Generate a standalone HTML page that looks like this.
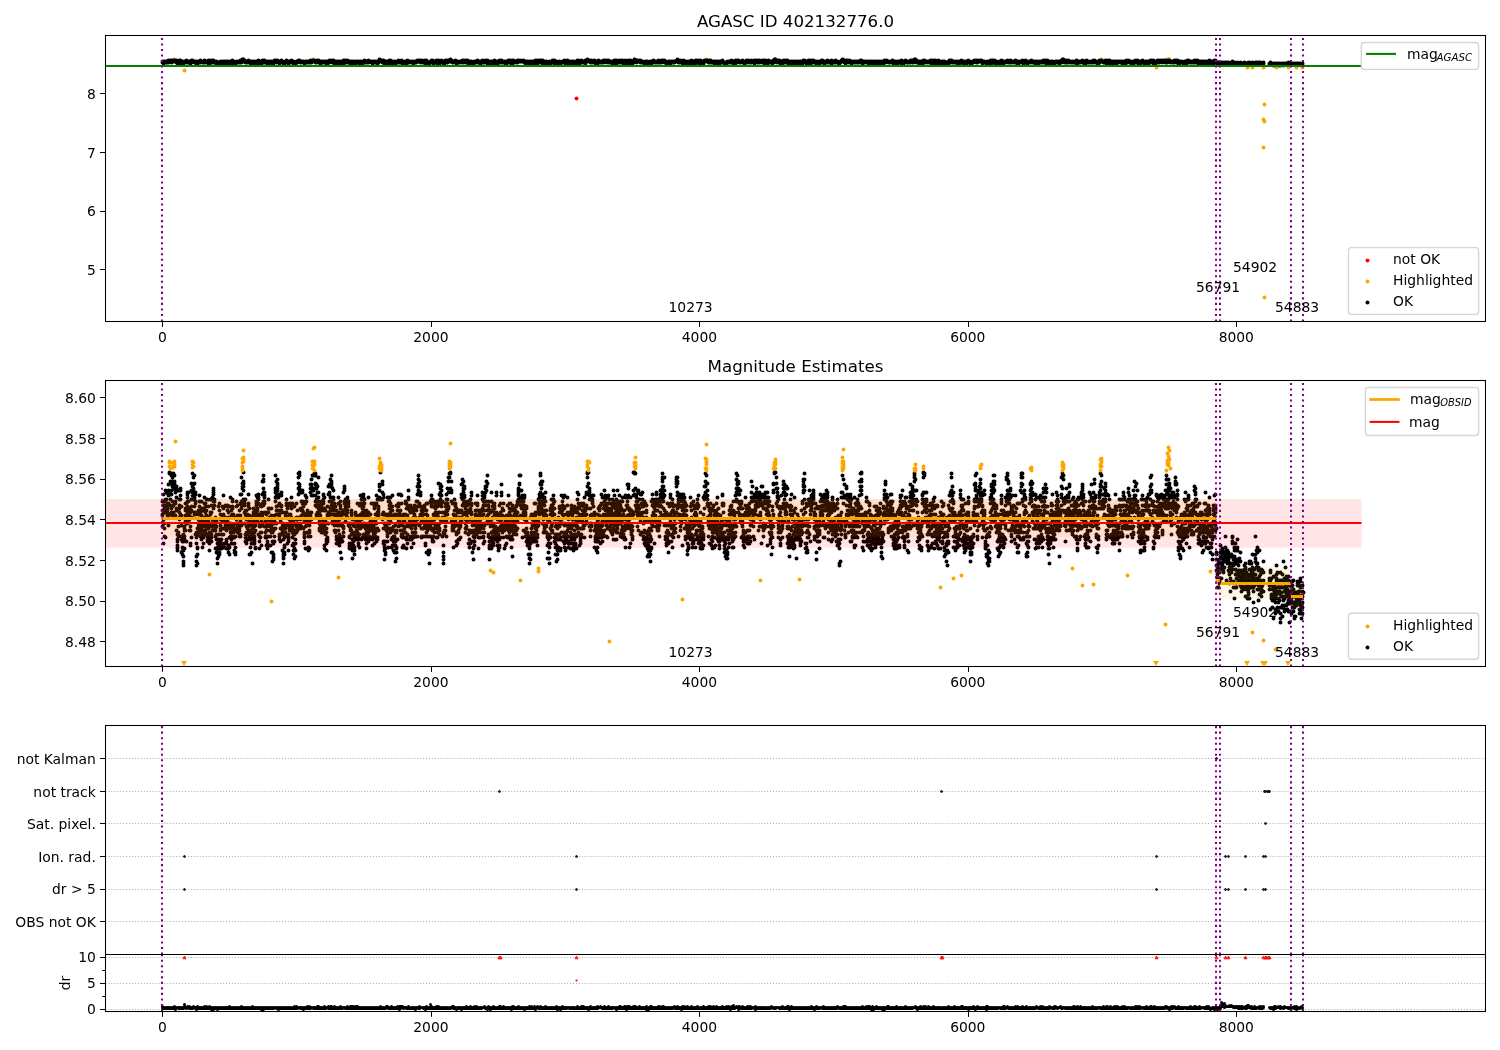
<!DOCTYPE html>
<html><head><meta charset="utf-8"><title>AGASC ID 402132776.0</title>
<style>html,body{margin:0;padding:0;background:#fff}svg{display:block;will-change:transform}</style></head>
<body>
<svg width="1500" height="1050" viewBox="0 0 1500 1050" font-family="'DejaVu Sans', 'Liberation Sans', sans-serif" font-size="13.89px">
<rect width="1500" height="1050" fill="#fff"/>
<defs>
<clipPath id="c1"><rect x="105.5" y="35.5" width="1380.0" height="286.0"/></clipPath>
<clipPath id="c2"><rect x="105.5" y="380.5" width="1380.0" height="286.0"/></clipPath>
<clipPath id="c3"><rect x="105.5" y="725.5" width="1380.0" height="286.0"/></clipPath>
</defs>
<g clip-path="url(#c1)">
<path transform="translate(.5 .5)" d="M174 59h0m69 0h0m70 0h0m67 0h0m70 0h0m185 0h0m71 0h0m69 0h0m68 0h0m258 0h0m67 0h0m-1 0h0m2 0h0m-1 1h0" stroke="#ffa500" stroke-width="4.0" stroke-linecap="round" fill="none"/>
<path transform="translate(.5 .5)" d="M162 62h0m0-1h0m0 1h0m1 1h0m0-2h0m0 0h0m1 0h0m0 0h0m0 0h0m0 1h0m1-1h0m0 1h0m0-1h0m1 1h0m0 0h0m0-1h0m0 0h0m1 0h0m0 1h0m0-1h0m1 0h0m0 1h0m0 0h0m0-2h0m1 0h0m0 0h0m0 1h0m0-1h0m1 0h0m0 1h0m0 0h0m1 1h0m0-1h0m0 1h0m0-2h0m1 0h0m0 1h0m0-1h0m1 1h0m0-1h0m0 1h0m0-1h0m1 1h0m0 0h0m0-1h0m0 0h0m1 1h0m0-1h0m0 1h0m1 0h0m0-1h0m0 2h0m1 1h0m0 0h0m0 0h0m0 0h0m1-1h0m0-1h0m0 2h0m1-2h0m0 0h0m0-1h0m0 1h0m1 1h0m0-1h0m0-1h0m0 1h0m1 1h0m0 0h0m0 1h0m1-2h0m0 2h0m0-2h0m0 1h0m1 0h0m0 1h0m0-1h0m1 0h0m0 0h0m0-1h0m0 1h0m1-1h0m0 0h0m0 0h0m1 0h0m0-1h0m0 2h0m0-1h0m1 0h0m0 0h0m0 0h0m0 1h0m1 0h0m0-1h0m0 1h0m1-1h0m0 0h0m0 0h0m0 1h0m1 0h0m0 0h0m0 1h0m1-1h0m0 0h0m0-2h0m0 1h0m1 0h0m0 0h0m0-1h0m1 1h0m0 0h0m0 0h0m0 0h0m1 0h0m0 1h0m0-1h0m1 0h0m0 0h0m0 1h0m0 0h0m1-1h0m0 2h0m0 0h0m0 0h0m1 0h0m0-1h0m0 0h0m1 0h0m0 0h0m0-1h0m0 0h0m1 1h0m0-1h0m0 1h0m1 0h0m0 0h0m0-2h0m0 1h0m1 0h0m0 0h0m0 0h0m1 1h0m0 0h0m0 0h0m0 0h0m1-1h0m0 0h0m0 0h0m0 1h0m1-2h0m0 2h0m0-1h0m1 0h0m0 1h0m0-1h0m0 0h0m1 0h0m0 0h0m0 0h0m1 1h0m0 0h0m0 0h0m0 0h0m1-1h0m0 2h0m0-3h0m1 2h0m0 1h0m0-1h0m0 1h0m1-3h0m0 2h0m0-1h0m0 1h0m1 0h0m0-1h0m0 1h0m1-1h0m0 0h0m0 1h0m0-2h0m1 2h0m0-2h0m0 1h0m1 1h0m0-1h0m0 1h0m0-1h0m1 1h0m0 0h0m0 0h0m1 1h0m0-2h0m0 1h0m0 1h0m1 0h0m0 0h0m0 0h0m1 0h0m0 0h0m0-1h0m0 0h0m1 0h0m0 1h0m0 0h0m0-1h0m1-1h0m0 0h0m0 2h0m1-1h0m0 1h0m0-1h0m0 1h0m1-1h0m0 0h0m0-1h0m1 0h0m0 0h0m0 2h0m0-2h0m1 1h0m0 0h0m0-1h0m1 0h0m0 0h0m0 0h0m0 0h0m1 1h0m0-1h0m0 2h0m1-2h0m0 0h0m0 0h0m0 1h0m1 1h0m0-1h0m0 0h0m0-1h0m1 1h0m0 0h0m0 0h0m1 0h0m0 0h0m0-1h0m1 0h0m0 1h0m0 1h0m0-2h0m1 0h0m0 0h0m0 0h0m0-1h0m1 2h0m0 1h0m0-2h0m1 2h0m0 0h0m0-1h0m0 0h0m1 1h0m0-1h0m0 1h0m1-1h0m0-1h0m0 1h0m0 0h0m1 0h0m0 0h0m0 0h0m0 0h0m1-1h0m0 1h0m0 0h0m1 0h0m0-1h0m0 1h0m0-1h0m1-1h0m0 1h0m0 1h0m1 0h0m0-1h0m0 0h0m0 0h0m1-1h0m0 0h0m0-1h0m1 1h0m0 1h0m0-2h0m0 1h0m1 1h0m0-1h0m0 0h0m1 2h0m0 0h0m0 0h0m0-1h0m1 0h0m0 1h0m0-1h0m0 1h0m1-1h0m0 1h0m0 0h0m1-1h0m0 0h0m0-1h0m0 1h0m1 0h0m0 1h0m0 0h0m1 1h0m0 0h0m0-2h0m0 2h0m1-2h0m0 1h0m0 0h0m1 1h0m0-2h0m0 0h0m0 1h0m1 0h0m0 0h0m0 0h0m1-1h0m0 1h0m0 0h0m0 0h0m1 1h0m0-1h0m0 0h0m0 0h0m1-1h0m0 0h0m0 0h0m1 2h0m0-1h0m0-1h0m0 1h0m1 0h0m0-2h0m0 2h0m1-1h0m0 1h0m0 0h0m0 0h0m1 0h0m0 0h0m0 1h0m1 0h0m0-1h0m0 0h0m0 0h0m1 0h0m0-1h0m0-1h0m1 1h0m0-1h0m0 2h0m0-2h0m1 0h0m0 1h0m0 0h0m0 1h0m1-1h0m0 0h0m0 1h0m1 0h0m0 0h0m0 0h0m0 0h0m1 0h0m0 1h0m0-2h0m1 1h0m0-1h0m0 1h0m0 1h0m1-1h0m0 0h0m0 0h0m1 0h0m0 0h0m0-1h0m0 0h0m1 0h0m0 1h0m0-1h0m1 1h0m0 1h0m0-1h0m0 2h0m1-1h0m0 0h0m0-2h0m0 1h0m1 0h0m0-1h0m0-1h0m1 1h0m0-1h0m0 0h0m0 0h0m1 1h0m0-1h0m0 2h0m1-1h0m0-1h0m0 1h0m0-1h0m1 1h0m0 0h0m0 0h0m0 1h0m1-1h0m0 2h0m0 0h0m1-1h0m0-1h0m0 1h0m0-1h0m1 0h0m0 0h0m0-1h0m1 1h0m0 1h0m0 0h0m0 0h0m1 0h0m0 0h0m0 1h0m1-1h0m0 0h0m0 1h0m0-1h0m1-1h0m0 1h0m0-1h0m1 1h0m0 0h0m0 0h0m0-2h0m1 1h0m0 0h0m0 0h0m1 0h0m0 2h0m0-1h0m0 0h0m1 0h0m0-1h0m0 0h0m0 0h0m1 0h0m0 0h0m0 0h0m1 1h0m0 0h0m0-2h0m0 1h0m1 1h0m0 0h0m0-1h0m1 2h0m0-2h0m0 1h0m0-1h0m1 2h0m0-1h0m0 1h0m0-1h0m1 1h0m0 0h0m0-1h0m1-1h0m0 0h0m0 0h0m1 1h0m0 0h0m0-1h0m0 1h0m1-2h0m0 1h0m0-1h0m1 1h0m0-1h0m0 0h0m0 0h0m1 1h0m0 1h0m0 0h0m0 0h0m1-1h0m0 1h0m0-1h0m1 0h0m0 0h0m0 0h0m0 0h0m1 1h0m0-1h0m0 0h0m1 1h0m0 0h0m0 1h0m0-1h0m1 0h0m0-1h0m0 0h0m1 0h0m0 0h0m0 1h0m0 0h0m1-1h0m0 0h0m0 1h0m0 0h0m1 0h0m0 0h0m0-1h0m1 1h0m0 0h0m0 0h0m0 0h0m1 0h0m0 0h0m0-2h0m1 1h0m0 1h0m0-1h0m0 0h0m1-1h0m0 1h0m0 0h0m1-1h0m0 0h0m0 0h0m0 0h0m1 0h0m0 0h0m0 0h0m1 1h0m0 1h0m0-1h0m0 0h0m1 0h0m0 0h0m0 0h0m0 1h0m1-2h0m0 0h0m0 0h0m1 0h0m0 1h0m0 1h0m0-1h0m1 1h0m0-1h0m0 0h0m1 0h0m0 1h0m0 0h0m0 1h0m1-1h0m0-1h0m0 0h0m0 1h0m1 0h0m0-1h0m0 1h0m1-1h0m0 1h0m0-1h0m0 0h0m1 0h0m0 1h0m0 0h0m1-1h0m0 1h0m0-1h0m0 0h0m1 2h0m0 0h0m0-2h0m1 0h0m0 0h0m0 2h0m0-1h0m1-1h0m0 0h0m0 1h0m1 0h0m0-1h0m0-1h0m0 2h0m1-1h0m0 0h0m0 0h0m1 0h0m0 0h0m0 0h0m0-1h0m1 0h0m0 0h0m0 2h0m0-1h0m1-1h0m0 1h0m0 0h0m1 1h0m0 1h0m0-1h0m0-1h0m1 1h0m0 0h0m0-1h0m1 0h0m0 1h0m0 0h0m0 0h0m1 1h0m0-1h0m0-1h0m1 1h0m0-1h0m0 1h0m0 0h0m1-1h0m0 1h0m0 1h0m0-2h0m1 1h0m0-1h0m0 1h0m1 0h0m0 0h0m0 0h0m1 0h0m0 0h0m0-1h0m0 2h0m1 0h0m0-2h0m0-1h0m0 1h0m1-1h0m0 0h0m0 0h0m1 1h0m0-1h0m0 2h0m0-1h0m1 0h0m0 1h0m0 0h0m1 0h0m0 0h0m0-1h0m0-1h0m1 2h0m0-1h0m0 0h0m1 1h0m0 0h0m0-1h0m0 0h0m1 0h0m0 2h0m0 0h0m0 0h0m1-2h0m0 1h0m0 0h0m1-1h0m0 1h0m0 0h0m0 0h0m1 1h0m0-1h0m0 0h0m1-1h0m0 1h0m0-1h0m0 2h0m1-1h0m0 0h0m0 1h0m1-1h0m0-1h0m0 0h0m0 0h0m1 1h0m0 0h0m0-1h0m1 0h0m0 1h0m0 0h0m0-1h0m1 1h0m0 1h0m0 0h0m0-1h0m1-1h0m0 2h0m0-2h0m1 0h0m0 0h0m0 0h0m0 1h0m1 1h0m0-1h0m0 0h0m1-1h0m0 0h0m0 1h0m0-1h0m1 0h0m0-1h0m0 2h0m1-1h0m0 1h0m0-1h0m0 0h0m1 1h0m0 0h0m0 0h0m0-1h0m1 1h0m0 0h0m0 0h0m1-2h0m0 1h0m0 1h0m0-1h0m1 0h0m0 0h0m0 0h0m1 0h0m0 0h0m0 0h0m0 0h0m1 1h0m0 0h0m0 0h0m1-1h0m0 1h0m0 0h0m0 1h0m1-1h0m0 0h0m0-1h0m1 1h0m0 0h0m0 0h0m0-1h0m1 1h0m0 0h0m0-1h0m0 0h0m1 0h0m0 1h0m0 0h0m1 0h0m0 1h0m0-2h0m0 1h0m1 0h0m0-1h0m0 0h0m1 0h0m0 0h0m0-1h0m0-1h0m1 1h0m0 0h0m0 0h0m0 0h0m1 1h0m0 0h0m0-1h0m1 0h0m0 0h0m0 2h0m1-2h0m0 1h0m0 1h0m0-1h0m1 0h0m0 2h0m0-1h0m0 1h0m1-1h0m0 1h0m0-2h0m1 0h0m0 1h0m0 0h0m0 0h0m1-1h0m0 1h0m0-1h0m1 2h0m0-2h0m0 1h0m0-1h0m1 1h0m0-2h0m0 1h0m1-1h0m0 1h0m0 1h0m0-1h0m1 2h0m0-1h0m0 0h0m1 0h0m0 0h0m0-1h0m0 2h0m1 0h0m0 0h0m0 0h0m0-1h0m1 1h0m0-2h0m0 2h0m1-1h0m0 1h0m0-2h0m0 2h0m1-1h0m0 0h0m0 0h0m1 0h0m0-1h0m0 0h0m0 0h0m1-1h0m0 2h0m0-1h0m1 0h0m0 1h0m0 0h0m0 0h0m1 0h0m0 0h0m0-1h0m0 0h0m1-1h0m0 2h0m0 0h0m1 1h0m0 0h0m0 0h0m0-1h0m1 0h0m0 0h0m0 1h0m1-1h0m0 0h0m0 0h0m0-1h0m1 0h0m0 1h0m0 0h0m1 1h0m0-1h0m0-1h0m0 1h0m1 0h0m0-1h0m0 1h0m0-2h0m1 2h0m0-1h0m0 1h0m1-1h0m0 1h0m0 0h0m0-1h0m1 0h0m0 0h0m0 0h0m1 0h0m0 1h0m0 0h0m0 0h0m1-1h0m0 1h0m0-1h0m1 2h0m0 0h0m0-1h0m0 0h0m1-1h0m0 1h0m0-1h0m1 1h0m0-1h0m0 0h0m0 0h0m1 0h0m0 1h0m0-1h0m0 0h0m1 0h0m0 0h0m0-1h0m1 1h0m0-1h0m0 1h0m1-1h0m0 0h0m0 1h0m0 0h0m1-1h0m0 1h0m0 0h0m0 1h0m1-1h0m0 0h0m0-1h0m1 2h0m0-1h0m0 0h0m0 1h0m1 0h0m0 0h0m0 0h0m0 0h0m1-1h0m0 0h0m0-1h0m1 2h0m0-1h0m0 2h0m0-1h0m1 0h0m0 0h0m0-2h0m1 2h0m0 0h0m0 1h0m0-1h0m1 0h0m0 0h0m0 0h0m1 1h0m0-1h0m0 0h0m0 1h0m1-1h0m0-1h0m0 0h0m1 0h0m0-1h0m0 0h0m0 1h0m1-1h0m0 1h0m0 1h0m1 1h0m0-1h0m0 0h0m0-1h0m1 0h0m0 0h0m0 0h0m1 0h0m0 1h0m0 0h0m0-1h0m1 0h0m0-1h0m0 2h0m0 0h0m1 1h0m0-1h0m0 0h0m1-1h0m0 0h0m0 0h0m0-1h0m1 1h0m0 1h0m0 1h0m1-2h0m0 0h0m0 1h0m0-1h0m1 0h0m0-1h0m0 1h0m0 0h0m1 0h0m0 0h0m0 0h0m1 0h0m0 1h0m0 1h0m0 0h0m1-1h0m0 1h0m0-1h0m1-2h0m0 1h0m0 1h0m0 0h0m1 0h0m0-1h0m0 1h0m1-2h0m0 2h0m0-1h0m0-1h0m1 0h0m0 0h0m0 1h0m1 0h0m0 0h0m0-1h0m0 0h0m1-1h0m0 2h0m0 0h0m0-1h0m1 0h0m0 1h0m0-1h0m1 2h0m0-1h0m0 1h0m0 0h0m1-1h0m0 1h0m0-1h0m1 0h0m0 0h0m0 0h0m0 0h0m1 0h0m0-1h0m0 2h0m1 0h0m0 0h0m0 0h0m0 1h0m1-1h0m0 0h0m0-1h0m1 1h0m0 0h0m0 0h0m0 0h0m1-1h0m0 1h0m0 0h0m1 0h0m0 0h0m0-1h0m0 1h0m1-1h0m0 0h0m0 0h0m0 0h0m1-1h0m0 1h0m0 1h0m1-1h0m0-1h0m0 2h0m0-1h0m1 0h0m0 0h0m0-1h0m1 1h0m0 1h0m0 0h0m0-1h0m1 1h0m0-1h0m0-1h0m1 1h0m0-1h0m0 1h0m0 1h0m1 1h0m0-2h0m0 1h0m1-1h0m0 2h0m0-2h0m0 0h0m1 0h0m0 0h0m0 1h0m0-1h0m1 1h0m0-1h0m0 1h0m1 0h0m0 1h0m0 0h0m0 0h0m1 0h0m0-1h0m0 0h0m0 1h0m1-1h0m0 0h0m0-1h0m1 0h0m0 0h0m0 1h0m0 0h0m1 0h0m0 0h0m0-1h0m1 0h0m0 1h0m0 0h0m0-2h0m1 2h0m0-1h0m0 0h0m1 1h0m0-1h0m0 0h0m0 1h0m1 0h0m0 1h0m0-2h0m1 0h0m0 0h0m0 0h0m0 1h0m1 0h0m0-1h0m0-1h0m0 2h0m1 0h0m0 0h0m0 0h0m1 0h0m0-1h0m0 1h0m0-1h0m1 0h0m0-1h0m0 0h0m1 1h0m0 0h0m0 0h0m1-1h0m0 0h0m0 3h0m0-1h0m1 1h0m0-1h0m0 0h0m0 0h0m1 1h0m0-1h0m0 0h0m1-1h0m0 1h0m0 0h0m0 0h0m1 1h0m0-2h0m0 0h0m1 0h0m0 1h0m0-1h0m0 0h0m1 2h0m0-1h0m0 0h0m0-1h0m1 1h0m0-2h0m0 1h0m1 2h0m0-2h0m0 2h0m0-2h0m1 0h0m0 0h0m0 0h0m1 1h0m0 1h0m0-2h0m0 1h0m1-1h0m0 1h0m0 0h0m1 0h0m0 0h0m0 0h0m0-2h0m1 1h0m0 1h0m0 0h0m0-1h0m1-1h0m0 2h0m0-1h0m1 1h0m0-1h0m0 1h0m1 0h0m0-1h0m0 1h0m0-1h0m1 1h0m0-1h0m0 0h0m0 0h0m1 2h0m0-2h0m0 1h0m1 1h0m0-2h0m0 1h0m0 0h0m1 0h0m0 0h0m0 0h0m1 0h0m0-1h0m0 0h0m0-1h0m1 0h0m0 1h0m0 1h0m1-2h0m0 2h0m0 0h0m0 0h0m1-1h0m0 1h0m0 1h0m1 0h0m0 0h0m0-3h0m0 1h0m1 1h0m0 0h0m0 0h0m0-2h0m1 1h0m0 1h0m0-1h0m1 0h0m0 0h0m0 0h0m0 0h0m1 0h0m0 0h0m0 1h0m1 0h0m0-1h0m0 0h0m0-1h0m1 0h0m0 1h0m0-1h0m0 1h0m1 0h0m0-1h0m0 0h0m1 1h0m0-1h0m0 1h0m0-1h0m1 1h0m0 0h0m0 0h0m1 0h0m0 0h0m0 0h0m0 0h0m1-1h0m0 1h0m0-1h0m1 1h0m0 0h0m0 1h0m0-1h0m1 0h0m0 1h0m0 1h0m0-1h0m1-1h0m0 1h0m0 1h0m1 0h0m0-2h0m0 2h0m1-1h0m0 0h0m0-1h0m0 1h0m1 0h0m0 1h0m0 0h0m0-1h0m1 1h0m0 0h0m0-2h0m1 1h0m0-1h0m0 1h0m0-1h0m1 0h0m0 0h0m0 0h0m1 2h0m0-2h0m0 1h0m0 1h0m1-2h0m0 2h0m0-1h0m1-1h0m0 2h0m0-3h0m0 2h0m1 0h0m0-1h0m0 1h0m1-1h0m0 2h0m0-3h0m0 1h0m1 0h0m0 0h0m0 0h0m1 1h0m0 0h0m0-2h0m0 2h0m1-2h0m0 1h0m0 0h0m0 0h0m1 0h0m0-1h0m0 0h0m1 0h0m0 1h0m0 1h0m0 1h0m1-1h0m0 0h0m0 0h0m1-1h0m0 2h0m0-1h0m0-1h0m1 0h0m0 1h0m0-1h0m1 1h0m0 1h0m0-1h0m0-1h0m1 2h0m0-1h0m0 0h0m0 0h0m1 1h0m0-1h0m0 1h0m1-1h0m0 1h0m0-2h0m0 1h0m1 0h0m0 0h0m0 1h0m1-1h0m0 0h0m0 0h0m0 0h0m1 0h0m0-1h0m0-1h0m1 0h0m0 2h0m0-1h0m0 1h0m1-2h0m0 1h0m0 2h0m1-1h0m0 0h0m0 0h0m0 0h0m1 0h0m0-1h0m0 1h0m0 0h0m1 1h0m0 0h0m0-1h0m1 0h0m0 1h0m0 0h0m0-1h0m1 0h0m0 0h0m0-1h0m1 2h0m0 0h0m0-1h0m0 0h0m1 0h0m0 0h0m0 0h0m0 0h0m1 0h0m0-1h0m0 0h0m1 1h0m0-1h0m0 0h0m0 1h0m1-1h0m0-1h0m0 2h0m1 1h0m0-1h0m0 0h0m0 0h0m1 0h0m0 0h0m0 1h0m1-2h0m0 2h0m0-2h0m0-1h0m1 2h0m0-1h0m0 2h0m0 0h0m1-2h0m0 0h0m0 0h0m1 2h0m0-1h0m0 0h0m1-1h0m0 0h0m0 0h0m0 1h0m1-1h0m0 0h0m0 2h0m0-2h0m1 1h0m0 0h0m0 1h0m1-2h0m0 1h0m0 1h0m0-2h0m1 1h0m0 0h0m0 1h0m1-1h0m0 1h0m0-1h0m0-1h0m1 1h0m0-1h0m0-1h0m1 1h0m0 1h0m0-2h0m0 0h0m1 2h0m0 1h0m0-1h0m0 0h0m1 0h0m0-1h0m0 1h0m1 0h0m0-1h0m0 0h0m0-1h0m1 2h0m0 0h0m0 0h0m1 0h0m0-1h0m0 1h0m0 0h0m1 0h0m0-1h0m0 0h0m1 2h0m0-2h0m0 1h0m0-2h0m1 1h0m0 0h0m0-1h0m1-1h0m0 0h0m0 0h0m0 2h0m1-1h0m0 0h0m0 0h0m1 0h0m0 1h0m0 0h0m0-1h0m1 1h0m0 1h0m0-1h0m0 0h0m1 0h0m0-1h0m0 2h0m1-1h0m0 0h0m0 0h0m0 1h0m1-1h0m0 0h0m0 0h0m1 0h0m0 0h0m0-1h0m0 2h0m1 0h0m0 0h0m0-1h0m0 2h0m1-1h0m0-1h0m0 0h0m1 1h0m0 0h0m0 1h0m1-1h0m0-2h0m0 1h0m0 0h0m1 1h0m0-1h0m0 1h0m0-1h0m1 1h0m0 0h0m0-1h0m1 1h0m0 0h0m0-1h0m0 0h0m1 0h0m0 1h0m0-1h0m0 1h0m1-1h0m0-1h0m0 2h0m1-2h0m0 1h0m0 0h0m0 0h0m1-1h0m0 1h0m0 0h0m1 0h0m0 0h0m0 1h0m0 0h0m1-1h0m0 0h0m0-1h0m1 0h0m0 2h0m0 0h0m0 0h0m1-1h0m0 1h0m0-1h0m1 0h0m0 1h0m0-1h0m0 1h0m1 0h0m0-1h0m0 0h0m1 0h0m0 2h0m0-1h0m0-1h0m1 1h0m0-1h0m0 1h0m0-1h0m1 0h0m0-1h0m0 3h0m1-1h0m0 1h0m0-1h0m0-2h0m1 1h0m0 2h0m0-3h0m1 2h0m0 0h0m0 0h0m0-1h0m1 0h0m0 1h0m0-1h0m1 0h0m0-1h0m0 0h0m0 2h0m1 0h0m0-1h0m0 1h0m1 0h0m0-2h0m0 2h0m0-1h0m1 1h0m0-2h0m0 1h0m0 1h0m1 0h0m0 1h0m0-1h0m1 0h0m0-1h0m0 0h0m0 1h0m1-2h0m0 1h0m0 1h0m1 0h0m0 1h0m0-2h0m0 0h0m1 1h0m0-1h0m0 0h0m1-1h0m0 0h0m0 1h0m0 1h0m1-1h0m0 1h0m0-1h0m0 2h0m1 0h0m0-3h0m0 2h0m1 1h0m0-1h0m0 0h0m0 0h0m1 0h0m0 1h0m0-1h0m1 0h0m0-1h0m0-1h0m0 1h0m1-1h0m0-1h0m0 1h0m1 0h0m0 0h0m0 0h0m0 1h0m1 0h0m0 0h0m0 1h0m1-1h0m0-1h0m0 1h0m0-1h0m1 1h0m0 0h0m0 0h0m1 0h0m0 0h0m0-1h0m0 1h0m1-1h0m0 1h0m0 1h0m0 0h0m1-1h0m0 0h0m0 1h0m1-1h0m0 1h0m0-1h0m0 1h0m1 0h0m0 0h0m0 0h0m1 0h0m0 0h0m0 1h0m0-1h0m1 0h0m0-1h0m0 2h0m1-2h0m0 0h0m0 0h0m0 2h0m1-1h0m0-1h0m0 2h0m1-1h0m0 1h0m0-1h0m0 1h0m1-1h0m0 0h0m0 0h0m0 1h0m1 0h0m0-1h0m0-1h0m1 1h0m0 0h0m0 1h0m0-2h0m1 1h0m0-1h0m0 0h0m1 0h0m0-1h0m0 1h0m0 0h0m1 0h0m0 0h0m0 1h0m1-1h0m0 1h0m0-1h0m0 1h0m1-1h0m0 0h0m0 0h0m0 1h0m1 0h0m0 0h0m0-1h0m1 1h0m0-2h0m0 2h0m0 0h0m1 0h0m0-1h0m0 0h0m1 0h0m0 0h0m0 0h0m0 1h0m1-2h0m0 2h0m0-1h0m1 0h0m0-1h0m0 1h0m0-1h0m1 1h0m0 0h0m0-1h0m1 0h0m0 2h0m0-1h0m0 0h0m1 0h0m0 1h0m0 0h0m1 0h0m0 1h0m0-1h0m0 0h0m1 0h0m0 0h0m0 1h0m0 0h0m1-1h0m0-1h0m0 0h0m1 2h0m0-2h0m0 0h0m0 1h0m1-1h0m0 0h0m0 2h0m1-1h0m0-1h0m0 1h0m0-1h0m1 1h0m0-1h0m0 0h0m1 1h0m0-1h0m0 1h0m0-1h0m1 0h0m0 1h0m0-1h0m0 1h0m1-1h0m0 0h0m0 0h0m1-1h0m0 0h0m0 0h0m0 1h0m1-2h0m0 2h0m0-1h0m1 1h0m0-1h0m0 1h0m0 1h0m1 0h0m0 0h0m0-1h0m1-1h0m0 1h0m0 0h0m0-1h0m1 2h0m0-1h0m0 0h0m0 1h0m1-1h0m0 2h0m0-1h0m1-1h0m0-1h0m0 1h0m0-1h0m1 1h0m0 1h0m0-1h0m1 1h0m0-1h0m0 2h0m0-2h0m1 0h0m0 0h0m0 0h0m1 1h0m0 1h0m0-1h0m0 1h0m1-1h0m0 1h0m0-2h0m0 2h0m1 0h0m0-2h0m0 1h0m1 0h0m0-1h0m0 0h0m1 0h0m0-1h0m0 0h0m0 2h0m1 0h0m0 1h0m0-1h0m0 0h0m1-1h0m0 1h0m0 1h0m1-2h0m0 1h0m0 0h0m0 0h0m1 1h0m0 0h0m0-3h0m1 1h0m0 0h0m0-1h0m0 1h0m1 1h0m0-1h0m0 0h0m0 0h0m1-1h0m0 2h0m0-2h0m1 1h0m0 2h0m0-1h0m1 1h0m0-2h0m0 0h0m0-1h0m1 1h0m0 1h0m0-1h0m0 0h0m1 1h0m0 0h0m0-1h0m1 2h0m0 0h0m0-2h0m0 0h0m1 0h0m0-1h0m0 1h0m1-1h0m0 0h0m0 0h0m0 1h0m1-1h0m0 0h0m0 0h0m1 0h0m0 1h0m0 0h0m0-1h0m1 1h0m0 0h0m0 1h0m0-1h0m1 1h0m0 0h0m0-2h0m1 2h0m0-2h0m0 1h0m0-1h0m1 1h0m0 1h0m0-1h0m1 1h0m0-1h0m0 1h0m0 0h0m1-1h0m0 1h0m0 0h0m1 0h0m0-1h0m0 2h0m0 0h0m1-2h0m0 1h0m0 0h0m0-1h0m1 1h0m0-1h0m0 0h0m1 0h0m0 0h0m0 2h0m0 0h0m1-2h0m0 1h0m0 0h0m1 1h0m0-1h0m0 1h0m0-1h0m1 0h0m0-1h0m0 1h0m1 0h0m0 0h0m0 0h0m0-1h0m1 1h0m0-2h0m0 1h0m0-1h0m1 2h0m0 0h0m0 0h0m1 0h0m0 0h0m0 1h0m1-1h0m0 1h0m0-1h0m0 1h0m1 0h0m0 0h0m0-1h0m0 0h0m1-1h0m0 0h0m0 0h0m1 1h0m0 0h0m0-1h0m0 1h0m1-1h0m0 0h0m0 1h0m0 0h0m1 0h0m0 0h0m0 0h0m1-2h0m0 1h0m0 1h0m0 0h0m1-1h0m0 1h0m0 0h0m1 1h0m0 0h0m0-2h0m0 0h0m1 1h0m0-1h0m0 1h0m1 1h0m0-2h0m0 0h0m0-1h0m1 1h0m0 1h0m0-2h0m1 0h0m0 0h0m0 1h0m0 0h0m1-1h0m0 0h0m0 1h0m1 0h0m0 0h0m0 0h0m0 1h0m1 0h0m0-1h0m0 0h0m0 0h0m1 0h0m0 0h0m0 0h0m1 0h0m0 1h0m0-2h0m1 2h0m0-1h0m0 1h0m0-1h0m1 2h0m0-1h0m0 0h0m0 1h0m1-1h0m0-1h0m0 0h0m1-1h0m0 1h0m0 1h0m0 0h0m1 0h0m0 0h0m0 0h0m1-1h0m0 0h0m0-1h0m0 0h0m1 2h0m0 0h0m0 0h0m0-1h0m1 1h0m0-1h0m0 1h0m1 0h0m0-2h0m0 1h0m0-1h0m1 1h0m0 0h0m0 0h0m1 0h0m0 1h0m0 0h0m0-1h0m1 2h0m0-2h0m0-1h0m1 1h0m0-1h0m0 1h0m0 1h0m1-1h0m0 0h0m0-1h0m0 0h0m1 2h0m0-1h0m0 0h0m1-1h0m0 2h0m0-1h0m0 0h0m1 0h0m0-1h0m0 2h0m1-1h0m0 0h0m0 0h0m0 0h0m1 1h0m0-1h0m0 0h0m1-1h0m0 1h0m0-1h0m0 1h0m1 1h0m0-1h0m0 0h0m0 1h0m1 1h0m0-2h0m0-1h0m1 0h0m0 1h0m0 0h0m1 2h0m0-2h0m0 0h0m0 0h0m1 0h0m0 0h0m0 1h0m0 1h0m1-3h0m0 0h0m0 0h0m1 1h0m0 0h0m0 1h0m0-1h0m1 1h0m0-1h0m0 1h0m1 0h0m0 0h0m0-1h0m0 0h0m1 1h0m0 1h0m0-1h0m1-1h0m0 1h0m0-2h0m0 0h0m1-1h0m0 2h0m0 0h0m0-1h0m1-1h0m0 1h0m0 1h0m1 1h0m0-1h0m0-1h0m1 1h0m0 0h0m0 0h0m0 0h0m1-1h0m0 0h0m0 1h0m0 1h0m1-1h0m0-1h0m0 0h0m1 3h0m0-1h0m0 0h0m0-1h0m1 1h0m0-1h0m0 1h0m1-1h0m0 2h0m0-1h0m0-1h0m1-1h0m0 0h0m0 1h0m1 0h0m0 1h0m0-2h0m0 0h0m1 2h0m0 0h0m0 0h0m0-1h0m1 0h0m0-1h0m0 2h0m1-2h0m0 1h0m0 1h0m0 0h0m1 1h0m0-2h0m0 2h0m1-1h0m0 1h0m0-1h0m0 1h0m1-2h0m0 1h0m0-1h0m0 0h0m1 1h0m0 0h0m0-1h0m1 0h0m0 0h0m0 2h0m1 0h0m0-1h0m0 0h0m0 0h0m1-1h0m0 0h0m0 1h0m0 0h0m1 1h0m0-2h0m0 2h0m1-2h0m0 2h0m0-1h0m0-1h0m1 1h0m0 0h0m0 0h0m1 0h0m0-1h0m0 1h0m0-1h0m1 1h0m0 0h0m0-1h0m0 2h0m1-1h0m0-1h0m0 1h0m1-1h0m0 0h0m0 2h0m0-1h0m1 1h0m0-2h0m0 0h0m1 0h0m0-1h0m0 0h0m0 1h0m1-1h0m0 0h0m0 1h0m1 1h0m0 0h0m0 0h0m0 0h0m1-1h0m0 1h0m0 1h0m1 0h0m0-1h0m0 1h0m0-2h0m1 0h0m0-1h0m0 1h0m1-1h0m0 1h0m0 1h0m0-2h0m1 1h0m0 2h0m0-2h0m1 1h0m0-2h0m0 2h0m0 0h0m1 0h0m0-1h0m0 1h0m0 0h0m1 0h0m0-2h0m0 2h0m1 0h0m0 0h0m0 0h0m0 0h0m1-1h0m0 1h0m0-1h0m1 1h0m0 0h0m0 1h0m0-1h0m1 0h0m0 0h0m0-1h0m1 2h0m0-2h0m0 1h0m0 0h0m1 1h0m0-1h0m0 1h0m0-1h0m1 0h0m0 0h0m0 0h0m1 0h0m0-1h0m0 0h0m0-1h0m1 0h0m0 2h0m0-1h0m1 1h0m0-1h0m0 0h0m0 0h0m1 2h0m0-2h0m0 0h0m1 0h0m0 0h0m0 0h0m0 0h0m1 0h0m0 1h0m0-1h0m1-1h0m0 1h0m0 0h0m0 1h0m1 0h0m0 0h0m0 0h0m0 0h0m1 0h0m0-1h0m0 0h0m1 0h0m0 1h0m0-1h0m0 1h0m1 0h0m0-2h0m0 3h0m1-2h0m0 0h0m0 0h0m0 1h0m1-1h0m0 1h0m0 0h0m1-1h0m0 1h0m0-1h0m0 0h0m1 1h0m0-2h0m0 2h0m0-1h0m1 0h0m0 0h0m0 0h0m1 1h0m0 0h0m0 0h0m0-1h0m1 2h0m0-1h0m0 1h0m1-1h0m0 0h0m0 1h0m0 0h0m1-1h0m0 0h0m0-1h0m0 1h0m1-1h0m0-1h0m0 1h0m1-1h0m0-1h0m0 0h0m0 0h0m1 1h0m0 0h0m0 0h0m1 0h0m0 0h0m0 1h0m0 1h0m1-1h0m0 2h0m0-2h0m1 1h0m0-1h0m0-1h0m0 1h0m1-1h0m0 1h0m0-1h0m1 2h0m0 0h0m0-1h0m0 0h0m1 0h0m0-1h0m0 1h0m1 1h0m0-1h0m0 0h0m0 1h0m1-1h0m0 2h0m0 0h0m1-1h0m0 0h0m0 0h0m0-1h0m1 1h0m0 0h0m0 0h0m0-1h0m1 1h0m0-1h0m0 1h0m1-1h0m0 1h0m0-1h0m0 0h0m1 1h0m0-1h0m0 0h0m1 0h0m0 1h0m0 0h0m0 0h0m1 0h0m0-1h0m0 1h0m1-1h0m0 1h0m0-1h0m0 1h0m1-1h0m0-1h0m0 1h0m1 0h0m0-1h0m0 0h0m0 0h0m1 3h0m0-2h0m0 1h0m0 1h0m1-2h0m0 0h0m0 0h0m1 0h0m0 1h0m0 0h0m0-1h0m1 1h0m0-1h0m0 0h0m0 1h0m1-1h0m0 0h0m0 0h0m1 1h0m0 0h0m0 0h0m1 1h0m0-2h0m0 1h0m0 0h0m1 0h0m0-1h0m0 1h0m1 1h0m0-1h0m0-1h0m0 0h0m1 1h0m0 1h0m0 0h0m0-2h0m1 2h0m0-1h0m0 0h0m1 1h0m0-2h0m0 2h0m0-2h0m1 1h0m0-1h0m0 0h0m1 1h0m0 0h0m0 0h0m0 1h0m1-2h0m0 2h0m0-2h0m0 0h0m1 1h0m0 0h0m0 0h0m1-1h0m0 2h0m0-1h0m0 1h0m1-2h0m0 0h0m0 1h0m1 0h0m0 0h0m0-1h0m0 0h0m1 3h0m0-3h0m0 2h0m1-1h0m0 1h0m0-1h0m0 0h0m1 1h0m0-1h0m0 0h0m1-1h0m0 1h0m0-2h0m0 0h0m1 1h0m0 1h0m0-1h0m1-1h0m0 1h0m0 0h0m0 0h0m1 0h0m0 0h0m0 0h0m0 0h0m1 1h0m0-1h0m0 1h0m1-1h0m0 1h0m0-1h0m0 1h0m1 0h0m0 0h0m0 0h0m1-1h0m0 0h0m0 0h0m0 0h0m1-1h0m0 2h0m0-2h0m1 3h0m0-2h0m0 1h0m0-1h0m1 1h0m0-1h0m0 1h0m0-1h0m1 0h0m0 2h0m0-2h0m1 1h0m0 0h0m0 1h0m1 0h0m0-1h0m0-1h0m0 1h0m1-1h0m0 1h0m0 0h0m0 0h0m1 0h0m0-1h0m0 1h0m1-1h0m0 1h0m0-1h0m0 1h0m1 1h0m0-3h0m0 1h0m0 0h0m1 0h0m0 0h0m0 0h0m1 1h0m0-1h0m0 1h0m0 1h0m1-1h0m0 0h0m0 0h0m1-1h0m0 0h0m0-1h0m0 0h0m1 2h0m0 0h0m0 0h0m1-1h0m0 1h0m0 0h0m0-1h0m1 1h0m0 0h0m0 0h0m0 0h0m1-1h0m0 1h0m0 0h0m1 0h0m0-1h0m0 0h0m0-1h0m1 1h0m0 0h0m0-1h0m1 0h0m0 1h0m0 1h0m0-1h0m1 1h0m0-1h0m0-1h0m1 1h0m0-1h0m0-1h0m0 2h0m1-2h0m0 1h0m0-1h0m1 3h0m0-1h0m0 0h0m0-1h0m1 2h0m0-1h0m0 1h0m1 0h0m0-1h0m0 0h0m0 0h0m1 1h0m0 1h0m0-2h0m1 1h0m0 0h0m0 0h0m0-1h0m1 0h0m0 1h0m0 0h0m1 1h0m0-2h0m0 0h0m0 0h0m1 1h0m0-2h0m0 0h0m0 0h0m1 0h0m0 1h0m0 1h0m1 0h0m0-1h0m0 0h0m0 0h0m1 0h0m0 0h0m0 0h0m1 1h0m0-1h0m0 0h0m0 1h0m1 0h0m0 0h0m0-1h0m1 0h0m0 0h0m0 0h0m0 0h0m1 1h0m0-2h0m0 2h0m0-1h0m1 1h0m0 1h0m0-3h0m1 2h0m0 0h0m0 0h0m0-1h0m1 1h0m0-1h0m0-1h0m1 3h0m0-1h0m0-1h0m0 0h0m1 1h0m0 1h0m0-3h0m1 1h0m0 1h0m0 0h0m0-1h0m1 0h0m0 1h0m0-1h0m1 2h0m0-3h0m0 1h0m0 0h0m1 2h0m0 0h0m0-1h0m0 0h0m1 0h0m0 0h0m0 1h0m1-1h0m0-1h0m0 0h0m0 0h0m1 1h0m0 1h0m0-2h0m1 1h0m0 0h0m0-1h0m0 1h0m1-1h0m0 1h0m0 0h0m0 0h0m1 0h0m0 0h0m0 1h0m1-1h0m0 0h0m0 0h0m1 1h0m0-1h0m0 1h0m0-1h0m1 1h0m0 0h0m0-1h0m0-1h0m1 1h0m0-2h0m0 1h0m1 0h0m0 0h0m0 0h0m0-1h0m1 2h0m0-2h0m0 0h0m1 2h0m0-1h0m0 0h0m0 0h0m1 0h0m0 0h0m0 1h0m1 0h0m0-1h0m0 0h0m0 1h0m1 0h0m0 0h0m0 0h0m0 0h0m1 0h0m0-1h0m0 1h0m1 1h0m0-1h0m0-1h0m0 1h0m1-1h0m0 1h0m0 0h0m1 0h0m0-1h0m0 1h0m0 1h0m1-2h0m0 0h0m0 0h0m0 1h0m1-1h0m0 1h0m0-2h0m1 2h0m0-1h0m0 0h0m0 0h0m1 0h0m0 2h0m0-1h0m1 1h0m0 0h0m0-2h0m0 1h0m1 0h0m0-1h0m0 1h0m1 1h0m0-1h0m0-1h0m0 0h0m1 0h0m0 1h0m0 0h0m1 0h0m0-2h0m0 2h0m0 0h0m1 0h0m0 0h0m0-1h0m1 2h0m0-1h0m0 0h0m0 1h0m1-1h0m0 0h0m0 1h0m1-2h0m0 1h0m0 0h0m0-1h0m1 0h0m0 0h0m0 0h0m0 1h0m1-2h0m0 1h0m0 0h0m1 0h0m0-1h0m0 0h0m0 1h0m1 0h0m0-1h0m0 2h0m1-1h0m0 0h0m0 1h0m0 0h0m1-2h0m0 1h0m0 0h0m1 0h0m0 0h0m0 0h0m0 0h0m1 0h0m0-1h0m0 0h0m0 0h0m1 1h0m0-1h0m0 1h0m1 0h0m0 2h0m0-1h0m0 0h0m1 0h0m0-1h0m0 1h0m1 0h0m0-1h0m0 1h0m0 0h0m1 0h0m0 0h0m0 0h0m1 1h0m0-1h0m0 0h0m0 0h0m1-1h0m0 2h0m0-1h0m1 0h0m0 0h0m0 1h0m0 1h0m1-1h0m0 0h0m0-2h0m1 1h0m0-1h0m0-1h0m0 1h0m1 0h0m0 0h0m0-1h0m0 3h0m1-2h0m0 0h0m0-1h0m1 0h0m0 2h0m0-1h0m0-1h0m1 1h0m0-1h0m0 1h0m1 1h0m0 1h0m0-1h0m0-1h0m1 0h0m0 0h0m0 0h0m1 1h0m0 0h0m0 0h0m0 0h0m1 0h0m0 0h0m0 1h0m0-1h0m1-1h0m0 1h0m0 1h0m1-2h0m0 1h0m0 1h0m0-1h0m1 0h0m0-2h0m0 2h0m1-1h0m0 1h0m0 0h0m0 0h0m1 1h0m0-2h0m0 1h0m0 0h0m1-1h0m0 1h0m0 0h0m1-1h0m0 0h0m0 0h0m0 0h0m1 0h0m0 1h0m0-1h0m1-1h0m0 0h0m0 1h0m0-1h0m1 1h0m0 1h0m0-1h0m1 0h0m0 0h0m0 0h0m0 1h0m1-2h0m0 2h0m0-2h0m1 2h0m0 0h0m0 0h0m0 0h0m1-1h0m0 0h0m0 0h0m1 0h0m0 0h0m0 1h0m0 0h0m1 0h0m0-1h0m0 0h0m1 1h0m0-1h0m0 0h0m0-1h0m1 2h0m0-1h0m0 1h0m0-1h0m1 0h0m0 1h0m0 1h0m1 0h0m0-1h0m0-1h0m0 2h0m1-1h0m0 0h0m0 0h0m1-1h0m0 1h0m0-1h0m0 1h0m1-1h0m0 0h0m0 0h0m1-1h0m0 0h0m0 2h0m0 0h0m1 0h0m0 1h0m0-1h0m0-1h0m1 0h0m0 0h0m0 0h0m1 1h0m0-2h0m0 2h0m0-1h0m1 0h0m0 1h0m0 0h0m1 0h0m0 1h0m0-1h0m0 0h0m1 0h0m0-1h0m0 0h0m1 1h0m0-1h0m0 0h0m0 0h0m1 0h0m0 1h0m0-1h0m1 0h0m0 0h0m0-1h0m0 1h0m1 0h0m0 0h0m0 0h0m0 1h0m1-1h0m0 0h0m0 1h0m1-1h0m0 1h0m0-1h0m0 0h0m1 0h0m0 1h0m0 1h0m1-1h0m0 0h0m0 1h0m0-2h0m1 0h0m0 0h0m0 1h0m1 0h0m0 0h0m0 1h0m0-1h0m1-1h0m0 1h0m0-1h0m0 1h0m1-1h0m0 1h0m0-1h0m1 1h0m0 0h0m0 0h0m0-1h0m1 0h0m0 0h0m0 1h0m1-1h0m0 1h0m0-2h0m0 0h0m1 0h0m0 2h0m0 0h0m1-2h0m0 1h0m0 1h0m0-1h0m1 0h0m0 0h0m0 2h0m1 0h0m0-3h0m0 2h0m0-1h0m1 1h0m0 1h0m0 0h0m0 0h0m1-1h0m0 0h0m0 0h0m1-1h0m0 0h0m0 2h0m0-1h0m1-1h0m0 0h0m0 1h0m1 0h0m0-1h0m0 0h0m0 1h0m1 1h0m0 0h0m0-1h0m1 0h0m0 0h0m0 0h0m0 1h0m1-1h0m0-1h0m0 0h0m1 0h0m0 1h0m0 0h0m0-1h0m1 0h0m0 1h0m0-1h0m0 0h0m1 0h0m0 1h0m0-1h0m1 2h0m0-2h0m0 1h0m0-1h0m1 1h0m0-1h0m0 1h0m1 0h0m0 0h0m0-2h0m0 1h0m1 0h0m0-1h0m0-1h0m1 0h0m0 1h0m0 0h0m0 0h0m1 1h0m0 1h0m0-1h0m1 1h0m0 0h0m0-1h0m0 1h0m1 0h0m0 0h0m0-2h0m0 1h0m1 0h0m0 1h0m0-1h0m1-1h0m0 2h0m0-1h0m0 0h0m1 0h0m0 0h0m0 0h0m1 1h0m0 0h0m0 0h0m0 0h0m1-1h0m0 0h0m0 1h0m1 0h0m0-1h0m0 1h0m0 0h0m1 0h0m0 0h0m0 0h0m0-1h0m1 1h0m0 0h0m0 0h0m1 0h0m0-1h0m0 0h0m1-1h0m0 2h0m0 0h0m0 1h0m1-1h0m0 1h0m0 0h0m0-2h0m1 1h0m0 0h0m0-1h0m1 0h0m0 1h0m0-1h0m0 1h0m1-1h0m0 1h0m0 0h0m1-1h0m0 0h0m0 0h0m0 0h0m1-1h0m0 2h0m0-2h0m0 1h0m1 0h0m0 1h0m0-1h0m1 0h0m0 1h0m0-1h0m0 2h0m1-2h0m0 2h0m0-1h0m1 0h0m0-2h0m0 2h0m0-1h0m1 1h0m0 0h0m0 0h0m1-1h0m0 1h0m0 0h0m0 0h0m1 0h0m0-1h0m0 1h0m0 0h0m1 0h0m0 0h0m0 0h0m1 0h0m0-1h0m0 1h0m0 0h0m1-1h0m0 0h0m0 1h0m1 0h0m0-2h0m0 1h0m0 0h0m1 0h0m0 0h0m0-1h0m1 1h0m0 1h0m0-1h0m0 1h0m1 0h0m0-1h0m0 1h0m1 0h0m0 0h0m0 1h0m0 0h0m1 0h0m0-2h0m0 1h0m1-1h0m0 1h0m0-2h0m0 1h0m1 0h0m0 0h0m0 0h0m0 0h0m1 0h0m0 0h0m0-1h0m1 1h0m0 0h0m0 0h0m0 0h0m1 0h0m0 1h0m0 0h0m1-1h0m0 0h0m0 0h0m0 1h0m1-1h0m0-1h0m0 0h0m0 1h0m1 1h0m0 1h0m0 0h0m1-1h0m0-2h0m0 1h0m1 1h0m0-1h0m0 0h0m0 0h0m1-1h0m0 1h0m0 2h0m0-1h0m1 1h0m0-2h0m0 1h0m1 0h0m0 0h0m0-1h0m0 0h0m1 0h0m0 0h0m0 1h0m1-1h0m0 0h0m0 2h0m0-1h0m1 1h0m0-1h0m0-1h0m1 2h0m0-2h0m0 0h0m0 0h0m1 0h0m0 1h0m0 0h0m0 1h0m1-2h0m0 0h0m0 0h0m1 1h0m0-1h0m0 1h0m0-1h0m1 0h0m0 0h0m0 0h0m1 1h0m0-1h0m0 0h0m0 1h0m1-1h0m0 0h0m0 1h0m1-1h0m0 2h0m0-2h0m0 0h0m1 0h0m0 0h0m0 0h0m1 1h0m0 0h0m0-1h0m0 1h0m1 1h0m0-1h0m0 0h0m1-2h0m0 1h0m0 1h0m0-1h0m1 0h0m0 1h0m0-1h0m0 1h0m1-2h0m0 0h0m0 1h0m1 0h0m0 0h0m0 0h0m0 1h0m1 0h0m0 0h0m0-1h0m1 1h0m0 1h0m0 0h0m0-1h0m1-1h0m0 1h0m0 0h0m1 1h0m0 0h0m0-1h0m0-1h0m1 0h0m0 1h0m0-1h0m0 1h0m1 0h0m0-1h0m0-1h0m1 1h0m0 1h0m0 0h0m0-1h0m1-1h0m0 1h0m0 1h0m1 1h0m0-2h0m0 0h0m0 0h0m1 0h0m0 1h0m0 0h0m1 1h0m0-2h0m0 0h0m0 1h0m1 0h0m0-1h0m0 0h0m1-1h0m0 0h0m0 1h0m0 1h0m1-1h0m0 0h0m0 1h0m0 0h0m1 0h0m0 1h0m0-1h0m1-1h0m0 2h0m0-2h0m0 1h0m1-1h0m0 1h0m0-1h0m1 0h0m0 1h0m0-1h0m0 0h0m1 2h0m0-2h0m0 0h0m1 1h0m0-1h0m0 1h0m0 0h0m1-2h0m0 2h0m0-1h0m1-1h0m0 0h0m0 0h0m0 1h0m1 1h0m0 0h0m0 0h0m1 0h0m0-2h0m0 1h0m0 2h0m1-1h0m0 0h0m0 1h0m0-2h0m1 1h0m0 0h0m0 1h0m1-2h0m0 1h0m0-1h0m0 1h0m1-2h0m0 1h0m0 0h0m1 0h0m0 0h0m0 0h0m0 1h0m1-1h0m0 1h0m0-2h0m1 1h0m0 0h0m0 0h0m0 0h0m1 0h0m0-1h0m0 1h0m0 0h0m1 1h0m0 0h0m0 0h0m1-1h0m0 0h0m0-1h0m0 1h0m1 0h0m0-1h0m0 0h0m1 0h0m0 1h0m0 1h0m0 0h0m1 0h0m0 0h0m0-2h0m0 0h0m1 1h0m0 1h0m0-1h0m1 0h0m0 0h0m0-1h0m0 1h0m1 0h0m0 0h0m0-1h0m1 1h0m0 0h0m0 1h0m0 0h0m1-1h0m0 0h0m0 0h0m1 1h0m0-1h0m0 1h0m0-1h0m1 0h0m0 1h0m0-1h0m1 0h0m0 0h0m0 1h0m0-2h0m1 0h0m0 1h0m0 0h0m0 0h0m1 0h0m0 1h0m0-2h0m1 0h0m0 0h0m0 1h0m0 0h0m1 0h0m0 2h0m0 0h0m1 0h0m0-1h0m0-1h0m0 1h0m1 0h0m0 0h0m0-1h0m1 1h0m0 0h0m0-1h0m0 1h0m1 0h0m0 0h0m0 0h0m1 1h0m0-1h0m0 0h0m0 1h0m1-2h0m0 0h0m0 1h0m1-1h0m0 0h0m0 1h0m0-1h0m1 0h0m0 2h0m0-2h0m0 1h0m1-1h0m0 0h0m0-1h0m1 0h0m0 1h0m0 0h0m0-1h0m1 2h0m0-1h0m0 1h0m1-1h0m0 1h0m0-1h0m0 1h0m1-1h0m0 1h0m0-1h0m1 0h0m0 0h0m0 1h0m0-1h0m1 0h0m0 1h0m0 0h0m0-1h0m1-1h0m0 2h0m0 0h0m1 0h0m0-1h0m0-1h0m0 2h0m1 0h0m0-1h0m0 0h0m1 0h0m0 1h0m0-1h0m0-1h0m1 3h0m0-2h0m0 1h0m1-1h0m0 1h0m0 0h0m0-1h0m1 1h0m0-1h0m0 0h0m0 0h0m1 0h0m0 0h0m0 2h0m1 0h0m0 0h0m0-2h0m0 2h0m1-1h0m0-1h0m0 0h0m1 0h0m0 1h0m0-1h0m0 1h0m1 0h0m0 0h0m0 1h0m1-1h0m0-1h0m0 1h0m0-1h0m1 1h0m0 0h0m0-1h0m0 0h0m1 2h0m0-2h0m0 1h0m1 1h0m0-3h0m0 2h0m0-2h0m1 3h0m0-1h0m0-1h0m1 0h0m0 0h0m0 0h0m0 1h0m1 0h0m0-1h0m0 1h0m1 0h0m0 0h0m0 1h0m0-2h0m1 1h0m0 0h0m0-2h0m1 2h0m0-2h0m0 0h0m0 1h0m1 1h0m0 0h0m0 0h0m1 1h0m0 1h0m0-2h0m1 1h0m0 0h0m0-1h0m1 1h0m0 0h0m0 0h0m0 1h0m1-1h0m0 0h0m0-1h0m1 1h0m0 0h0m0-1h0m1 1h0m0 0h0m0-1h0m0 0h0m1 1h0m0-1h0m0 0h0m1 0h0m0 1h0m0 0h0m1 0h0m0-1h0m0 1h0m1 0h0m0 0h0m0 1h0m0-2h0m1 1h0m0 0h0m0-1h0m1 0h0m0 0h0m0 1h0m1 1h0m0 0h0m0 0h0m1 0h0m0-1h0m0 1h0m1-1h0m0-1h0m0 0h0m0 0h0m1 0h0m0-1h0m0 1h0m1 1h0m0-1h0m0 2h0m1 0h0m0-2h0m0 0h0m0 1h0m1 0h0m0 0h0m0 0h0m1 1h0m0-1h0m0 1h0m1-2h0m0 0h0m0 0h0m1 1h0m0 0h0m0 0h0m1 0h0m0 0h0m0 0h0m0 1h0m1-1h0m0-1h0m0 2h0m1 0h0m0-1h0m0 1h0m1-1h0m0 1h0m0 0h0m0 0h0m1 0h0m0-1h0m0 1h0m1-1h0m0-1h0m0 1h0m1 0h0m0 1h0m0-1h0m1 1h0m0 0h0m0-1h0m1 1h0m0-1h0m0 1h0m1-2h0m0 1h0m0 0h0m0 0h0m1 0h0m0 0h0m0-1h0m1 1h0m0 0h0m0 0h0m1 0h0m0 1h0m0-1h0m0 0h0m1-1h0m0 0h0m0 0h0m1 1h0m0 0h0m0 1h0m1 0h0m0-1h0m0 0h0m1-1h0m0 1h0m0 0h0m1-1h0m0 2h0m0 0h0m0-2h0m1 0h0m0 0h0m0 0h0m1 1h0m0 0h0m0-1h0m1 0h0m0 1h0m0 0h0m0-1h0m1 0h0m0 1h0m1 0h0m0 1h0m0-1h0m0 1h0m1-1h0m0 1h0m0 0h0m1-1h0m0-1h0m6 1h0m0 0h0m0 1h0m1-1h0m0 0h0m0-1h0m1 1h0m0 1h0m0-1h0m0 1h0m1 0h0m0 0h0m1 1h0m0-2h0m0 0h0m0 0h0m1 0h0m0 1h0m0 0h0m1 0h0m0 1h0m0 0h0m1-2h0m0 1h0m0-1h0m0 0h0m1 1h0m0-1h0m0 2h0m1-2h0m0 2h0m0-2h0m1 0h0m0 0h0m0 1h0m1 0h0m0 1h0m0-1h0m0 0h0m1 0h0m0-1h0m0 0h0m1 0h0m0 1h0m0-1h0m1 2h0m0-1h0m0-1h0m1 0h0m0 1h0m0 0h0m1 0h0m0 0h0m0 0h0m0-1h0m1 1h0m0 0h0m0-1h0m1 1h0m0 0h0m0-1h0m1-1h0m0 2h0m0 0h0m0 0h0m1-1h0m0 0h0m0 0h0m1 1h0m0-1h0m0 0h0m1 0h0m0 0h0m0 0h0m1 1h0m0 0h0m0-1h0m1 0h0m0 1h0m0 0h0m1 0h0m0 0h0m0 0h0m0 0h0m1 0h0m0-1h0m0 1h0m1-1h0m0 1h0m0 0h0m1 0h0m0 0h0m0-1h0m1 0h0m0 0h0m0 1h0m1-1h0m0 0h0m0 0h0m0 0h0m1 1h0m0-1h0m0 1h0m1 1h0m0-1h0m0 0h0m1 0h0m0-1h0m0 1h0m0 0h0" stroke="#000" stroke-width="4.0" stroke-linecap="round" fill="none"/>
<path transform="translate(.5 .5)" d="M184 70h0m972-3h0m91 0h0m5 0h0m11 0h0m13 0h0m12 0h0m8 0h0m6 0h0" stroke="#ffa500" stroke-width="4.0" stroke-linecap="round" fill="none"/>
<path transform="translate(.5 .5)" d="M1264 104h0m-1 15h0m1 2h0m-1 26h0m1 150h0" stroke="#ffa500" stroke-width="4.0" stroke-linecap="round" fill="none"/>
<path transform="translate(.5 .5)" d="M576 98h0" stroke="#f00" stroke-width="4.0" stroke-linecap="round" fill="none"/>
<line x1="105.5" x2="1361.5" y1="66.0" y2="66.0" stroke="#008000" stroke-width="2.08"/>
<line x1="162.0" x2="162.0" y1="321.5" y2="35.5" stroke="#800080" stroke-width="2.08" stroke-dasharray="2.08 3.44"/>
<line x1="1216.0" x2="1216.0" y1="321.5" y2="35.5" stroke="#800080" stroke-width="2.08" stroke-dasharray="2.08 3.44"/>
<line x1="1220.0" x2="1220.0" y1="321.5" y2="35.5" stroke="#800080" stroke-width="2.08" stroke-dasharray="2.08 3.44"/>
<line x1="1291.0" x2="1291.0" y1="321.5" y2="35.5" stroke="#800080" stroke-width="2.08" stroke-dasharray="2.08 3.44"/>
<line x1="1303.0" x2="1303.0" y1="321.5" y2="35.5" stroke="#800080" stroke-width="2.08" stroke-dasharray="2.08 3.44"/>
</g>
<rect x="105.5" y="35.5" width="1380.0" height="286.0" fill="none" stroke="#000" stroke-width="1.06"/>
<line x1="162.5" x2="162.5" y1="321.5" y2="326.9" stroke="#000" stroke-width="1"/>
<text x="162.4" y="341.6" text-anchor="middle">0</text>
<line x1="431.5" x2="431.5" y1="321.5" y2="326.9" stroke="#000" stroke-width="1"/>
<text x="430.9" y="341.6" text-anchor="middle">2000</text>
<line x1="699.5" x2="699.5" y1="321.5" y2="326.9" stroke="#000" stroke-width="1"/>
<text x="699.4" y="341.6" text-anchor="middle">4000</text>
<line x1="968.5" x2="968.5" y1="321.5" y2="326.9" stroke="#000" stroke-width="1"/>
<text x="967.8" y="341.6" text-anchor="middle">6000</text>
<line x1="1236.5" x2="1236.5" y1="321.5" y2="326.9" stroke="#000" stroke-width="1"/>
<text x="1236.3" y="341.6" text-anchor="middle">8000</text>
<line x1="105.5" x2="100.1" y1="269.5" y2="269.5" stroke="#000" stroke-width="1"/>
<text x="95.8" y="274.8" text-anchor="end">5</text>
<line x1="105.5" x2="100.1" y1="211.5" y2="211.5" stroke="#000" stroke-width="1"/>
<text x="95.8" y="216.1" text-anchor="end">6</text>
<line x1="105.5" x2="100.1" y1="152.5" y2="152.5" stroke="#000" stroke-width="1"/>
<text x="95.8" y="157.5" text-anchor="end">7</text>
<line x1="105.5" x2="100.1" y1="93.5" y2="93.5" stroke="#000" stroke-width="1"/>
<text x="95.8" y="98.8" text-anchor="end">8</text>
<text x="795.5" y="27.2" text-anchor="middle" font-size="16.67px">AGASC ID 402132776.0</text>
<text x="668.5" y="312.0">10273</text>
<text x="1196" y="292.0">56791</text>
<text x="1233" y="272.0">54902</text>
<text x="1275" y="312.0">54883</text>
<rect x="1361.3" y="42.5" width="117.3" height="26.9" rx="2.8" ry="2.8" fill="#fff" fill-opacity="0.8" stroke="#ccc" stroke-opacity="0.8" stroke-width="1.39"/>
<line x1="1367.1" x2="1394.9" y1="53.9" y2="53.9" stroke="#008000" stroke-width="2.08" stroke-linecap="square"/>
<text x="1406.9" y="58.8">mag<tspan font-style="italic" font-size="10.25px" x="1436.6" dy="2.2">AGASC</tspan></text>
<rect x="1348.5" y="247.6" width="130.1" height="66.8" rx="2.8" ry="2.8" fill="#fff" fill-opacity="0.8" stroke="#ccc" stroke-opacity="0.8" stroke-width="1.39"/>
<path transform="translate(.5 .5)" d="M1367 260h0" stroke="#f00" stroke-width="4.0" stroke-linecap="round" fill="none"/>
<text x="1393.0" y="263.9">not OK</text>
<path transform="translate(.5 .5)" d="M1367 281h0" stroke="#ffa500" stroke-width="4.0" stroke-linecap="round" fill="none"/>
<text x="1393.0" y="284.9">Highlighted</text>
<path transform="translate(.5 .5)" d="M1367 302h0" stroke="#000" stroke-width="4.0" stroke-linecap="round" fill="none"/>
<text x="1393.0" y="305.9">OK</text>
<g clip-path="url(#c2)">
<path transform="translate(.5 .5)" d="M162 510h0m0-9h0m0 13h0m0 1h0m0 11h0m1-7h0m0 24h0m0-33h0m0-9h0m0 22h0m0-18h0m0-11h0m1 14h0m0 20h0m0-5h0m0-17h0m0 17h0m0-11h0m0 24h0m1 1h0m0-31h0m0-7h0m0-9h0m0 11h0m0 9h0m0-11h0m1 6h0m0 5h0m0-5h0m0-6h0m0 13h0m0-13h0m0-7h0m1 14h0m0-3h0m0 7h0m0-2h0m0 4h0m0 3h0m0-1h0m1 1h0m0-12h0m0-8h0m0 30h0m0-20h0m0-11h0m0-4h0m0-6h0m1-11h0m0-1h0m1 33h0m0-22h0m0 16h0m0-5h0m0-13h0m0 33h0m1 0h0m0-6h0m0 4h0m0-22h0m0 4h0m0-19h0m0-2h0m1 41h0m0-33h0m0 34h0m0-9h0m0-5h0m0-24h0m0 9h0m1 2h0m0 17h0m0 7h0m0-24h0m0-4h0m0-11h0m1 2h0m0 6h0m0 3h0m0 0h0m0-9h0m0 8h0m1 18h0m0 2h0m0-11h0m0-2h0m0 25h0m0-14h0m1-4h0m0-7h0m0-4h0m0 2h0m0 20h0m0 22h0m0-20h0m1 31h0m0-7h0m0 11h0m0 3h0m0-7h0m0 9h0m0-11h0m0 8h0m1-13h0m0-2h0m0 4h0m0-10h0m0 6h0m0-22h0m1 9h0m0-2h0m0-5h0m0-22h0m0 15h0m0 3h0m0-18h0m0 9h0m1 15h0m0-26h0m0 11h0m0-4h0m0-5h0m0 16h0m0 0h0m1 0h0m0 19h0m0 11h0m0-21h0m0 24h0m0 13h0m0 0h0m1-11h0m0 9h0m0-3h0m0 7h0m0-7h0m0-10h0m0 17h0m1 11h0m0-2h0m0-7h0m0 5h0m0-27h0m0 16h0m0-9h0m1-2h0m0-11h0m0-2h0m0 22h0m0-22h0m0 10h0m0-6h0m1 0h0m0-9h0m0-6h0m0-7h0m0 11h0m0-16h0m0 7h0m1-7h0m0 16h0m0-11h0m0 13h0m0-4h0m0 6h0m0-15h0m0 33h0m1-35h0m0 6h0m0-15h0m0-5h0m0 2h0m0 7h0m0 22h0m1-2h0m0-7h0m0-13h0m0 9h0m0-18h0m0 23h0m0 6h0m1-13h0m0 7h0m0 2h0m0 13h0m0-13h0m0-2h0m0 4h0m1 24h0m0-26h0m0-5h0m0 14h0m0 19h0m0-15h0m0-20h0m1 0h0m0 0h0m0 27h0m0-20h0m0-11h0m0-7h0m0-16h0m0 7h0m1-17h0m0 13h0m0 6h0m0 3h0m1-7h0m0 2h0m0-6h0m0-7h0m0 11h0m1 9h0m0 9h0m0 8h0m0-2h0m0-29h0m0 16h0m0-24h0m1 17h0m0 9h0m0-7h0m0 18h0m0-9h0m0 31h0m0-20h0m0 20h0m1-2h0m0 0h0m0 24h0m0 9h0m0-4h0m0-24h0m0 6h0m1 11h0m0-6h0m0-1h0m0 7h0m0 9h0m0-29h0m0-6h0m1-5h0m0-9h0m0 12h0m0-16h0m0 9h0m0 13h0m0-9h0m1 3h0m0-3h0m0-9h0m0-8h0m0-5h0m0-6h0m0 17h0m1-2h0m0 22h0m0-11h0m0 9h0m0-18h0m0 24h0m0-15h0m0 7h0m1 8h0m0-28h0m0-7h0m0 24h0m0-10h0m0 24h0m1 8h0m0-21h0m0-1h0m0-15h0m0 20h0m0-4h0m0 0h0m0-18h0m1 2h0m0 27h0m0-16h0m0 22h0m0-22h0m0 13h0m0-15h0m1-16h0m0 5h0m0 26h0m0-17h0m0-20h0m0 28h0m1-8h0m0-5h0m0 7h0m0 7h0m0 6h0m0-29h0m0 3h0m0 24h0m1-5h0m0-26h0m0 11h0m0 13h0m0-2h0m0 13h0m0-19h0m1 8h0m0 13h0m0 5h0m0-22h0m0 20h0m0 0h0m0-40h0m1 26h0m0-4h0m0 4h0m0 12h0m0-20h0m0-11h0m0 22h0m1 8h0m0 14h0m0-7h0m0 0h0m0-2h0m0 2h0m0-7h0m0-4h0m1-20h0m0 29h0m0-2h0m0-25h0m0 20h0m0-35h0m0 15h0m1 23h0m0 4h0m0-15h0m0-21h0m0 7h0m0 11h0m0 11h0m1-4h0m0-11h0m0 11h0m0-5h0m0 1h0m0-29h0m0 2h0m1 2h0m0 7h0m0-14h0m0 7h0m0-11h0m0-2h0m0 4h0m1 7h0m0 2h0m0 20h0m0 0h0m0-16h0m0 20h0m0-6h0m1 4h0m0 2h0m0-8h0m0 13h0m0-2h0m0 20h0m0-12h0m1-15h0m0 31h0m0-13h0m0-5h0m0-8h0m0 26h0m0-26h0m1 17h0m0 15h0m0 5h0m0-20h0m0-4h0m0 13h0m0-5h0m1 9h0m0-8h0m0 6h0m0-20h0m0-28h0m0 37h0m0 0h0m1 11h0m0-15h0m0 6h0m0 7h0m0-5h0m0-6h0m0-38h0m0 7h0m1 18h0m0-9h0m0-5h0m0 11h0m0 5h0m0 15h0m0-2h0m1 4h0m0-8h0m0 8h0m0-13h0m0 13h0m0 1h0m0-5h0m1-37h0m0 41h0m0-26h0m0-4h0m0 11h0m0-13h0m0 6h0m1-13h0m0 0h0m0-13h0m0 22h0m0 17h0m0-6h0m0-14h0m1 7h0m0-15h0m0 13h0m0 24h0m0 4h0m0-30h0m0 26h0m1-15h0m0-11h0m0 8h0m0-2h0m0-18h0m0 16h0m0-2h0m1 22h0m0-11h0m0 13h0m0-20h0m0 16h0m0 9h0m0-18h0m1-7h0m0 3h0m0-21h0m0 1h0m0 4h0m0 11h0m0 27h0m1-31h0m0 31h0m0-1h0m0 5h0m0-7h0m0-17h0m0-16h0m0-6h0m1 0h0m0 0h0m0 31h0m0-9h0m0 19h0m0 7h0m1-17h0m0-1h0m0-19h0m0 6h0m0-26h0m0 35h0m0-7h0m1 3h0m0 4h0m0-4h0m0-13h0m0 28h0m0-4h0m0-3h0m0-26h0m1 7h0m0-18h0m0 9h0m0 0h0m0 6h0m0-13h0m0 5h0m1 24h0m0-15h0m0-1h0m0 14h0m0-14h0m0 18h0m0-7h0m1 12h0m0-9h0m0 2h0m0 6h0m0 14h0m0 2h0m0-9h0m1 11h0m0 0h0m0-2h0m0-5h0m0-11h0m0 11h0m0-11h0m1-17h0m0 4h0m0-6h0m0 6h0m0 5h0m0-27h0m0 5h0m1 9h0m0 15h0m0-25h0m0 27h0m0-6h0m0-11h0m0 13h0m0-2h0m1-3h0m0 3h0m0-9h0m0 6h0m0 0h0m0 5h0m0 2h0m1 4h0m0-4h0m0-20h0m0 16h0m0-11h0m0 21h0m0-8h0m1-25h0m0-9h0m0 40h0m0-13h0m0-6h0m0 21h0m0 0h0m1-11h0m0-31h0m0 14h0m0-3h0m0-4h0m0-24h0m0 0h0m1 9h0m0-3h0m0 5h0m1-7h0m0 0h0m0 5h0m0-3h0m0-2h0m0 9h0m0 9h0m0-27h0m1 29h0m0 2h0m0-4h0m0 24h0m0-18h0m0 7h0m1-13h0m0 18h0m0 24h0m0-4h0m0-3h0m0-20h0m0-4h0m1 9h0m0-9h0m0 29h0m0 2h0m0-22h0m0 13h0m0 11h0m0-17h0m1 13h0m0-25h0m0 20h0m0-2h0m0-4h0m0-11h0m0 2h0m1 6h0m0-22h0m0 3h0m0-12h0m0 11h0m0 21h0m0 6h0m1-9h0m0-8h0m0 22h0m0-29h0m0 46h0m0-24h0m0-9h0m1 15h0m0 18h0m0-15h0m0 8h0m0-22h0m0 7h0m0 4h0m1-11h0m0-8h0m0 22h0m0 4h0m0-7h0m0-19h0m0 35h0m1 11h0m0-29h0m0-6h0m0-7h0m0-2h0m0 7h0m0 6h0m0-4h0m1-14h0m0 1h0m0-7h0m0 9h0m0 8h0m0-13h0m1 14h0m0 6h0m0 11h0m0-2h0m0-2h0m0-3h0m0-13h0m1 25h0m0-1h0m0-22h0m0-13h0m0 9h0m0-11h0m0 20h0m0-9h0m1-9h0m0 3h0m0-10h0m0-2h0m0-8h0m0 6h0m0 13h0m1 7h0m0-6h0m0-5h0m0-13h0m0 11h0m0 6h0m0 1h0m1-21h0m0 3h0m0 17h0m0-15h0m0 35h0m0 0h0m0-31h0m1 23h0m0-3h0m0-6h0m0 19h0m0 5h0m0 7h0m0-31h0m1 15h0m0-15h0m0-12h0m0 21h0m0-1h0m0 12h0m0-11h0m1 6h0m0 13h0m0-30h0m0-9h0m0 6h0m0 0h0m0 9h0m1 4h0m0-11h0m0-20h0m0 9h0m0 14h0m0-12h0m0-24h0m1-6h0m0 4h0m0 2h0m0 7h0m0 13h0m0-9h0m0 13h0m0-4h0m1-9h0m0 34h0m0-25h0m0-6h0m0 17h0m0-15h0m0 6h0m1 16h0m0 17h0m0-10h0m0-7h0m0 13h0m0 5h0m0-16h0m1-7h0m0 23h0m0-25h0m0 18h0m0 0h0m0-5h0m0 20h0m1-4h0m0-18h0m0 13h0m0-10h0m0 17h0m0-18h0m0 23h0m1-3h0m0-46h0m0 13h0m0-4h0m0 11h0m0 17h0m0 9h0m1-15h0m0-22h0m0 15h0m0-6h0m0-9h0m0 9h0m0 0h0m1 6h0m0 0h0m0 13h0m0 9h0m0-19h0m0-3h0m0-2h0m1 4h0m0-10h0m0-7h0m0 20h0m0 2h0m0 2h0m0 20h0m1-31h0m0 2h0m0 9h0m0 20h0m0-11h0m0 20h0m0 0h0m1-18h0m0 13h0m0 3h0m0-29h0m0 28h0m0-17h0m0 15h0m0-2h0m1-13h0m0-13h0m0-7h0m0 2h0m0 13h0m0-21h0m0 0h0m1 13h0m0-27h0m0-9h0m0-17h0m0 22h0m0-7h0m0-2h0m1 22h0m0-15h0m0-5h0m0-9h0m0 25h0m0 17h0m0-9h0m1-24h0m0-2h0m0-2h0m0-3h0m0-4h0m0 5h0m0 6h0m0-4h0m1 11h0m0-3h0m0 1h0m0 0h0m0 10h0m0 5h0m0 4h0m1-4h0m0 4h0m0-11h0m0 36h0m0-22h0m0 19h0m0-2h0m1 7h0m0-7h0m0-24h0m0 11h0m0-2h0m0 2h0m0 7h0m1-23h0m0 23h0m0-22h0m0-14h0m0 14h0m0-11h0m0 15h0m1 13h0m0-11h0m0 38h0m0-18h0m0-2h0m0 4h0m0-8h0m1 32h0m0-2h0m0-2h0m0-28h0m0 26h0m0 11h0m0-24h0m1 15h0m0-7h0m0 7h0m0-2h0m0-7h0m0-8h0m0-9h0m1 8h0m0-8h0m0-3h0m0 7h0m0-17h0m0-3h0m0 3h0m1-3h0m0 13h0m0-20h0m0 12h0m0-12h0m0-6h0m0 4h0m1 14h0m0 8h0m0-19h0m0-1h0m0 31h0m0 7h0m0-35h0m1 28h0m0 0h0m0-2h0m0 3h0m0 13h0m0-9h0m0-2h0m1-9h0m0-2h0m0 0h0m0-9h0m0-5h0m0-9h0m0-2h0m0 23h0m1 0h0m0-3h0m0-4h0m0 11h0m0-27h0m0 18h0m0-7h0m1-8h0m0 2h0m0 9h0m0 0h0m0-20h0m0 20h0m0 0h0m1-14h0m0 42h0m0-26h0m0 13h0m0 5h0m0-11h0m0 2h0m1 6h0m0 9h0m0-20h0m0 22h0m0 9h0m0-4h0m0-18h0m1-2h0m0 2h0m0-9h0m0-17h0m0 13h0m0 29h0m0 10h0m0-24h0m1-4h0m0 26h0m0-6h0m0-11h0m0 11h0m0-7h0m1-20h0m0 9h0m0-15h0m0 8h0m0 1h0m0 0h0m0-23h0m1 16h0m0 7h0m0 0h0m0 2h0m0-18h0m0 20h0m0-7h0m1-6h0m0-23h0m0-6h0m0-11h0m0 6h0m0 5h0m0-15h0m1 17h0m0 2h0m0-20h0m0 3h0m0 11h0m0 0h0m0-2h0m0 4h0m1 20h0m0-16h0m0 33h0m0 3h0m0-3h0m0 1h0m0-7h0m1-2h0m0-2h0m0-14h0m0 7h0m0 2h0m0 0h0m0 16h0m1-25h0m0 9h0m0-18h0m0 0h0m0 9h0m0 2h0m0-13h0m1 16h0m0 6h0m0-7h0m0 7h0m0 16h0m0-16h0m0 2h0m1 7h0m0 22h0m0-11h0m0 2h0m0 7h0m0-4h0m0-1h0m1 12h0m0-22h0m0-5h0m0-18h0m0-2h0m0 16h0m0-22h0m1 19h0m0-17h0m0 4h0m0 22h0m0 2h0m0-4h0m0 4h0m0-4h0m1-11h0m0 11h0m0-4h0m0-5h0m0 5h0m0 15h0m0-7h0m1-8h0m0 30h0m0-26h0m0 15h0m0-24h0m0 9h0m0 29h0m1-2h0m0-16h0m0-11h0m0 4h0m0-4h0m0-6h0m0 15h0m1-13h0m0 19h0m0-21h0m0-3h0m0-20h0m0-8h0m0 4h0m1-2h0m0-2h0m0 35h0m0-24h0m0 17h0m0-33h0m0 16h0m1-20h0m0 20h0m0 0h0m0-7h0m0 2h0m1 5h0m0-5h0m1-17h0m0 0h0m0 15h0m1 7h0m0 10h0m0-4h0m0-17h0m0 11h0m0-12h0m0-8h0m0-2h0m1 26h0m0 16h0m0-1h0m0-8h0m0-18h0m0-4h0m0 33h0m1-12h0m0-6h0m0 2h0m0-9h0m0 0h0m0 20h0m0-26h0m1-9h0m0 20h0m0-5h0m0 23h0m0-7h0m0-3h0m0-4h0m1 9h0m0 13h0m0 5h0m0-7h0m0-11h0m0 2h0m0 18h0m1 0h0m0-22h0m0-3h0m0 5h0m0 18h0m0-13h0m0 10h0m0-2h0m1 9h0m0-2h0m0-24h0m0-3h0m0-2h0m0 18h0m0 6h0m1-2h0m0 9h0m0-4h0m0-25h0m0 16h0m0-18h0m1 22h0m0-13h0m0 20h0m0-36h0m0 7h0m0-2h0m0-4h0m0 8h0m1-6h0m0 13h0m0 16h0m0-18h0m0 37h0m0 3h0m0-23h0m1-15h0m0 11h0m0-2h0m0 15h0m0-11h0m0 9h0m0-9h0m1 18h0m0-13h0m0 15h0m0-4h0m0 11h0m0-22h0m0 4h0m1-17h0m0 22h0m0-23h0m0 27h0m0-2h0m0-33h0m0 11h0m1 6h0m0 0h0m0-6h0m0-31h0m0 26h0m0 0h0m0-18h0m1 7h0m0-9h0m0 20h0m0-28h0m0 17h0m0-17h0m0 28h0m0-18h0m1 3h0m0-18h0m0 29h0m0 6h0m0-4h0m0-9h0m1-15h0m0 20h0m0-25h0m0-6h0m0 8h0m0 22h0m0-30h0m0 9h0m1 4h0m0 26h0m0-17h0m0 26h0m0-2h0m0-7h0m0-8h0m1-16h0m0 9h0m0-2h0m0 6h0m0 18h0m0-13h0m0 2h0m1 4h0m0-11h0m0 27h0m0-5h0m0 0h0m0-11h0m0 11h0m1-19h0m0 8h0m0 1h0m0 17h0m0-2h0m0-16h0m0 1h0m1 2h0m0 4h0m0-4h0m0-7h0m0 29h0m0-3h0m0 7h0m1-6h0m0 6h0m0-4h0m0-14h0m0 18h0m0-7h0m0-21h0m1 15h0m0-33h0m0 6h0m0 22h0m0-13h0m0 9h0m0 16h0m1 6h0m0-9h0m0-15h0m0-7h0m0 33h0m0-11h0m0 7h0m0-16h0m1-24h0m0 4h0m0 1h0m0 31h0m0-29h0m0 44h0m0-37h0m1 26h0m0-2h0m0-22h0m0 8h0m0 16h0m0 17h0m1-32h0m0-3h0m0 0h0m0-9h0m0 9h0m0-11h0m0 29h0m0-5h0m1 0h0m0 0h0m0-10h0m0 6h0m0-22h0m0 18h0m0-36h0m1-2h0m0 11h0m0 2h0m0-15h0m0-2h0m0 17h0m0-2h0m1 5h0m0 8h0m0-15h0m0 22h0m0-7h0m0-6h0m0-7h0m1 9h0m0-11h0m0 0h0m0 6h0m0 1h0m0 9h0m0-3h0m1 5h0m0 0h0m0-5h0m0 0h0m0 5h0m0-18h0m0-2h0m0 13h0m1-7h0m0 3h0m0-3h0m0-2h0m0 24h0m0-2h0m1 25h0m0-5h0m0 4h0m0-11h0m0-10h0m0 11h0m0 8h0m1-2h0m0-20h0m0 7h0m0 15h0m0-17h0m0 20h0m0 0h0m0-1h0m1-17h0m0-18h0m0 5h0m0 0h0m0-3h0m0-4h0m0 24h0m1-15h0m0 20h0m0 4h0m0 15h0m0-8h0m0-16h0m0-2h0m1-7h0m0 20h0m0-4h0m0-2h0m0 11h0m0-31h0m0 28h0m1-11h0m0-10h0m0 28h0m0-20h0m0 2h0m0 1h0m0 13h0m0-3h0m1-33h0m0 12h0m0-9h0m0-5h0m0 27h0m0-7h0m1-2h0m0-15h0m0 19h0m0 2h0m0-15h0m0 18h0m0-24h0m0 4h0m1 7h0m0 10h0m0-15h0m0 11h0m0-29h0m0 20h0m1-4h0m0 6h0m0 18h0m0-4h0m0 4h0m0 2h0m0-8h0m1-9h0m0-23h0m0 10h0m0 13h0m0-7h0m0 26h0m0-28h0m0 15h0m1-8h0m0-11h0m0 13h0m0-3h0m0-11h0m0-19h0m0 8h0m1 2h0m0-10h0m0 4h0m0 40h0m0-13h0m0-7h0m0 6h0m1-26h0m0 38h0m0-25h0m0 0h0m0-4h0m0 29h0m0-11h0m1-3h0m0-17h0m0-3h0m0 12h0m0 19h0m0-37h0m0 20h0m0-23h0m1 5h0m0 0h0m0 4h0m0 7h0m0 13h0m0 14h0m1-9h0m0 11h0m0-24h0m0 2h0m0-5h0m0 13h0m0-8h0m1 15h0m0 11h0m0-11h0m0-22h0m0 20h0m0 4h0m0 14h0m0-18h0m1-2h0m0 4h0m0-2h0m0 9h0m0-2h0m0-9h0m0 6h0m1-37h0m0 35h0m0-7h0m0-13h0m0 11h0m0 18h0m0-26h0m1 21h0m0-6h0m0-4h0m0 13h0m0-9h0m0-7h0m0-9h0m1 12h0m0 4h0m0-7h0m0 0h0m0-2h0m0-2h0m0-5h0m1-11h0m0 16h0m0 9h0m0-2h0m0-1h0m0 0h0m0-4h0m1 9h0m0 15h0m0-8h0m0 2h0m0-13h0m0-5h0m0 16h0m1-34h0m0 29h0m0-2h0m0 7h0m0-14h0m0 2h0m0 9h0m1-15h0m0 2h0m0-13h0m0-2h0m0 26h0m0 5h0m0-9h0m0 15h0m1-11h0m0-11h0m0 7h0m0-5h0m0 13h0m0-33h0m0 11h0m1 9h0m0-28h0m0 8h0m0 36h0m0-34h0m0 36h0m0-2h0m1 0h0m0-27h0m0 16h0m0-16h0m0-13h0m0 18h0m0 20h0m1-25h0m0 18h0m0 0h0m0-22h0m0-2h0m0 4h0m0 5h0m1-16h0m0-9h0m0-4h0m0 11h0m0-13h0m1-12h0m2 20h0m0 27h0m0-20h0m0-15h0m0 30h0m0-33h0m1 16h0m0-3h0m0 18h0m0 2h0m0 14h0m0 13h0m0 2h0m1 2h0m0 5h0m0-3h0m0 12h0m0-18h0m0 6h0m0-6h0m0-18h0m1 18h0m0 11h0m0 2h0m0-6h0m0-25h0m0 2h0m0 1h0m1-12h0m0 1h0m0 11h0m0-3h0m0 7h0m0-13h0m0 8h0m1 7h0m0 4h0m0-13h0m0 11h0m0-20h0m0-17h0m0 44h0m1 6h0m0-28h0m0-5h0m0 3h0m0-20h0m0 4h0m0 27h0m1-20h0m0 20h0m0-13h0m0-14h0m0 22h0m0-22h0m0 4h0m1-8h0m0 35h0m0-29h0m0 27h0m0-9h0m0-9h0m0-4h0m0 13h0m1 26h0m0-8h0m0-24h0m0 13h0m0-11h0m0-7h0m1-4h0m0-11h0m0 20h0m0 15h0m0-20h0m0-4h0m0 31h0m0 8h0m1-9h0m0 14h0m0-5h0m0-19h0m0 13h0m0 11h0m0-9h0m1-4h0m0 15h0m0-16h0m0-22h0m0 16h0m0 11h0m0-26h0m1-1h0m0 18h0m0 29h0m0-20h0m0 4h0m0-20h0m0 16h0m1 7h0m0 4h0m0 6h0m0-28h0m0 17h0m0-15h0m0-27h0m1 1h0m0 4h0m0 7h0m0-7h0m0 29h0m0-24h0m0-9h0m1 0h0m0-3h0m0 18h0m0 5h0m0-32h0m0 9h0m0 11h0m1 7h0m0-9h0m0 0h0m0 7h0m0 2h0m0-9h0m0 11h0m1 2h0m0-2h0m0 7h0m0-5h0m0-31h0m0 16h0m0 5h0m0 10h0m1-30h0m0 8h0m0 12h0m0 8h0m0 13h0m0-21h0m0 19h0m1 13h0m0-10h0m0 0h0m0-3h0m0 0h0m0-9h0m0 5h0m1-13h0m0-3h0m0 16h0m0-9h0m0 24h0m0 0h0m0 2h0m1 0h0m0-10h0m0 10h0m0-28h0m0 9h0m0-2h0m0-5h0m1-7h0m0-11h0m0 11h0m0-11h0m0-2h0m0 25h0m0 6h0m1 16h0m0-9h0m0-2h0m0-29h0m0-5h0m0 36h0m0-2h0m1 6h0m0-9h0m0-19h0m0 2h0m0 8h0m0 0h0m0-17h0m0-3h0m1 3h0m0 18h0m0-29h0m0-7h0m0 36h0m0-27h0m1 11h0m0 0h0m0 11h0m0-11h0m0 15h0m0 1h0m0 13h0m0-20h0m1 6h0m0 11h0m0-30h0m0 6h0m0-7h0m0 3h0m0 4h0m1 35h0m0-22h0m0 3h0m0 11h0m0-14h0m0-15h0m0 9h0m1-9h0m0 11h0m0 15h0m0-11h0m0-13h0m0 25h0m0-5h0m1 11h0m0-6h0m0-5h0m0-22h0m0 26h0m0-28h0m0 9h0m1-9h0m0 2h0m0 13h0m0-18h0m0 1h0m0 15h0m0-7h0m1 9h0m0 5h0m0-20h0m0 13h0m0 11h0m0-15h0m0 19h0m0-10h0m1-3h0m0-13h0m0-4h0m0 4h0m0-9h0m0 22h0m0 13h0m1-17h0m0 17h0m0-30h0m0-12h0m0 7h0m0-7h0m0-8h0m1 4h0m0 2h0m0-9h0m0 9h0m0-13h0m0-4h0m1 6h0m0 22h0m0-17h0m0 6h0m0 25h0m0-11h0m0 19h0m0-8h0m1-23h0m0 12h0m0-14h0m0 3h0m0 19h0m0-19h0m0 28h0m1 13h0m0-26h0m0 18h0m0-7h0m0 16h0m0-31h0m0 30h0m1-21h0m0 13h0m0-16h0m0 5h0m0-5h0m0 24h0m0-24h0m1 9h0m0-13h0m0 13h0m0 15h0m0-30h0m0 22h0m0-14h0m0-4h0m1 16h0m0-20h0m0 2h0m0 11h0m0 7h0m0-21h0m0 18h0m1-4h0m0 17h0m0-11h0m0 18h0m0 0h0m0-7h0m0 9h0m1 7h0m0-20h0m0-4h0m0-18h0m0 11h0m0-18h0m0 11h0m1 5h0m0-16h0m0 12h0m0 21h0m0-6h0m0-2h0m0 8h0m1-10h0m0-3h0m0 5h0m0 0h0m0-5h0m0 31h0m0-4h0m1 13h0m0-13h0m0 2h0m0-29h0m0 29h0m0-16h0m0-8h0m1-2h0m0-7h0m0 4h0m0 13h0m0-15h0m0-20h0m0 25h0m1-3h0m0-17h0m0-7h0m0 6h0m0-2h0m0-8h0m0 26h0m1-20h0m0-2h0m0 2h0m0 40h0m0-11h0m0 9h0m0 2h0m1-5h0m0-19h0m0-3h0m0 0h0m0 27h0m0-13h0m0-22h0m1 26h0m0-18h0m0-13h0m0 18h0m0 4h0m0-8h0m0-9h0m1-3h0m0 9h0m0 13h0m0 3h0m0-13h0m0-12h0m0 5h0m0-3h0m1 0h0m0 10h0m0-12h0m0 9h0m0 16h0m0-3h0m0 12h0m1 0h0m0-5h0m0-17h0m0-14h0m0 5h0m0-1h0m0 12h0m1-14h0m0 2h0m0 12h0m0-16h0m0 25h0m0-14h0m0-29h0m1 29h0m0-18h0m0 29h0m0 0h0m0 7h0m0 4h0m0-6h0m1-9h0m0-24h0m0 4h0m0-15h0m0 8h0m0-4h0m0-2h0m1 0h0m0 15h0m0 0h0m0-11h0m0 13h0m0-8h0m0 26h0m0-15h0m1 30h0m0-17h0m0-7h0m0-11h0m0 11h0m0 5h0m0 19h0m1-4h0m0 31h0m0-11h0m0-18h0m0 11h0m0 14h0m0-3h0m1-24h0m0-15h0m0 2h0m0 11h0m0 4h0m0-22h0m0 0h0m1-6h0m0 24h0m0-27h0m0 18h0m0-7h0m0 12h0m0 0h0m1 10h0m0-26h0m0-4h0m0-7h0m0 22h0m0-9h0m0-18h0m1 11h0m0 5h0m0-11h0m0-11h0m0 26h0m0-6h0m0-5h0m1-11h0m0-15h0m0 4h0m0 11h0m0 16h0m0-2h0m0-25h0m1-8h0m0 4h0m1-5h0m0 16h0m0 0h0m0-15h0m0-1h0m1 29h0m0 0h0m0-11h0m0-9h0m0 0h0m0 11h0m0 29h0m1 7h0m0-9h0m0 7h0m0-3h0m0-20h0m0 23h0m0 4h0m1-9h0m0 2h0m0 7h0m0 17h0m0-33h0m0 7h0m0 7h0m1-7h0m0-11h0m0 15h0m0-4h0m0-22h0m0 27h0m0-11h0m1 8h0m0-18h0m0-2h0m0 3h0m0 0h0m0 9h0m0 6h0m1-13h0m0 26h0m0 7h0m0-16h0m0 0h0m0 20h0m0-13h0m1 0h0m0 11h0m0-18h0m0-8h0m0-7h0m0 2h0m0-2h0m1 0h0m0 20h0m0 0h0m0 9h0m0-7h0m0-22h0m0 22h0m0-20h0m1-2h0m0 16h0m0-9h0m0 11h0m0 11h0m0-13h0m1-1h0m0 1h0m0-16h0m0 2h0m0 7h0m0 18h0m0-12h0m0-4h0m1 0h0m0-2h0m0-2h0m0-7h0m0-16h0m0 3h0m0-13h0m1 15h0m0-15h0m0-1h0m0-4h0m0 5h0m0 15h0m0 6h0m1-17h0m0 0h0m0-7h0m0 33h0m0-11h0m0-11h0m0-2h0m1 7h0m0-2h0m0 6h0m0-13h0m0 24h0m0-26h0m0 19h0m1 1h0m0 17h0m0-17h0m0-1h0m0 23h0m0 4h0m0-13h0m0-11h0m1 18h0m0 2h0m0-11h0m0-3h0m0-9h0m0 7h0m1 9h0m0-16h0m0-2h0m0 14h0m0 0h0m0 0h0m0-14h0m0-2h0m1 33h0m0-24h0m0 24h0m0-33h0m0 11h0m0 31h0m1-11h0m0 7h0m0 0h0m0-9h0m0-18h0m0 35h0m0-28h0m0-7h0m1-9h0m0-4h0m0 31h0m0-22h0m0 24h0m0 11h0m0-33h0m1-5h0m0 0h0m0-10h0m0-3h0m0 11h0m0 11h0m0-2h0m1 13h0m0 7h0m0 0h0m0 0h0m0-11h0m0 20h0m0 11h0m1-22h0m0 6h0m0-4h0m0-2h0m0 17h0m0 0h0m0 12h0m0-11h0m1-7h0m0 4h0m0-26h0m0 18h0m0-14h0m0-2h0m1 2h0m0-9h0m0-11h0m0 0h0m0 7h0m0 5h0m0 10h0m0 9h0m1-4h0m0-4h0m0 4h0m0 4h0m0-6h0m0-18h0m1 9h0m0-24h0m0 33h0m0-7h0m0-6h0m0-12h0m0 7h0m0-5h0m1 10h0m0 22h0m0 11h0m0-25h0m0 9h0m0-13h0m0-9h0m1 15h0m0-13h0m0 18h0m0-13h0m0 9h0m0-5h0m0-11h0m1 2h0m0 5h0m0 11h0m0 9h0m0-12h0m0 1h0m0-7h0m1 13h0m0 0h0m0-17h0m0 8h0m0 2h0m0-8h0m0-3h0m1-6h0m0 0h0m0 2h0m0 5h0m0-16h0m0-7h0m0 3h0m0 4h0m1 2h0m0 4h0m0 23h0m0 15h0m0-6h0m0-1h0m0-22h0m1 27h0m0-18h0m0 2h0m0 7h0m0-37h0m0 2h0m0 13h0m1-22h0m0 0h0m0 13h0m0-9h0m0 13h0m0-19h0m1-5h0m0 20h0m0 0h0m0-15h0m0 31h0m0 0h0m0-27h0m1-7h0m0 0h0m0-8h0m0 35h0m0 11h0m0 2h0m0-8h0m0-5h0m1 26h0m0-31h0m0 3h0m0 11h0m0-18h0m0 13h0m0 20h0m1 3h0m0 22h0m0-14h0m0 2h0m0 1h0m0-3h0m0-4h0m1-20h0m0 0h0m0-2h0m0 4h0m0 3h0m0-14h0m0 14h0m1 22h0m0-3h0m0-35h0m0 9h0m0 13h0m0-31h0m0-9h0m1 14h0m0 30h0m0 5h0m0-5h0m0-4h0m0-7h0m0-8h0m0 22h0m1 6h0m0-2h0m0-13h0m0-4h0m0-3h0m0 3h0m0-23h0m1 25h0m0-14h0m0-2h0m0-6h0m0 2h0m0-5h0m0 0h0m1 34h0m0 2h0m0-7h0m0-6h0m0 4h0m0 7h0m0-3h0m1-19h0m0-20h0m0-3h0m0 42h0m0-22h0m0 2h0m0 18h0m1-18h0m0 23h0m0 4h0m0-22h0m0 0h0m0 9h0m0 17h0m1 2h0m0-2h0m0 5h0m0-5h0m0 2h0m0-19h0m0 6h0m1 13h0m0-8h0m0-9h0m0 15h0m0 2h0m0-32h0m0-10h0m1 32h0m0-25h0m0 9h0m0 5h0m0-5h0m0-4h0m0 11h0m0-25h0m1-8h0m0-11h0m0 8h0m0 27h0m0 0h0m0 6h0m1 5h0m0-15h0m0 8h0m0 0h0m0-15h0m0 2h0m0 22h0m1-6h0m0-16h0m0 13h0m0 3h0m0-3h0m0 14h0m0-34h0m1 14h0m0 9h0m0 4h0m0-2h0m0 20h0m0-18h0m0-4h0m0-1h0m1 1h0m0 19h0m0-26h0m0 2h0m0 5h0m0 0h0m0-3h0m1 5h0m0 15h0m0-18h0m0 1h0m0-11h0m0 2h0m0 19h0m1-13h0m0-8h0m0 22h0m0-14h0m0 13h0m0-31h0m0 14h0m1 17h0m0-6h0m0 0h0m0-5h0m0-8h0m0 4h0m0-26h0m1 8h0m0 5h0m0 28h0m0-24h0m0 16h0m0 0h0m0 4h0m1-29h0m0 20h0m0-4h0m0 18h0m0 2h0m0 0h0m0-24h0m1 11h0m0-9h0m0 11h0m0-2h0m0 4h0m0 6h0m0 11h0m1-8h0m0 17h0m0-17h0m0-29h0m0-2h0m0-3h0m0 12h0m0 8h0m1 1h0m0 4h0m0-5h0m0-4h0m0 11h0m0 2h0m0-26h0m1 6h0m0 9h0m0-4h0m0 0h0m0-4h0m0 4h0m0-2h0m1 2h0m0 11h0m0-4h0m0-16h0m0 4h0m0 0h0m0-2h0m1 0h0m0 3h0m0 15h0m0-24h0m0 28h0m0-29h0m0 16h0m1-2h0m0 9h0m0-7h0m0-20h0m0 16h0m0-5h0m0-9h0m1-13h0m0 2h0m0 3h0m0-1h0m0 5h0m0-11h0m0 2h0m0 0h0m1-6h0m0 0h0m0-9h0m0 9h0m0-1h0m0 7h0m1 9h0m0-24h0m0 30h0m0-4h0m0-4h0m0 18h0m0-25h0m0 15h0m1-15h0m0 9h0m0 0h0m0-9h0m0 11h0m0 0h0m0 7h0m1-7h0m0-2h0m0-4h0m0 2h0m0 11h0m0 29h0m0-32h0m1 10h0m0-16h0m0 16h0m0-10h0m0 25h0m0-18h0m0-11h0m1-6h0m0 10h0m0 1h0m0-9h0m0 22h0m0-22h0m0 13h0m1 2h0m0 3h0m0 17h0m0 4h0m0-4h0m0 4h0m0-21h0m0-1h0m1 7h0m0 7h0m0-22h0m0 2h0m0 0h0m0 33h0m1 2h0m0 2h0m0-11h0m0 0h0m0 7h0m0-9h0m0 7h0m1 2h0m0 2h0m0 2h0m0 0h0m0-9h0m0 7h0m0 11h0m1 0h0m0 0h0m0 9h0m0-5h0m0 0h0m0-13h0m0 3h0m0-7h0m1 13h0m0 5h0m0-5h0m0-18h0m0 7h0m0-6h0m0-20h0m1 20h0m0-3h0m0-19h0m0 17h0m0-4h0m0-14h0m0 1h0m1 8h0m0 0h0m0-4h0m0-5h0m0 1h0m0 10h0m0 14h0m1 0h0m0-2h0m0-14h0m0 9h0m0 2h0m0-9h0m0 16h0m1 0h0m0-18h0m0 11h0m0 2h0m0-17h0m0-16h0m0 12h0m1-3h0m0 16h0m0-3h0m0-10h0m0-12h0m0 29h0m0-29h0m0 38h0m1-13h0m0 9h0m0-7h0m0-9h0m0 13h0m0 7h0m1-15h0m0 0h0m0 19h0m0-11h0m0-22h0m0 11h0m0-4h0m0 18h0m1-31h0m0 19h0m0-4h0m0-11h0m0-2h0m0-9h0m1 6h0m0 9h0m0-17h0m0 2h0m0 6h0m0-11h0m0 7h0m0 2h0m1-19h0m0-1h0m0 9h0m0-9h0m0-8h0m0 9h0m0-11h0m1 39h0m0-9h0m0 3h0m0-22h0m0 24h0m0-20h0m0-7h0m1 0h0m0 13h0m0 1h0m0 0h0m0 6h0m0-4h0m0 26h0m1-20h0m0 16h0m0-7h0m0 2h0m0 18h0m0-22h0m0 5h0m1 11h0m0 4h0m0-2h0m0-23h0m0-6h0m0 33h0m0-35h0m0 17h0m1-13h0m0 13h0m0 11h0m0-33h0m0 18h0m0 15h0m1-10h0m0 2h0m0 15h0m0-15h0m0 6h0m0-13h0m0 5h0m0 11h0m1 8h0m0-15h0m0 26h0m0-8h0m0 21h0m0-22h0m0-2h0m1 3h0m0 2h0m0 4h0m0-6h0m0 8h0m0 7h0m0 0h0m1-5h0m0 16h0m0-5h0m0-11h0m0-26h0m0 16h0m0-3h0m1-26h0m0 2h0m0 4h0m0 14h0m0 9h0m0 6h0m0-15h0m1 2h0m0-24h0m0 17h0m0-18h0m0-6h0m0 27h0m0-1h0m1 7h0m0-2h0m0-7h0m0-13h0m0 2h0m0-7h0m0 10h0m1-16h0m0 9h0m0 6h0m0-19h0m0 4h0m0 4h0m0-2h0m1 7h0m0-7h0m0 7h0m0 6h0m0 23h0m0 4h0m0-22h0m1 24h0m0-4h0m0 8h0m0-11h0m0-2h0m0-8h0m0 28h0m0-7h0m1 0h0m0-28h0m0 6h0m0 20h0m0-11h0m0 27h0m0-25h0m1-8h0m0 26h0m0-4h0m0 9h0m0-25h0m0-6h0m0 11h0m1-14h0m0 25h0m0-3h0m0-21h0m0 8h0m0-17h0m0 6h0m1 11h0m0-8h0m0-14h0m0-4h0m0-2h0m0 13h0m0 15h0m1 5h0m0 9h0m0 2h0m0 0h0m0-13h0m0-14h0m0-17h0m1 4h0m0 13h0m0-28h0m0 13h0m0 24h0m0-13h0m0 13h0m0-20h0m1 2h0m0 9h0m0-15h0m0-3h0m0-4h0m0 9h0m0-9h0m1 31h0m0 4h0m0 5h0m0-26h0m0-18h0m0 39h0m0-22h0m1-19h0m0 30h0m0-19h0m0 2h0m0 35h0m0 4h0m0-24h0m1 25h0m0 0h0m0-14h0m0-2h0m0 7h0m0-2h0m0 13h0m1-18h0m0-18h0m0 27h0m0-2h0m0-2h0m0-12h0m0 9h0m1-22h0m0 18h0m0-5h0m0-20h0m0 9h0m0-17h0m0 0h0m1 31h0m0 8h0m0-21h0m0 4h0m0 7h0m0 15h0m0 2h0m0 4h0m1-35h0m0 2h0m0 22h0m0-24h0m0 0h0m0 13h0m1 1h0m0 6h0m0 16h0m0-16h0m0 4h0m0 0h0m0-4h0m1-4h0m0-23h0m0 31h0m0 7h0m0-33h0m0 29h0m0-31h0m1 26h0m0-15h0m0 18h0m0-20h0m0 0h0m0 6h0m0-9h0m0 3h0m1 8h0m0-13h0m0-2h0m0 29h0m0 8h0m0 3h0m0-11h0m1-16h0m0 7h0m0 7h0m0 6h0m0 2h0m0-6h0m0-33h0m1 28h0m0-15h0m0-11h0m0 2h0m0 37h0m0-4h0m0 2h0m1 3h0m0-12h0m0 0h0m0-15h0m0-4h0m0 9h0m0-14h0m0 11h0m1 5h0m0-36h0m0 7h0m0 27h0m0-14h0m0 16h0m1-20h0m0-2h0m0 13h0m0 13h0m0-38h0m0 27h0m0-18h0m1 16h0m0-2h0m0-9h0m0 26h0m0-15h0m0 15h0m0 11h0m0-31h0m1 14h0m0-9h0m0 22h0m0-2h0m0 4h0m0 0h0m0-7h0m1-8h0m0 9h0m0-16h0m0 15h0m0-2h0m0-31h0m0 2h0m1 16h0m0-7h0m0-9h0m0 12h0m0-2h0m0 4h0m0-9h0m1 5h0m0-3h0m0-6h0m0 6h0m0 13h0m0 3h0m0-25h0m1-6h0m0 0h0m0 15h0m0-7h0m0 32h0m0-12h0m0-8h0m1 6h0m0-18h0m0 18h0m0-15h0m0 9h0m0 0h0m0-7h0m1-16h0m0 20h0m0-6h0m0 13h0m0 2h0m0-31h0m0 13h0m1-28h0m0 9h0m0-13h0m0-1h0m1 0h0m0 0h0m0 11h0m1 9h0m0-4h0m0 20h0m0-9h0m0-4h0m0-5h0m0 36h0m1-11h0m0-7h0m0 15h0m0 7h0m0 6h0m0-10h0m0-3h0m1 3h0m0-11h0m0 2h0m0-20h0m0 17h0m0 9h0m0-8h0m1-14h0m0 2h0m0-8h0m0 4h0m0 4h0m0 12h0m0-14h0m1 14h0m0-20h0m0 19h0m0-8h0m0 8h0m0 1h0m0-20h0m1 35h0m0-16h0m0 3h0m0-3h0m0-2h0m0 2h0m0 3h0m0 30h0m1-11h0m0-11h0m0 3h0m0 13h0m0-11h0m0 9h0m0-2h0m1-3h0m0 16h0m0-11h0m0-7h0m0-4h0m0 9h0m0-9h0m1-3h0m0 22h0m0 5h0m0-31h0m0 20h0m0-27h0m1 16h0m0-11h0m0-11h0m0 20h0m0 9h0m0 0h0m0-18h0m0 22h0m1-31h0m0 5h0m0-7h0m0-2h0m0 2h0m0 26h0m0-6h0m1-2h0m0 2h0m0 9h0m0 6h0m0-38h0m0 21h0m0-3h0m1 3h0m0-3h0m0 7h0m0-27h0m0-9h0m0 43h0m0-5h0m1 9h0m0-16h0m0-2h0m0-6h0m0-20h0m0 22h0m0 15h0m0-13h0m1 15h0m0-4h0m0-18h0m0-17h0m0 18h0m0 19h0m0-26h0m1-3h0m0-4h0m0-11h0m0 0h0m0 0h0m0 40h0m0-29h0m1 7h0m0-13h0m0 0h0m0 4h0m0 11h0m0 9h0m1 17h0m0-22h0m0 11h0m0-8h0m0-11h0m0 15h0m0-2h0m0 2h0m1 16h0m0-20h0m0 11h0m0-14h0m0-6h0m0-11h0m0 6h0m1 0h0m0 12h0m0-20h0m0 15h0m0 11h0m0 5h0m0-18h0m1 11h0m0-7h0m0 2h0m0-11h0m0-4h0m0 27h0m0-16h0m1-7h0m0 18h0m0 4h0m0 0h0m0-6h0m0 7h0m0 4h0m1-13h0m0-9h0m0 7h0m0 17h0m0-20h0m0-2h0m0 0h0m1-4h0m0 26h0m0 0h0m0 2h0m0-29h0m0 16h0m0-22h0m1 2h0m0 27h0m0 11h0m0-24h0m0 13h0m0-5h0m0-33h0m0 16h0m1 9h0m0-10h0m0-10h0m0 8h0m0 18h0m0 4h0m0-11h0m1 1h0m0-10h0m0 20h0m0-17h0m0 22h0m0-18h0m0-4h0m1 2h0m0 13h0m0 16h0m0-7h0m0-24h0m0-5h0m0-4h0m1-9h0m0 22h0m0 16h0m0-3h0m0 7h0m0-29h0m0 16h0m1 0h0m0-18h0m0 20h0m0-2h0m0-4h0m0-9h0m0 13h0m1-7h0m0 5h0m0-12h0m0-10h0m0 8h0m0 7h0m0-7h0m1-2h0m0 33h0m0-15h0m0 17h0m0-30h0m0-1h0m0 18h0m1-2h0m0-11h0m0-2h0m0 22h0m0-15h0m0 17h0m0 0h0m1 5h0m0-9h0m0-2h0m0-25h0m0-4h0m0 13h0m0 9h0m0-2h0m1 13h0m0 6h0m0-8h0m0 6h0m0-17h0m0 2h0m0-5h0m1 16h0m0-2h0m0 0h0m0-18h0m0 16h0m0 11h0m0 2h0m1-11h0m0-33h0m0 2h0m0 26h0m0 5h0m0 11h0m0 8h0m1-19h0m0-3h0m0 1h0m0 2h0m0-9h0m0-14h0m0 12h0m1-12h0m0-8h0m0 11h0m0 7h0m0-14h0m0 22h0m0-39h0m1 0h0m0 4h0m0-4h0m0 2h0m0 0h0m0 9h0m0 26h0m1 5h0m0-18h0m0 15h0m0-9h0m0 5h0m0-9h0m0 18h0m0 19h0m1-33h0m0 29h0m0-33h0m0 0h0m0-13h0m0 20h0m1 15h0m0-7h0m0 1h0m0 4h0m0 4h0m0-24h0m0 0h0m0 18h0m1-13h0m0 22h0m0-7h0m0 9h0m0-3h0m0-10h0m0 0h0m1-12h0m0-2h0m0 2h0m0 0h0m0-42h0m0 18h0m0 5h0m1-1h0m0-21h0m0 21h0m0-22h0m1 16h0m0-15h0m0 32h0m1-11h0m0 3h0m0 11h0m0 2h0m0 0h0m0-5h0m0-4h0m1 13h0m0-9h0m0-4h0m0-11h0m0 22h0m0 14h0m0-14h0m0 5h0m1 13h0m0-25h0m0-15h0m0 2h0m0 14h0m0 0h0m1 11h0m0-9h0m0-9h0m0 9h0m0-9h0m0 13h0m0-4h0m0 4h0m1-18h0m0 23h0m0 2h0m0 15h0m0-13h0m0-4h0m0-2h0m1-12h0m0 11h0m0 3h0m0-23h0m0 21h0m0 17h0m0-38h0m1-2h0m0 7h0m0 7h0m0 0h0m0-3h0m0 2h0m0 7h0m1 0h0m0 5h0m0-11h0m0-1h0m0 34h0m0-3h0m0-13h0m1-2h0m0-20h0m0 31h0m0-2h0m0 13h0m0-13h0m0 9h0m1 4h0m0 2h0m0-13h0m0-13h0m0 2h0m0 22h0m0-40h0m1 9h0m0-7h0m0 5h0m0 7h0m0 20h0m0 8h0m0-2h0m1-4h0m0 9h0m0-5h0m0-9h0m0 22h0m0 0h0m0-8h0m1 2h0m0-5h0m0 9h0m0-24h0m0 9h0m0-5h0m0 13h0m0-28h0m1 2h0m0 7h0m0 11h0m0-5h0m0 22h0m0-6h0m0 0h0m1 11h0m0-7h0m0-13h0m0 9h0m0-3h0m0-11h0m0 1h0m1-7h0m0 18h0m0-1h0m0-24h0m0 16h0m0-20h0m0-18h0m1-2h0m0 27h0m0-21h0m0 20h0m0-10h0m0-14h0m0-7h0m1 18h0m0-7h0m0 1h0m0 9h0m0-14h0m0 16h0m0-3h0m1 29h0m0-35h0m0 13h0m0-6h0m0 6h0m0-4h0m0-12h0m1 5h0m0-11h0m0 27h0m0-21h0m0-4h0m0 16h0m0-14h0m0 12h0m1-21h0m0-2h0m0 2h0m0 5h0m0 4h0m0 2h0m0 14h0m1 6h0m0 5h0m0-2h0m0-7h0m0-16h0m0 14h0m0-9h0m1-5h0m0-4h0m0 0h0m0-2h0m0 29h0m0 2h0m0-11h0m1 0h0m0 17h0m0-15h0m0-15h0m0 19h0m0-8h0m0-11h0m1-5h0m0 11h0m0-18h0m0 3h0m0-7h0m0 4h0m0 11h0m1-6h0m0 7h0m0-5h0m0 14h0m0-23h0m0 0h0m0-2h0m1-11h0m0 9h0m0-15h0m0 21h0m0 1h0m0-9h0m0-9h0m0 4h0m1 20h0m0 7h0m0-11h0m0-3h0m0 14h0m0-22h0m1-9h0m0 18h0m0 19h0m0 11h0m0 0h0m0-8h0m0-27h0m0 20h0m1 5h0m0 0h0m0 2h0m0 19h0m0 0h0m0 3h0m1 6h0m0-8h0m0 6h0m0-11h0m0 5h0m0-25h0m0 20h0m0-7h0m1 14h0m0-9h0m0-15h0m0 15h0m0 6h0m0-33h0m0 29h0m1 11h0m0 9h0m0-11h0m0-24h0m0 8h0m0 7h0m0-15h0m1 17h0m0-20h0m0-9h0m0 0h0m0 20h0m0 0h0m0-19h0m1 9h0m0-18h0m0-3h0m0 0h0m0 9h0m0 18h0m0-18h0m1 9h0m0 29h0m0-18h0m0-18h0m0 23h0m0-11h0m0 9h0m1 8h0m0 13h0m0-35h0m0-2h0m0 26h0m0-37h0m0 4h0m1 2h0m0 20h0m0 3h0m0 4h0m0 5h0m0-27h0m0 2h0m0-6h0m1 9h0m0 17h0m0-2h0m0-18h0m0 7h0m0 4h0m0-6h0m1 6h0m0-18h0m0 23h0m0-11h0m0 6h0m0 9h0m0-27h0m1 7h0m0-26h0m0 0h0m0-5h0m0-4h0m0 2h0m0 4h0m1 12h0m0-14h0m0-4h0m0 15h0m0-9h0m0 25h0m0 0h0m1-9h0m0 2h0m0 2h0m0 2h0m0 9h0m0 22h0m0-19h0m1-3h0m0 5h0m0-25h0m0 3h0m0-3h0m0 1h0m0 6h0m1 4h0m0 25h0m0-15h0m0-9h0m0-12h0m0 5h0m0 7h0m0 20h0m1-9h0m0-2h0m0 6h0m0-24h0m0 26h0m0 0h0m0-17h0m1-12h0m0 11h0m0 3h0m0 37h0m0-35h0m0 9h0m0-18h0m1 13h0m0-8h0m0-12h0m0 5h0m0 0h0m0 16h0m0-16h0m1-2h0m0 13h0m0-9h0m0 13h0m0 3h0m0 11h0m0-18h0m1 29h0m0-36h0m0 33h0m0-17h0m0 9h0m0-25h0m0 3h0m1 31h0m0-12h0m0-20h0m0 18h0m0-8h0m0-5h0m0 26h0m1 1h0m0 6h0m0-18h0m0-2h0m0 9h0m0 22h0m0-4h0m0-20h0m1-5h0m0 22h0m0-2h0m0-17h0m0 9h0m0-3h0m0 14h0m1-29h0m0 18h0m0-5h0m0-6h0m0 4h0m0-7h0m0 14h0m1 2h0m0-16h0m0-2h0m0-15h0m0-9h0m0 26h0m1-20h0m0 2h0m0 0h0m0 12h0m0-7h0m0 24h0m0 5h0m0 0h0m1 8h0m0 0h0m0-4h0m0-7h0m0 1h0m0-9h0m0 0h0m1-27h0m0 24h0m0-4h0m0 20h0m0 2h0m0-2h0m0-15h0m1-1h0m0 14h0m0-16h0m0-15h0m0-3h0m0 18h0m0-9h0m1 3h0m0 17h0m0-11h0m0 24h0m0-35h0m0-7h0m0 18h0m1-4h0m0 15h0m0-4h0m0 2h0m0-18h0m0 5h0m0-4h0m1-7h0m0-5h0m0 27h0m0-7h0m0 16h0m0-18h0m0 15h0m0-37h0m1 26h0m0-19h0m0-11h0m0 24h0m0 2h0m0-16h0m0 38h0m1-7h0m0 0h0m0-15h0m0 2h0m0 3h0m0 15h0m1 6h0m0 1h0m0-27h0m0 20h0m0-15h0m0 8h0m0-22h0m0 18h0m1 7h0m0 6h0m0-17h0m0 0h0m0 6h0m0-2h0m0 9h0m1-11h0m0 11h0m0-7h0m0 16h0m0-11h0m0-11h0m0 8h0m1 5h0m0-3h0m0 9h0m0-6h0m0-5h0m0 11h0m0-48h0m0 17h0m1-15h0m0-13h0m0 13h0m0-4h0m0 4h0m0 9h0m1-35h0m0 19h0m0 2h0m0-8h0m0 6h0m0-11h0m1 16h0m0-22h0m0 8h0m1 0h0m0 7h0m0 9h0m0-16h0m0 34h0m0-14h0m0-8h0m0 10h0m1 1h0m0 19h0m0-4h0m0-2h0m0 17h0m0 0h0m0-19h0m1 9h0m0 2h0m0 15h0m0-28h0m0-7h0m0 2h0m0 16h0m1-16h0m0-7h0m0 5h0m0 7h0m0 0h0m0-3h0m0 2h0m1-4h0m0 15h0m0 14h0m0-13h0m0 13h0m0-18h0m0 24h0m1-4h0m0-22h0m0 13h0m0-2h0m0-22h0m0 28h0m0 12h0m1-16h0m0-26h0m0 24h0m0-20h0m0 13h0m0-18h0m0 23h0m1-13h0m0-1h0m0 9h0m0 9h0m0 15h0m0-22h0m0 12h0m1-22h0m0 13h0m0 4h0m0-6h0m0-14h0m0 14h0m0 19h0m0-24h0m1-6h0m0-3h0m0 13h0m0-22h0m0 7h0m0 0h0m1 9h0m0-22h0m0 37h0m0-4h0m0-2h0m0-7h0m0-4h0m0 22h0m1-11h0m0-20h0m0 15h0m0 14h0m0-23h0m0 9h0m0 18h0m1-2h0m0 6h0m0-4h0m0-5h0m0 0h0m0 12h0m0-31h0m1-2h0m0 10h0m0 7h0m0-6h0m0 2h0m0 4h0m0 4h0m1-10h0m0-5h0m0 2h0m0 5h0m0-3h0m0 3h0m0 0h0m1 4h0m0 7h0m0-5h0m0-39h0m0 10h0m0-2h0m0-9h0m0 11h0m1-2h0m0 16h0m0-7h0m0 24h0m0-11h0m0-20h0m1 14h0m0 29h0m0-7h0m0-9h0m0 13h0m0-6h0m0 13h0m1 0h0m0 4h0m0 0h0m0-19h0m0 13h0m0-11h0m0 4h0m1-6h0m0 13h0m0-25h0m0 29h0m0 4h0m0-21h0m0 19h0m0-4h0m1 6h0m0-28h0m0 24h0m0-33h0m0 31h0m0-15h0m0-16h0m1 16h0m0-3h0m0 5h0m0 8h0m0-17h0m0-9h0m0 0h0m1 22h0m0-17h0m0 4h0m0-9h0m0 4h0m0-15h0m0 4h0m0 0h0m1-8h0m0 0h0m0 2h0m0 22h0m0-16h0m0 20h0m1-29h0m0 1h0m0 26h0m0-18h0m0-8h0m0 6h0m0 24h0m0-24h0m1 20h0m0-4h0m0-3h0m0 22h0m0-6h0m0-2h0m0-3h0m1 3h0m0-20h0m0 15h0m0 13h0m0-37h0m0 9h0m0-18h0m1 18h0m0-7h0m0 0h0m0 0h0m0 25h0m0-11h0m0-11h0m1 10h0m0 11h0m0-17h0m0 17h0m0-4h0m0-20h0m0-17h0m1-3h0m0 7h0m0 2h0m0 25h0m0-47h0m0-6h0m0 15h0m1-5h0m0 18h0m0-11h0m0 2h0m0-11h0m0-6h0m0 9h0m1-1h0m0 5h0m0 13h0m0-20h0m0 13h0m0 14h0m0 4h0m1-22h0m0 24h0m0 0h0m0 3h0m0-23h0m0 9h0m0 14h0m1-27h0m0 18h0m0 6h0m0 7h0m0-16h0m0 10h0m0 6h0m0-7h0m1-13h0m0 0h0m0 36h0m0-14h0m0 0h0m0-20h0m0 0h0m1 23h0m0-3h0m0-15h0m0 13h0m0-6h0m0 21h0m1-6h0m0 4h0m0-2h0m0 9h0m0 4h0m0-6h0m0-9h0m0 4h0m1-2h0m0-18h0m0 1h0m0 26h0m0-2h0m0 8h0m0-6h0m1-9h0m0 7h0m0-2h0m0-40h0m0 8h0m0 7h0m0-15h0m1 9h0m0 6h0m0 3h0m0 2h0m0-9h0m0 6h0m0-6h0m1 22h0m0 9h0m0 0h0m0 4h0m0-4h0m0-3h0m0 7h0m1-7h0m0-24h0m0 3h0m0-10h0m0 0h0m0 0h0m0 5h0m1-2h0m0 6h0m0 16h0m0-27h0m0 0h0m0 0h0m0 33h0m0 7h0m1-6h0m0 0h0m0-25h0m0 13h0m0-15h0m0 31h0m0-22h0m1 6h0m0-24h0m0 0h0m0-4h0m0-16h0m0 11h0m0 0h0m1 7h0m0-13h0m0 24h0m0-24h0m0 15h0m0 11h0m0 5h0m1-7h0m0-11h0m0 27h0m0 10h0m0-15h0m0 15h0m0-22h0m1 0h0m0 25h0m0-27h0m0-17h0m0 2h0m0-3h0m0 0h0m1 11h0m0 5h0m0-2h0m0 6h0m0-9h0m0 3h0m0-7h0m0 0h0m1 2h0m0 0h0m0 3h0m0-9h0m0-9h0m0 4h0m0 2h0m1 0h0m0-2h0m0 5h0m0 8h0m0-8h0m0-2h0m1 35h0m0-27h0m0 3h0m0 11h0m0-2h0m0-12h0m0-4h0m0-5h0m1 7h0m0-9h0m0 2h0m0 5h0m0 27h0m0-23h0m0 12h0m1-3h0m0-15h0m0 18h0m0 2h0m0 2h0m0-20h0m0 2h0m1 4h0m0 0h0m0 38h0m0-17h0m0-23h0m0-6h0m0-11h0m1 8h0m0 3h0m0 0h0m0-11h0m0 9h0m0 0h0m0 10h0m1 18h0m0 7h0m0-22h0m0 17h0m0 3h0m0-25h0m0 33h0m0-10h0m1-18h0m0 18h0m0-1h0m0 3h0m0-31h0m0 4h0m0-6h0m1 8h0m0-2h0m0 24h0m0-33h0m0 5h0m0 0h0m1 29h0m0 0h0m0-23h0m0 11h0m0-6h0m0 2h0m0 4h0m0-17h0m1-5h0m0 9h0m0 13h0m0-4h0m0-9h0m0-4h0m0 48h0m1-33h0m0-7h0m0 1h0m0-9h0m0 20h0m0-11h0m0-5h0m1 0h0m0 18h0m0 13h0m0-27h0m0 10h0m0 11h0m0-21h0m1 36h0m0-20h0m0 22h0m0-20h0m0 18h0m0-2h0m0-5h0m1 20h0m0-20h0m0-15h0m0 9h0m0-2h0m0 11h0m0-5h0m0-9h0m1 24h0m0-10h0m0-12h0m0-19h0m0 20h0m0-16h0m1 16h0m0-9h0m0-3h0m0-22h0m0-2h0m0-6h0m0-1h0m1-10h0m0-1h0m1 0h0m1 31h0m0-15h0m0 0h0m0-11h0m0 6h0m0 0h0m1 18h0m0 5h0m0-5h0m0-6h0m0-7h0m0 4h0m0 5h0m0 22h0m1-22h0m0 0h0m0 2h0m0 33h0m0 5h0m0-12h0m0 3h0m1-14h0m0 7h0m0-6h0m0-9h0m0 20h0m0-12h0m0-6h0m1 37h0m0-13h0m0 11h0m0-4h0m0-27h0m0 27h0m0-31h0m1 11h0m0-2h0m0 9h0m0 0h0m0-5h0m0 9h0m0-35h0m1 11h0m0 19h0m0 3h0m0-20h0m0 0h0m0 17h0m0 12h0m1-34h0m0-19h0m0 4h0m0-7h0m0 24h0m0-13h0m0 0h0m1-8h0m0 22h0m0-7h0m0 9h0m0-16h0m0 7h0m0-11h0m0 33h0m1-26h0m0 19h0m0-4h0m0-5h0m0 0h0m0-17h0m0 24h0m1-6h0m0 8h0m0-11h0m0-9h0m0 9h0m0 9h0m0-26h0m1 2h0m0 18h0m0 20h0m0 17h0m0-15h0m0-23h0m0 31h0m1 11h0m0-19h0m0-7h0m0 7h0m0 11h0m0 2h0m0-15h0m1 21h0m0 0h0m0-2h0m0-11h0m0 22h0m0-17h0m0-3h0m0 3h0m1-29h0m0-11h0m0 15h0m0-9h0m0 3h0m0 20h0m0 13h0m1-11h0m0 7h0m0-20h0m0 22h0m0-33h0m0-12h0m1 25h0m0 20h0m0-13h0m0-9h0m0-3h0m0 29h0m0 4h0m1-4h0m0 2h0m0-11h0m0 7h0m0 0h0m0-2h0m0 9h0m0-38h0m1 13h0m0-26h0m0 15h0m0 35h0m0-2h0m0-13h0m0-13h0m1-11h0m0 31h0m0-9h0m0 0h0m0 6h0m0 3h0m0-11h0m1-2h0m0 11h0m0-1h0m0 3h0m0 0h0m0 19h0m0-26h0m1 0h0m0 5h0m0 0h0m0-12h0m0-11h0m0 5h0m0 20h0m1-22h0m0 2h0m0 7h0m0-1h0m0 12h0m0-9h0m0 6h0m1-2h0m0-11h0m0 2h0m0 7h0m0 7h0m0-3h0m0-4h0m0 9h0m1-9h0m0 9h0m0 2h0m0 4h0m0-24h0m0 22h0m1-17h0m0 4h0m0-9h0m0 0h0m0-11h0m0 24h0m0 7h0m0-11h0m1 2h0m0-6h0m0-3h0m0 0h0m0-4h0m0-18h0m0 2h0m1 11h0m0-24h0m0-6h0m0 8h0m0-11h0m0-2h0m0 7h0m1 0h0m0-13h0m0 6h0m0 0h0m0 20h0m0-9h0m0 18h0m1 4h0m0 0h0m0 7h0m0 6h0m0-6h0m0 29h0m0-5h0m1-37h0m0-3h0m0 29h0m0 11h0m0 0h0m0 9h0m0-5h0m1 3h0m0 2h0m0-15h0m0-7h0m0 20h0m0-20h0m0-5h0m1 7h0m0-6h0m0 11h0m0-38h0m0 0h0m0 4h0m0 16h0m1-20h0m0-9h0m0 15h0m0-4h0m0 25h0m0 8h0m0-31h0m0 23h0m1-21h0m0-6h0m0 42h0m0-27h0m0-4h0m0-5h0m1 3h0m0-13h0m0 0h0m0 8h0m0 2h0m0 5h0m0-5h0m0-8h0m1-3h0m0 1h0m0 8h0m0-2h0m0-6h0m0 6h0m0-4h0m1-3h0m0 5h0m0-7h0m0-2h0m0 5h0m0 8h0m0-6h0m1 15h0m0 3h0m0 24h0m0-11h0m0 8h0m0-10h0m0 13h0m0-20h0m1-5h0m0-6h0m0 11h0m0-2h0m0-14h0m0 14h0m1 4h0m0 4h0m0 11h0m0-6h0m0 22h0m0 7h0m0-34h0m1 9h0m0 2h0m0-4h0m0 9h0m0-15h0m0-18h0m0-2h0m1 24h0m0 4h0m0-8h0m0 0h0m0-3h0m0-15h0m0 33h0m1-20h0m0 11h0m0-2h0m0 18h0m0-7h0m0-7h0m0-11h0m0 18h0m1-29h0m0 13h0m0-10h0m0-9h0m0-5h0m0 16h0m0-23h0m1 16h0m0-11h0m0 13h0m0-6h0m0 0h0m0 8h0m0-19h0m1 22h0m0-11h0m0-9h0m0 17h0m0-17h0m0 20h0m0-12h0m1 16h0m0-15h0m0 31h0m0 0h0m0-12h0m0-24h0m0 9h0m0-9h0m1 36h0m0-40h0m0 9h0m0-1h0m0-11h0m0 1h0m1 15h0m0 15h0m0-15h0m0-11h0m0 2h0m0 0h0m0 27h0m1-25h0m0-9h0m0 5h0m0 2h0m0-11h0m0 20h0m0-4h0m1 2h0m0-11h0m0-2h0m0-3h0m0 9h0m0 9h0m0 5h0m0-10h0m1 21h0m0-7h0m0-4h0m0 24h0m0-7h0m0-18h0m0 11h0m1-22h0m0 11h0m0-9h0m0 0h0m0 1h0m0 17h0m0-11h0m1-4h0m0 15h0m0-15h0m0-3h0m0 23h0m0-9h0m0-11h0m1-5h0m0 7h0m0 2h0m0-2h0m0 16h0m0 15h0m0-11h0m1 9h0m0-5h0m0-11h0m0-26h0m0 2h0m0 22h0m0-11h0m1 13h0m0-20h0m0 18h0m0 7h0m0-22h0m0 19h0m0-2h0m1-4h0m0-14h0m0 0h0m0 5h0m0-2h0m0 11h0m0 13h0m1-2h0m0-7h0m0 5h0m0-20h0m0-3h0m0 12h0m0 19h0m0-11h0m1 9h0m0-17h0m0 17h0m0-8h0m0 15h0m0 0h0m0-11h0m1 15h0m0-19h0m0 8h0m0-31h0m0 5h0m0-9h0m0 18h0m1 4h0m0 2h0m0-8h0m0 2h0m0 22h0m0 6h0m0-4h0m1-13h0m0 20h0m0-27h0m0 27h0m0-5h0m0 22h0m0-2h0m1-2h0m0-42h0m0 2h0m0 2h0m0 0h0m0-8h0m0 15h0m0 9h0m1-5h0m0-6h0m0-3h0m0-13h0m0-20h0m0 27h0m0-22h0m1-5h0m0-17h0m0 0h0m1 4h0m0 24h0m0-6h0m1 0h0m0-13h0m0 11h0m0 2h0m0 24h0m0-2h0m0 11h0m1-5h0m0-6h0m0 17h0m0-10h0m0 8h0m0-15h0m0 18h0m1-16h0m0-2h0m0-2h0m0-3h0m0-9h0m0-19h0m0 2h0m1 11h0m0-5h0m0 0h0m0 1h0m0 4h0m0 0h0m0 11h0m1-11h0m0 11h0m0 13h0m0-6h0m0-3h0m0 18h0m0-17h0m1 11h0m0-21h0m0-4h0m0 5h0m0 17h0m0-22h0m0 13h0m1 11h0m0 16h0m0-35h0m0-3h0m0-2h0m0-4h0m0-3h0m0 12h0m1-7h0m0 13h0m0 29h0m0-11h0m0-7h0m0-13h0m1 22h0m0-7h0m0-11h0m0 9h0m0 3h0m0 10h0m0 1h0m1-7h0m0-20h0m0-2h0m0 24h0m0-2h0m0-11h0m0 4h0m0 2h0m1 9h0m0-11h0m0 14h0m0-40h0m0 35h0m0 15h0m0-2h0m1-13h0m0-6h0m0-3h0m0-2h0m0-18h0m0 9h0m0 33h0m1-30h0m0 17h0m0-27h0m0 31h0m0-22h0m0 3h0m0-7h0m1-11h0m0 27h0m0-3h0m0 14h0m0-11h0m0-12h0m0-13h0m0 16h0m1 4h0m0-18h0m0 7h0m0 0h0m0-2h0m0-2h0m1-25h0m0 51h0m0-6h0m0-18h0m0 9h0m0-3h0m0-8h0m0-11h0m1 11h0m0 9h0m0-25h0m0-9h0m0-8h0m0 13h0m1 22h0m0-36h0m0 7h0m0 2h0m0 5h0m0-13h0m0 21h0m0-4h0m1 33h0m0 9h0m0-13h0m0 11h0m0-9h0m0-7h0m0 33h0m1-6h0m0-24h0m0 4h0m0 2h0m0 13h0m0-13h0m0 27h0m1-31h0m0 7h0m0 2h0m0 2h0m0-5h0m0-10h0m0 11h0m1-11h0m0-3h0m0 11h0m0-8h0m0 6h0m0 2h0m0-2h0m0-4h0m1 0h0m0 24h0m0-44h0m0 4h0m0 25h0m0-29h0m1 15h0m0 7h0m0-18h0m0 24h0m0 20h0m0-6h0m0-5h0m1 7h0m0-4h0m0 0h0m0-1h0m0-4h0m0-7h0m0-6h0m1 7h0m0-5h0m0-11h0m0-7h0m0 2h0m0 32h0m0 10h0m1-2h0m0 3h0m0-12h0m0-17h0m0 17h0m0 5h0m0-26h0m0-1h0m1 1h0m0 4h0m0 9h0m0 6h0m0 16h0m0-13h0m0 6h0m1-13h0m0 18h0m0-9h0m0-2h0m0 6h0m0-26h0m0 17h0m1-4h0m0 13h0m0-18h0m0-2h0m0 9h0m0-15h0m0 2h0m1 17h0m0 3h0m0-22h0m0 6h0m0-17h0m0 19h0m0-8h0m1-2h0m0 4h0m0 4h0m0 22h0m0-8h0m0 10h0m0 0h0m0-11h0m1-8h0m0-18h0m0 20h0m0-24h0m0 17h0m0 11h0m0 7h0m1-2h0m0-16h0m0-9h0m0 23h0m0-5h0m0 11h0m1-9h0m0 9h0m0-7h0m0 1h0m0-25h0m0 20h0m0-15h0m0 17h0m1 5h0m0-16h0m0-11h0m0-4h0m0 20h0m0-14h0m0-4h0m1 2h0m0-9h0m0 18h0m0 22h0m0-17h0m0 6h0m0-11h0m1 31h0m0 4h0m0-22h0m0 7h0m0 2h0m0 4h0m0-13h0m1-2h0m0 9h0m0 17h0m0-17h0m0-5h0m0 3h0m0-16h0m1 18h0m0-7h0m0-28h0m0 9h0m0 0h0m0-1h0m0-6h0m1 15h0m0-33h0m0 22h0m0-15h0m0 2h0m0 0h0m0-5h0m0 25h0m1-2h0m0-33h0m0 24h0m0-9h0m0-18h0m0 2h0m1 14h0m0-2h0m0 13h0m0-11h0m0-3h0m0 7h0m0 14h0m0-16h0m1-2h0m0 0h0m0 17h0m0 5h0m0-14h0m0 5h0m0-7h0m1 7h0m0 5h0m0 17h0m0-18h0m0 16h0m0-2h0m0 2h0m1 0h0m0-15h0m0 0h0m0-3h0m0 5h0m0-12h0m0 5h0m1-9h0m0 4h0m0 21h0m0-12h0m0 0h0m0-6h0m0-14h0m1 9h0m0 25h0m0-34h0m0 16h0m0 16h0m0 10h0m0-24h0m0 18h0m1-29h0m0 7h0m0 6h0m0-4h0m0-9h0m0 16h0m1 11h0m0-5h0m0-9h0m0 31h0m0-6h0m0-2h0m0-11h0m0 17h0m1 2h0m0-11h0m0 2h0m0 12h0m0-22h0m0 17h0m0-2h0m1-18h0m0-2h0m0 18h0m0 2h0m0-18h0m0 0h0m0-8h0m1 17h0m0 9h0m0-22h0m0 6h0m0 23h0m0-3h0m1-6h0m0-5h0m0-13h0m0 5h0m0 2h0m0-16h0m0 22h0m0 11h0m1-33h0m0 35h0m0-22h0m0 12h0m0-27h0m0 20h0m0-9h0m1 2h0m0 9h0m0-18h0m0-6h0m0 39h0m0-2h0m0-37h0m1-3h0m0-8h0m0 4h0m0-6h0m0 6h0m0 0h0m0 7h0m1-5h0m0 27h0m0-24h0m0-11h0m0 17h0m0-9h0m0-2h0m0 4h0m1-15h0m0 36h0m0-11h0m0 11h0m0 11h0m0-5h0m0-2h0m1 0h0m0-4h0m0-21h0m0 0h0m0 10h0m0 0h0m0 21h0m1-35h0m0 44h0m0 0h0m0 2h0m0-8h0m0-2h0m0 4h0m1-13h0m0-25h0m0 9h0m0 18h0m0-27h0m0 14h0m0-20h0m1 0h0m0 11h0m0 17h0m0-19h0m0 11h0m0 6h0m0 13h0m1-2h0m0 2h0m0-8h0m0 0h0m0-22h0m0 44h0m0-25h0m1-11h0m0 27h0m0 11h0m0-26h0m0 15h0m0-22h0m0 9h0m0-2h0m1 2h0m0-9h0m0-13h0m0 4h0m0 5h0m0 8h0m0-22h0m1 5h0m0-9h0m0-2h0m0 31h0m0-42h0m0 44h0m0-36h0m1 34h0m0-29h0m0 6h0m0 16h0m0-18h0m0 0h0m1-9h0m0-2h0m0-2h0m0 11h0m0-13h0m0 19h0m0 5h0m0-22h0m1 35h0m0 2h0m0-30h0m0 15h0m0-11h0m0 4h0m0-4h0m1-18h0m0 20h0m0-26h0m0 15h0m0-17h0m0 4h0m1 2h0m0 22h0m1-2h0m0 0h0m0 6h0m0-15h0m0 9h0m0 26h0m0-24h0m1 20h0m0 0h0m0-20h0m0 27h0m0-5h0m0 18h0m0-29h0m1 7h0m0-2h0m0 2h0m0 18h0m0-5h0m0-7h0m0-8h0m1 20h0m0-1h0m0 9h0m0 3h0m0-23h0m0 7h0m0 7h0m1-11h0m0-3h0m0 7h0m0-7h0m0 0h0m0 5h0m0 2h0m0 15h0m1-11h0m0 14h0m0-3h0m0-13h0m0-8h0m0 8h0m1 2h0m0-15h0m0 2h0m0-11h0m0-13h0m0 4h0m0-8h0m0-1h0m1 7h0m0-9h0m0-20h0m0 5h0m0-4h0m0 4h0m1-4h0m0 2h0m0 26h0m0 9h0m0-4h0m0-3h0m0 7h0m1 11h0m0-15h0m0-14h0m0 7h0m0 4h0m0 14h0m0-16h0m1 11h0m0-7h0m0 3h0m0-7h0m0-9h0m0 7h0m0 22h0m1 5h0m0 15h0m0-18h0m0 22h0m0-28h0m0 6h0m0 11h0m0 11h0m1 2h0m0 3h0m0-3h0m0-15h0m0-11h0m0 4h0m1-10h0m0-5h0m0 0h0m0 16h0m0 8h0m0-4h0m0-15h0m0-10h0m1-2h0m0 7h0m0-5h0m0 14h0m0-4h0m0 2h0m0-3h0m1 20h0m0 0h0m0-8h0m0 21h0m0-19h0m0-18h0m0 35h0m1-37h0m0 35h0m0-7h0m0-10h0m0 10h0m0-11h0m0 1h0m1-20h0m0 8h0m0 9h0m0-18h0m0-4h0m0-2h0m0 22h0m1 11h0m0-9h0m0-15h0m0-11h0m0 35h0m0 16h0m0-14h0m1-15h0m0 24h0m0 0h0m0-2h0m0-5h0m0-22h0m0 12h0m1-21h0m0 23h0m0 2h0m0 13h0m0-13h0m0-4h0m0 6h0m1 13h0m0-39h0m0 33h0m0-16h0m0 14h0m0-32h0m0 34h0m1-11h0m0 6h0m0-17h0m0 31h0m0-23h0m0-2h0m0 2h0m0 7h0m1 0h0m0-4h0m0 9h0m0-5h0m0 2h0m0-4h0m0-2h0m1 13h0m0 7h0m0-16h0m0-20h0m0 18h0m0-2h0m0-9h0m1-4h0m0 10h0m0 16h0m0-18h0m0-4h0m0 6h0m0-24h0m1 13h0m0-8h0m0 8h0m0 27h0m0 2h0m0-15h0m0-11h0m1-12h0m0 9h0m0 18h0m0 5h0m0-16h0m0-18h0m0 18h0m1-2h0m0 2h0m0 15h0m0 14h0m0 6h0m0-9h0m0-24h0m0 13h0m1 0h0m0 18h0m0-22h0m0 18h0m0-24h0m0 8h0m1 9h0m0 2h0m0-9h0m0 25h0m0-25h0m0-19h0m0 15h0m1 33h0m0-29h0m0-19h0m0 6h0m0 18h0m0-7h0m0 16h0m0 0h0m1 2h0m0-9h0m0-2h0m0-18h0m0 3h0m0 4h0m0-25h0m1 10h0m0 13h0m0-20h0m0-13h0m0 20h0m0-7h0m0 11h0m1-27h0m0 18h0m0-9h0m0 20h0m0-29h0m0 16h0m0-13h0m1 24h0m0-2h0m0 0h0m0-40h0m0-4h0m0 21h0m0-4h0m1 18h0m0-13h0m0 26h0m0-22h0m0 13h0m0-26h0m0 22h0m1-7h0m0-9h0m0 44h0m0 0h0m0-33h0m0 11h0m0 33h0m1 0h0m0-35h0m0 16h0m0-7h0m0-6h0m0 2h0m0 24h0m0 0h0m1-9h0m0-2h0m0 4h0m0 2h0m0-2h0m0-15h0m0 31h0m1-3h0m0-11h0m0 1h0m0-3h0m0-19h0m0 13h0m0-2h0m1 2h0m0 17h0m0-4h0m0-4h0m0 6h0m0 4h0m0-21h0m1 2h0m0 0h0m0-2h0m0-11h0m0 11h0m0 11h0m0-11h0m1-11h0m0-3h0m0 7h0m0 26h0m0-6h0m0-11h0m0 6h0m1-2h0m0-17h0m0-3h0m0 3h0m0 8h0m0-29h0m0-4h0m0 7h0m1 28h0m0-10h0m0-10h0m0 1h0m0 4h0m0-11h0m0 24h0m1 16h0m0 2h0m0-22h0m0-4h0m0-7h0m0 2h0m0-5h0m1-6h0m0 11h0m0 18h0m0 9h0m0 8h0m0-20h0m1 9h0m0 14h0m0-9h0m0-3h0m0 11h0m0-2h0m0 7h0m0-27h0m1 23h0m0 2h0m0-47h0m0 11h0m0 27h0m0 9h0m0-2h0m1-9h0m0 0h0m0 4h0m0-17h0m0-3h0m0 7h0m0-9h0m1-9h0m0 9h0m0 15h0m0-6h0m0 17h0m0-26h0m0-6h0m1 2h0m0 4h0m0-18h0m0-6h0m0 15h0m0-11h0m0 14h0m0 2h0m1 22h0m0 0h0m0 6h0m0-2h0m0 4h0m0-2h0m1 0h0m0 16h0m0-13h0m0 6h0m0-26h0m0-7h0m0 31h0m0-15h0m1 15h0m0-13h0m0 0h0m0 15h0m0-17h0m0 4h0m1-5h0m0 1h0m0 10h0m0-2h0m0 2h0m0-2h0m0-8h0m1 6h0m0-7h0m0-15h0m0-9h0m0 3h0m0-1h0m0 20h0m0-20h0m1 11h0m0-17h0m0-2h0m0-7h0m0 2h0m0 0h0m0-17h0m1 6h0m0 9h0m0-13h0m0 2h0m0-5h0m0 3h0m0-11h0m1-2h0m0 22h0m0 6h0m0-4h0m0 17h0m0 3h0m0 4h0m1-7h0m0-13h0m0 13h0m0-8h0m0 33h0m0-3h0m0-6h0m1-25h0m0-6h0m0-9h0m0 2h0m0 34h0m0-9h0m0-11h0m1 19h0m0-24h0m0-15h0m0 0h0m0 13h0m0-7h0m0 9h0m0 4h0m1-2h0m0 0h0m0-15h0m0 7h0m0-16h0m0 4h0m1 18h0m0-9h0m0 9h0m0 0h0m0 11h0m0-13h0m1-4h0m0 11h0m0 15h0m0-11h0m0-5h0m0 32h0m0-14h0m1 0h0m0 2h0m0-6h0m0 2h0m0-4h0m0-2h0m0 13h0m1 2h0m0-20h0m0 4h0m0-2h0m0-18h0m0-4h0m0 27h0m1 13h0m0 13h0m0-2h0m0-18h0m0 25h0m0-3h0m0 2h0m1-2h0m0 9h0m0-9h0m0 11h0m0-2h0m0-17h0m0-1h0m1 9h0m0-17h0m0 35h0m0-9h0m0 0h0m0-20h0m0 22h0m1-22h0m0 18h0m0 13h0m0-6h0m0 6h0m0-15h0m0 8h0m0 3h0m1-9h0m0 6h0m0-26h0m0 29h0m0-25h0m0-4h0m1-20h0m0 5h0m0-18h0m0 27h0m0-23h0m0 16h0m0-2h0m0-20h0m1-13h0m0 10h0m0-8h0m0 11h0m0-7h0m0 20h0m0 18h0m1-7h0m0-13h0m0-7h0m0-2h0m0 16h0m0-29h0m0 17h0m1-22h0m0 11h0m0 7h0m0 7h0m0 15h0m0-46h0m0 13h0m1-7h0m0-6h0m0 9h0m0 6h0m0 18h0m0-5h0m0 2h0m1 7h0m0 0h0m0 7h0m0 7h0m0-11h0m0-7h0m0 6h0m1 18h0m0-7h0m0-2h0m0-15h0m0-2h0m0-1h0m0 12h0m1 0h0m0-3h0m0 34h0m0-18h0m0 11h0m0-13h0m0 0h0m1 4h0m0 9h0m0-2h0m0 2h0m0 15h0m0-15h0m0 9h0m0-2h0m1-23h0m0-11h0m0 20h0m0 2h0m0-4h0m0 22h0m0-7h0m1-10h0m0 15h0m0-27h0m0 16h0m0 4h0m0-17h0m0-9h0m1 2h0m0 13h0m0-31h0m0-8h0m0 4h0m0 11h0m0-9h0m1 13h0m0 20h0m0 2h0m0-17h0m0 15h0m0 3h0m0 4h0m1-5h0m0 9h0m0-6h0m0-25h0m0 33h0m0-24h0m0-13h0m0 13h0m1 20h0m0-28h0m0 22h0m0 2h0m0-20h0m0-7h0m1-7h0m0 20h0m0 0h0m0-8h0m0 22h0m0-11h0m0-11h0m0-20h0m1 2h0m0-2h0m0-18h0m0 35h0m0-13h0m0 0h0m0-24h0m1-4h0m0 6h0m0-4h0m0 40h0m0-3h0m0-18h0m0-4h0m1-9h0m0 14h0m0 8h0m0 27h0m0-27h0m0 11h0m0-31h0m1 11h0m0 5h0m0-5h0m0 9h0m0 9h0m0 7h0m0-5h0m1 16h0m0-40h0m0 7h0m0-2h0m0-7h0m0 2h0m0 5h0m1 39h0m0-28h0m0 4h0m0-2h0m0 20h0m0 8h0m0 5h0m0-22h0m1 6h0m0-19h0m0 0h0m0-11h0m0 15h0m0 2h0m1 3h0m0-10h0m0 10h0m0 15h0m0-2h0m0-9h0m0-4h0m0 2h0m1 22h0m0-11h0m0-22h0m0 15h0m0 9h0m0-9h0m1-4h0m0 9h0m0 17h0m0-13h0m0 2h0m0-20h0m0-17h0m1 28h0m0-4h0m0 11h0m0-22h0m0 9h0m0 2h0m0 11h0m0-13h0m1 0h0m0-14h0m0 33h0m0-15h0m0 26h0m0 5h0m0-16h0m1 16h0m0-7h0m0 0h0m0-20h0m0 5h0m0 6h0m0-4h0m1-2h0m0 7h0m0-5h0m0-29h0m0 23h0m0-1h0m0-10h0m1 15h0m0 9h0m0-13h0m0 2h0m0 4h0m0-6h0m0-36h0m1 2h0m0-6h0m0-3h0m0-6h0m0-2h0m0-2h0m0 19h0m1 9h0m0-17h0m0-7h0m0-4h0m0 26h0m0 2h0m0 24h0m0-4h0m1 4h0m0-6h0m0 13h0m0 7h0m0-2h0m0-16h0m0-16h0m1-15h0m0 7h0m0-3h0m0 1h0m0 17h0m0 2h0m0 12h0m1-16h0m0-11h0m0 0h0m0-2h0m0 2h0m0 0h0m0 7h0m1 6h0m0 9h0m0 11h0m0 4h0m0 20h0m0-2h0m0-11h0m1 2h0m0-4h0m0-9h0m0 4h0m0 5h0m0 11h0m0 4h0m1-30h0m0 15h0m0-11h0m0-13h0m0 24h0m0-16h0m0 22h0m1-11h0m0-21h0m0 11h0m0 10h0m0-21h0m0 0h0m0-12h0m1-20h0m0 1h0m0 6h0m0 7h0m0-3h0m0 5h0m1 2h0m0 0h0m0-20h0m0 3h0m0 4h0m0 11h0m1-7h0m0 20h0m0-29h0m0 23h0m0-11h0m0-1h0m0 27h0m1-16h0m0 23h0m0-22h0m0 11h0m0-2h0m0 2h0m0-12h0m1 18h0m0-6h0m0 22h0m0-27h0m0-2h0m0-5h0m0 23h0m1 0h0m0 0h0m0 20h0m0-22h0m0-27h0m0 40h0m0-45h0m1 12h0m0 11h0m0 2h0m0 28h0m0-4h0m0-33h0m0-13h0m1 44h0m0-20h0m0 0h0m0-7h0m0 14h0m0-5h0m0-6h0m1 0h0m0-20h0m0 50h0m0-35h0m0 24h0m0-8h0m0-22h0m0 17h0m1-13h0m0 33h0m0-31h0m0 27h0m0-14h0m0 1h0m0-1h0m1 11h0m0-6h0m0-35h0m0 15h0m0-11h0m0 11h0m0-15h0m1 19h0m0 14h0m0 6h0m0-11h0m0 18h0m0-2h0m0-38h0m1 13h0m0 0h0m0 11h0m0-2h0m0-17h0m0 31h0m0 10h0m1-30h0m0 22h0m0-18h0m0-29h0m0-4h0m0 9h0m0 17h0m1 12h0m0-14h0m0 11h0m0-22h0m0 18h0m0-14h0m0 5h0m1-26h0m0 44h0m0-38h0m0 16h0m0-18h0m0 31h0m0-22h0m1 22h0m0-13h0m0-18h0m0 4h0m0 38h0m0 2h0m0-20h0m1 18h0m0-24h0m0 6h0m0 27h0m0-3h0m0 7h0m0 0h0m0-20h0m1 5h0m0 4h0m0 22h0m0-13h0m0 7h0m0-12h0m0 9h0m1-17h0m0 20h0m0 15h0m0 0h0m0-26h0m0-14h0m1 16h0m0 4h0m0-20h0m0-6h0m0-2h0m0 26h0m0-27h0m0 16h0m1 2h0m0-22h0m0-7h0m0 14h0m0-3h0m0-9h0m0 21h0m1-5h0m0-16h0m0-11h0m0 27h0m0 7h0m0 9h0m0-5h0m1 15h0m0-8h0m0-2h0m0-1h0m0-2h0m0 0h0m0-15h0m1 6h0m0 9h0m0-19h0m0-1h0m0-2h0m0 7h0m0 6h0m0 0h0m1 14h0m0-14h0m0-8h0m0 13h0m0-7h0m0-11h0m1-20h0m0 9h0m0 13h0m0 14h0m0-3h0m0-17h0m0 11h0m0-14h0m1-6h0m0 26h0m0-19h0m0 6h0m0-17h0m0 0h0m0 8h0m1-2h0m0 0h0m0 7h0m0 7h0m0-3h0m0 18h0m0-9h0m1 35h0m0-37h0m0 7h0m0-16h0m0 20h0m0-7h0m0-13h0m1 4h0m0 3h0m0 0h0m0-5h0m0 14h0m0-3h0m0 3h0m1-16h0m0-5h0m0 5h0m0-13h0m0-3h0m0-17h0m0 9h0m1 2h0m0-15h0m0 2h0m1 4h0m0-4h0m0 35h0m0-11h0m0 2h0m1-2h0m0 13h0m0 13h0m0-26h0m0 4h0m0 9h0m1 5h0m0-5h0m0 7h0m0-7h0m0-15h0m0 29h0m0-5h0m0 20h0m1-26h0m0 15h0m0-7h0m0-13h0m0-9h0m0-13h0m0 9h0m1 18h0m0-3h0m0-17h0m0 35h0m0-15h0m0 0h0m0 6h0m1-26h0m0 28h0m0-15h0m0-13h0m0 2h0m0 18h0m0-18h0m1-5h0m0 9h0m0-17h0m0 2h0m0 28h0m0-4h0m0 11h0m1-2h0m0 9h0m0 2h0m0-5h0m0 3h0m0 0h0m0-16h0m1 2h0m0 1h0m0-10h0m0 7h0m0 11h0m0 5h0m0-7h0m1 5h0m0 0h0m0-27h0m0 15h0m0 18h0m0-20h0m0 0h0m0 22h0m1-13h0m0-24h0m0 33h0m0-16h0m0 3h0m0-7h0m0 13h0m1-17h0m0 17h0m0-13h0m0-5h0m0 31h0m0-33h0m0 22h0m1-13h0m0 7h0m0 6h0m0-17h0m0-7h0m0 4h0m1 1h0m0 11h0m0 22h0m0-14h0m0 11h0m0-26h0m0 26h0m0-33h0m1 45h0m0-22h0m0 24h0m0-20h0m0 13h0m0-29h0m0-15h0m1-2h0m0 17h0m0-15h0m0 27h0m0-21h0m0-6h0m0 29h0m1-14h0m0 1h0m0-1h0m0-4h0m0 29h0m0-29h0m0 15h0m1 3h0m0-14h0m0 22h0m0-21h0m0-1h0m0 1h0m0-3h0m1 7h0m0 7h0m0 2h0m0-31h0m0-5h0m0 11h0m0-9h0m1 5h0m0-15h0m0 13h0m0-9h0m0 2h0m0 13h0m0-17h0m0 13h0m1 16h0m0-18h0m0-3h0m0 32h0m0-21h0m0 5h0m0-13h0m1 22h0m0-5h0m0 7h0m0 2h0m0 2h0m0 0h0m0 11h0m1-2h0m0-33h0m0 42h0m0 2h0m0-6h0m0-18h0m0-6h0m1 19h0m0-8h0m0-14h0m0 35h0m0-24h0m0 11h0m0 3h0m1 10h0m0-15h0m0-9h0m0 7h0m0 6h0m0-2h0m0 5h0m1-27h0m0-2h0m0 7h0m0-5h0m0 3h0m0 22h0m0 10h0m1-30h0m0-11h0m0 0h0m0-14h0m0 14h0m0-5h0m0 14h0m0-3h0m1 13h0m0-8h0m0-23h0m0 29h0m0 7h0m0 11h0m0-24h0m1 8h0m0-28h0m0 2h0m0-15h0m0 13h0m0 11h0m0 13h0m1-6h0m0-7h0m0 18h0m0-21h0m0 14h0m0-14h0m0 10h0m1-14h0m0 14h0m0-7h0m0 4h0m0-7h0m0 7h0m0-20h0m1 20h0m0-13h0m0-2h0m0-18h0m0 4h0m0 18h0m0 11h0m1 7h0m0-24h0m0 26h0m0-26h0m0 2h0m0 9h0m0 19h0m1 9h0m0 3h0m0-12h0m0-2h0m0 24h0m0-39h0m0 28h0m1-21h0m0 13h0m0 9h0m0 10h0m0 1h0m0 4h0m0-4h0m1-29h0m0 26h0m0-9h0m0 0h0m0-13h0m0 16h0m0-11h0m1-20h0m0-5h0m0-2h0m0-9h0m0 3h0m0 8h0m0-9h0m0 3h0m1-11h0m0-2h0m0 6h0m0-17h0m0 0h0m1 2h0m0 6h0m0 5h0m0 15h0m1 7h0m0-3h0m0-11h0m0 14h0m0-7h0m0 5h0m0-5h0m1 4h0m0-6h0m0 9h0m0-7h0m0 5h0m0 11h0m0-14h0m1 12h0m0-1h0m0 0h0m0 3h0m0-11h0m0-18h0m0 6h0m1-8h0m0 4h0m0 9h0m0-16h0m0 11h0m0-2h0m0 9h0m0-6h0m1 39h0m0-4h0m0 4h0m0 0h0m0 5h0m0-2h0m1-1h0m0-17h0m0 11h0m0-15h0m0-21h0m0 29h0m0 11h0m1-9h0m0-17h0m0-3h0m0-10h0m0 20h0m0 10h0m0-17h0m0 2h0m1-11h0m0 9h0m0 0h0m0 13h0m0 5h0m0-5h0m0 5h0m1-1h0m0 12h0m0-1h0m0 1h0m0-12h0m0-13h0m0 5h0m1 4h0m0-11h0m0 0h0m0 24h0m0-9h0m0 11h0m0 0h0m1 7h0m0-29h0m0 20h0m0 3h0m0 2h0m0-14h0m0-15h0m1 5h0m0-3h0m0 0h0m0 7h0m0 17h0m0-6h0m0 2h0m1 4h0m0 7h0m0-6h0m0-12h0m0 14h0m0 4h0m0-9h0m1 3h0m0-18h0m0-25h0m0 0h0m0 12h0m0 8h0m0-6h0m1 15h0m0 3h0m0 11h0m0-1h0m0-26h0m0 20h0m0 6h0m0-4h0m1 2h0m0 0h0m0-6h0m0-3h0m0 14h0m0-11h0m0-3h0m1 12h0m0-9h0m0 4h0m0-7h0m0 1h0m0-1h0m0-19h0m1 37h0m0-38h0m0 18h0m0-17h0m0-7h0m0 6h0m0 45h0m1-36h0m0-8h0m0 8h0m0-4h0m0-4h0m0 26h0m0 4h0m1-22h0m0 18h0m0-26h0m0-7h0m0 22h0m0 0h0m0-6h0m1 19h0m0 2h0m0-10h0m0-20h0m0 22h0m0-9h0m0-14h0m1-13h0m0 0h0m0 3h0m0 10h0m0 12h0m0-3h0m0-19h0m1 15h0m0-11h0m0 27h0m0-1h0m0-20h0m0-8h0m0 20h0m0-5h0m1 13h0m0 3h0m0-3h0m0-4h0m0-11h0m0 16h0m1-21h0m0 9h0m0 11h0m0 3h0m0-11h0m0-11h0m0 17h0m1-17h0m0 20h0m0 10h0m0-8h0m0-2h0m0-20h0m0 2h0m0-7h0m1-2h0m0-7h0m0-4h0m0 4h0m0 22h0m0 12h0m0-9h0m1 11h0m0-7h0m0-11h0m0 2h0m0-17h0m0 13h0m0-13h0m1 4h0m0 18h0m0-14h0m0 3h0m0 4h0m0-4h0m0-3h0m1 5h0m0 2h0m0 16h0m0-5h0m0 13h0m0-35h0m0 9h0m1 0h0m0-5h0m0 34h0m0-38h0m0 29h0m0-20h0m0 4h0m1 22h0m0-8h0m0 6h0m0-22h0m0-2h0m0 0h0m0-18h0m1 5h0m0 2h0m0-2h0m0 2h0m0 20h0m0-12h0m0-24h0m0 22h0m1-4h0m0-4h0m0 10h0m0 0h0m0-19h0m0 24h0m0-7h0m1-2h0m0-18h0m0 29h0m0-7h0m0 7h0m0-2h0m0-9h0m1 0h0m0-11h0m0 22h0m0-22h0m0 15h0m0 7h0m0 0h0m1 29h0m0-22h0m0-4h0m0-7h0m0 15h0m0 9h0m0-6h0m1 11h0m0-7h0m0-2h0m0 8h0m0-11h0m0-13h0m0 18h0m1 13h0m0-2h0m0-16h0m0 25h0m0 0h0m0 2h0m0-24h0m1 8h0m0 3h0m0 11h0m0-7h0m0-9h0m0-17h0m0-18h0m1 0h0m0 6h0m0 5h0m0-15h0m0 19h0m0 1h0m0 17h0m1-2h0m0-16h0m0 9h0m0 14h0m0-3h0m0-2h0m0 5h0m0-1h0m1 0h0m0 7h0m0 7h0m0-3h0m0-42h0m0 20h0m0 16h0m1-5h0m0-8h0m0-3h0m0-19h0m0 4h0m0-11h0m0 22h0m1-11h0m0-9h0m0 2h0m0 3h0m0 0h0m0-5h0m0-2h0m1 29h0m0 11h0m0-13h0m0 11h0m0-16h0m0 7h0m0-31h0m0 22h0m1 9h0m0 0h0m0-22h0m0 4h0m0 13h0m0-29h0m1 16h0m0-5h0m0-11h0m0 16h0m0 2h0m0-2h0m0 15h0m1-11h0m0-22h0m0-2h0m0 9h0m0-13h0m0 0h0m0-9h0m1 7h0m0-9h0m0 9h0m0 0h0m0 6h0m0 0h0m0-6h0m0 8h0m1 11h0m0 2h0m0 12h0m0-16h0m0 16h0m0 4h0m1-9h0m0-11h0m0 9h0m0-5h0m0 18h0m0 25h0m0-7h0m0 6h0m1-11h0m0 0h0m0-13h0m0-17h0m0 19h0m0 0h0m0 18h0m1-6h0m0-12h0m0 7h0m0 0h0m0 2h0m0 2h0m0-6h0m1-5h0m0 3h0m0 4h0m0-20h0m0-18h0m0 1h0m0 15h0m1 7h0m0-20h0m0 9h0m0 26h0m0-18h0m0-13h0m0 27h0m1 9h0m0-12h0m0-26h0m0 27h0m0 10h0m0 0h0m0-19h0m0-7h0m1 5h0m0-20h0m0 17h0m0 2h0m0-9h0m0 21h0m1-12h0m0 9h0m0-20h0m0-6h0m0 0h0m0 9h0m0-9h0m0 11h0m1-11h0m0 15h0m0-15h0m0-3h0m0 16h0m0 0h0m0-7h0m1 14h0m0 15h0m0-20h0m0 0h0m0 18h0m0 4h0m0-22h0m1-6h0m0-9h0m0 2h0m0 22h0m0-26h0m0 19h0m0-8h0m1 13h0m0-14h0m0-6h0m0 4h0m0 3h0m0-9h0m0 24h0m1-13h0m0 13h0m0-20h0m0-11h0m0 15h0m0 12h0m0-9h0m1 13h0m0-6h0m0-7h0m0-14h0m0-19h0m0 4h0m0 5h0m1 15h0m0-7h0m0 13h0m0-6h0m0 2h0m0-17h0m1 24h0m0-14h0m0-6h0m0 2h0m0-11h0m0 20h0m0-20h0m1 4h0m0 23h0m0-16h0m0-4h0m0 4h0m0 7h0m0 6h0m1 0h0m0 12h0m0-27h0m0 7h0m0 17h0m0 9h0m0-7h0m1 11h0m0-6h0m0 4h0m0 0h0m0 0h0m0 2h0m0 9h0m1-20h0m0-22h0m0 5h0m0-3h0m0 12h0m0 2h0m0 15h0m1-31h0m0 13h0m0-4h0m0 2h0m0-9h0m0 0h0m0 12h0m1-9h0m0 8h0m0-2h0m0 5h0m0 15h0m0-13h0m0-13h0m1 6h0m0-8h0m0-14h0m0-4h0m0 7h0m0 19h0m0-20h0m0 1h0m1 33h0m0 0h0m0-5h0m0-2h0m0-26h0m0-1h0m1 7h0m0 4h0m0 1h0m0 4h0m0 27h0m0-18h0m0 24h0m0-27h0m1 1h0m0 15h0m0 20h0m0 6h0m0-13h0m0 16h0m0-20h0m1 4h0m0 9h0m0-7h0m0 18h0m0-26h0m0 19h0m0 1h0m1-12h0m0 9h0m0-17h0m0 28h0m0 2h0m0-41h0m0 13h0m1 11h0m0 0h0m0-7h0m0-8h0m0-12h0m0 22h0m0-17h0m1 29h0m0-33h0m0 13h0m0-5h0m0 11h0m0 3h0m0-14h0m1 27h0m0-11h0m0-16h0m0 7h0m0 9h0m0-3h0m0 1h0m0-5h0m1-15h0m0 20h0m0-9h0m0-5h0m0-11h0m0-13h0m1-7h0m0 9h0m0 18h0m0 15h0m0-20h0m0 5h0m0 4h0m0-2h0m1-13h0m0 22h0m0-2h0m0 6h0m0-13h0m0 7h0m0 15h0m1-33h0m0 26h0m0-31h0m0 3h0m0-9h0m0 16h0m0 17h0m1-37h0m0 35h0m0-9h0m0-2h0m0-22h0m0 0h0m0 2h0m1 29h0m0 19h0m0-22h0m0-10h0m0 11h0m0-12h0m0 12h0m1-7h0m0 2h0m0-16h0m0 25h0m0-15h0m0 8h0m0-11h0m0 14h0m1-9h0m0 13h0m0-15h0m0 19h0m0-24h0m0 0h0m1 0h0m0 5h0m0-1h0m0-11h0m0 7h0m0 24h0m0-24h0m0 5h0m1 19h0m0-26h0m0 24h0m0-6h0m0-3h0m0-13h0m0-7h0m1-17h0m0 4h0m0 22h0m0 7h0m0 0h0m0-13h0m0 19h0m1-19h0m0-5h0m0-13h0m0 6h0m0-2h0m0 7h0m0 13h0m1 2h0m0 16h0m0-7h0m0-24h0m0 20h0m0 0h0m0-13h0m1 11h0m0-2h0m0-9h0m0 9h0m0 8h0m0-2h0m0-16h0m1 31h0m0-8h0m0 11h0m0-24h0m0 28h0m0-28h0m0 28h0m1-29h0m0 18h0m0 2h0m0-31h0m0 31h0m0 9h0m0-4h0m1-27h0m0 2h0m0 18h0m0-4h0m0-11h0m0-3h0m0 1h0m0 10h0m1-13h0m0 11h0m0-11h0m0 7h0m0 22h0m0 4h0m0-20h0m1 16h0m0-9h0m0 0h0m0 9h0m0-16h0m0 7h0m0 20h0m1-2h0m0-14h0m0 1h0m0-11h0m0-12h0m0 16h0m0 2h0m1-29h0m0 40h0m0-2h0m0-22h0m0-5h0m0 9h0m0 5h0m1-36h0m0 18h0m0-7h0m0 23h0m0 11h0m0-5h0m0 11h0m1-2h0m0 6h0m0-33h0m0 16h0m0-9h0m0 16h0m0-5h0m1-4h0m0-13h0m0 17h0m0-24h0m0 18h0m0-7h0m0 13h0m0 9h0m1 7h0m0-1h0m0-22h0m0 9h0m0-22h0m0-7h0m1 5h0m0 22h0m0-24h0m0-11h0m0 17h0m0 20h0m0-22h0m0-2h0m1 26h0m0 7h0m0 9h0m0-9h0m0 4h0m0-15h0m0-2h0m1-5h0m0 22h0m0-22h0m0-2h0m0 3h0m0 6h0m0 11h0m1 16h0m0-5h0m0-18h0m0-4h0m0-9h0m0 5h0m0 11h0m1-18h0m0-11h0m0 4h0m0 5h0m0 11h0m0-25h0m0 3h0m1 4h0m0 24h0m0-21h0m0 4h0m0-11h0m0-13h0m0 11h0m1 2h0m0 4h0m0-7h0m0 5h0m0-16h0m0 36h0m0-5h0m1 3h0m0 42h0m0-16h0m0-2h0m0 0h0m0 13h0m0-6h0m1 15h0m0-5h0m0-2h0m0 20h0m0-20h0m0 11h0m1-6h0m0 6h0m0 2h0m0-8h0m0-9h0m0 24h0m1-4h0m0-5h0m0-11h0m0-2h0m0 16h0m0-20h0m0 11h0m0-13h0m1 4h0m0-18h0m0 11h0m0-4h0m0 2h0m1 13h0m0-17h0m0 19h0m0 9h0m0-13h0m0-7h0m0 11h0m1-21h0m0 6h0m0 9h0m0 2h0m0-15h0m0 8h0m0 7h0m1 2h0m0 5h0m0-5h0m0-8h0m0 2h0m0 8h0m1-2h0m0-6h0m0-7h0m0-2h0m0 9h0m0-9h0m1 7h0m0 2h0m0-3h0m0-2h0m0-20h0m0 11h0m0 9h0m1 0h0m0 0h0m0 24h0m0-26h0m0 7h0m0 0h0m0-11h0m1 0h0m0 0h0m0 6h0m0 5h0m0 0h0m0 2h0m1 0h0m0 7h0m0-11h0m0-7h0m0 4h0m0 5h0m1 8h0m0 3h0m0-5h0m0 7h0m0-7h0m0 16h0m0-14h0m1 9h0m0-8h0m0-3h0m0 14h0m0 10h0m0-22h0m1 3h0m0-16h0m0 13h0m0-6h0m0 7h0m0-7h0m0-9h0m1 9h0m0-22h0m0 2h0m0-7h0m0 1h0m0 6h0m0 26h0m1-4h0m0-6h0m0-1h0m0 7h0m0 16h0m0 6h0m1 11h0m0-11h0m0-40h0m0 1h0m0 2h0m0 6h0m0-6h0m1-7h0m0 26h0m0 0h0m0-8h0m0 13h0m0-11h0m1 24h0m0-9h0m0-8h0m0 13h0m0-24h0m0 11h0m0-20h0m1-3h0m0-8h0m0 11h0m0 9h0m0 0h0m0 15h0m1 7h0m0-9h0m0-2h0m0 4h0m0-9h0m0-4h0m1 19h0m0-10h0m0 11h0m0-9h0m0-14h0m0 12h0m0 6h0m1-4h0m0 0h0m0-11h0m0-9h0m0 28h0m0 5h0m1-15h0m0 13h0m0 4h0m0-7h0m0 11h0m0-15h0m0-4h0m1 6h0m0 2h0m0-6h0m0 7h0m0 0h0m0 4h0m0 4h0m1-17h0m0 0h0m0 2h0m0 0h0m0 15h0m0 0h0m1-9h0m0-4h0m0 0h0m0-7h0m0 3h0m0-7h0m1 2h0m0 3h0m0-1h0m0 18h0m0 9h0m0-33h0m0 11h0m1 15h0m0-4h0m0-4h0m0 4h0m0-13h0m0 9h0m1-3h0m0 20h0m0-17h0m0 4h0m0 0h0m0-11h0m1 2h0m0 5h0m0 2h0m0 9h0m0-3h0m0 5h0m0-7h0m1 11h0m0-13h0m0-22h0m0 24h0m0-6h0m0-20h0m0 8h0m1-8h0m0 13h0m0 0h0m0 13h0m0-6h0m0-1h0m1-6h0m0-2h0m0 4h0m0-6h0m0 10h0m0-17h0m0 17h0m1-2h0m0-9h0m0-2h0m0 3h0m0-16h0m0 18h0m1 6h0m0 7h0m0-5h0m0 11h0m0-8h0m0 4h0m0 15h0m1-17h0m0-2h0m0-3h0m0-6h0m0-5h0m0 9h0m1-17h0m0-25h0m0 18h0m0 20h0m0-16h0m0-4h0m1 9h0m0 4h0m0 13h0m0 3h0m0-5h0m0-28h0m0 17h0m1-4h0m0-11h0m0 15h0m0 11h0m0-31h0m0 20h0m0 22h0m1-4h0m0 15h0m0-11h0m0-22h0m0 3h0m1-20h0m0 30h0m0 1h0m0 8h0m0 5h0m0-14h0m0-4h0m0-7h0m1 5h0m0 6h0m0 5h0m0-11h0m0 7h0m1 6h0m0 5h0m0-3h0m0 7h0m0-27h0m0 1h0m0 2h0m0 9h0m1 10h0m0-10h0m0 2h0m0-13h0m0 11h0m0 4h0m1 6h0m0-19h0m0-11h0m0 19h0m6 5h0m0 4h0m0-6h0m0-5h0m0 2h0m1 29h0m0-24h0m0-15h0m0 10h0m0 5h0m0-13h0m0 13h0m1-7h0m0 0h0m0 7h0m0 9h0m0 4h0m0-2h0m0-2h0m1-5h0m0 18h0m0 0h0m0-7h0m0-6h0m1 2h0m0-9h0m0-11h0m0 11h0m0 11h0m0 20h0m0-24h0m1 6h0m0-11h0m0-4h0m0 2h0m0 4h0m0-6h0m0 13h0m1-4h0m0 2h0m0 6h0m0 7h0m0 4h0m0-26h0m1-7h0m0-15h0m0 13h0m0 13h0m0 3h0m0-3h0m0-17h0m1-2h0m0 15h0m0-7h0m0 0h0m0 27h0m0-9h0m1-11h0m0 11h0m0-11h0m0 24h0m0-9h0m0-19h0m0 9h0m1-11h0m0 2h0m0-2h0m0-1h0m0 11h0m0 9h0m1-6h0m0 19h0m0 9h0m0-15h0m0 11h0m0-38h0m0-8h0m1 15h0m0 20h0m0-27h0m0 16h0m0-4h0m0-9h0m1-2h0m0 6h0m0 29h0m0-11h0m0-25h0m0-6h0m0 13h0m1 11h0m0-2h0m0 4h0m0-19h0m0-20h0m0 37h0m1 11h0m0 2h0m0-20h0m0 14h0m0-7h0m0-20h0m1 3h0m0-14h0m0 11h0m0 9h0m0 4h0m0-13h0m0 7h0m1-9h0m0 11h0m0 18h0m0-11h0m0-7h0m0-9h0m1 11h0m0 20h0m0-20h0m0 7h0m0 7h0m0-14h0m0-6h0m1-7h0m0 4h0m0 12h0m0 11h0m0-9h0m0 17h0m0-11h0m1 22h0m0-37h0m0 6h0m0-6h0m0 18h0m0-7h0m1 2h0m0 13h0m0-15h0m0-15h0m0 10h0m0 7h0m1-17h0m0 15h0m0-9h0m0 13h0m0-2h0m0 4h0m0 11h0m1-6h0m0-13h0m0 2h0m0-15h0m0 15h0m0-11h0m1-5h0m0 9h0m0 7h0m0 15h0m0-4h0m0-4h0m1-11h0m0 4h0m0-2h0m0 13h0m0 0h0m0 11h0m0-2h0m0-14h0m1 1h0m0 13h0m0-11h0m0 0h0m0-13h0m1 13h0m0 0h0m0-13h0m0 4h0m0 7h0m0-3h0m0-2h0m1 2h0m0-17h0m0 2h0m0 7h0m0-11h0m0 17h0m1 5h0m0-9h0m0-2h0m0-1h0m0 12h0m0-18h0m1 0h0m0 24h0m0-11h0m0 15h0m0-13h0m0-19h0m0 10h0m1-4h0m0 18h0m0 6h0m0-33h0m0 3h0m0 17h0m1-2h0m0 13h0m0-13h0m0 11h0m0 11h0m0-13h0m0-2h0m1-18h0m0 9h0m0 2h0m0 11h0m0 6h0m0-11h0m0-11h0m1 1h0" stroke="#000" stroke-width="4.0" stroke-linecap="round" fill="none"/>
<path transform="translate(.5 .5)" d="M169 462h0m0 4h0m0-5h0m0 5h0m0-4h0m1 0h0m3 4h0m1-2h0m0 2h0m18-5h0m0 3h0m1 2h0m0-4h0m49 4h0m0-4h0m0 8h0m0-2h0m70 0h0m0-4h0m1 0h0m0-2h0m0 4h0m0-4h0m0 0h0m0-1h0m1 9h0m0-9h0m0 3h0m65 4h0m0 0h0m1-2h0m0 2h0m0 0h0m0 2h0m0-8h0m0 2h0m0 2h0m1 2h0m0 0h0m0 2h0m0-4h0m0 2h0m0-2h0m0-2h0m68 0h0m0 4h0m0-6h0m0-1h0m0 3h0m1 2h0m0-2h0m0-2h0m137 2h0m0 2h0m0-5h0m1 9h0m0-8h0m0 6h0m0-7h0m1 1h0m45 0h0m0 4h0m0-4h0m1 6h0m0-6h0m0 4h0m0 2h0m70 0h0m1 0h0m0 2h0m0-9h0m0 1h0m67 6h0m1-4h0m0-2h0m0 4h0m0 2h0m0-4h0m1 0h0m0 0h0m0-2h0m0 0h0m0 6h0m0-6h0m67 8h0m0-2h0m0-7h0m0 5h0m1 2h0m0-2h0m0-5h0m0 3h0m71 6h0m1-6h0m0 4h0m0 0h0m0 2h0m0 0h0m8-2h0m57-2h0m1-2h0m49 4h0m1 2h0m0 0h0m31 0h0m0-6h0m0 2h0m0-4h0m1 6h0m0-2h0m0-2h0m37 6h0m0-6h0m1 2h0m0-5h0m0 5h0m65 4h0m1-6h0m-958 110h0m62 27h0m67-24h0m152-7h0m3 2h0m27 8h0m18-12h0m0 3h0m71 70h0m73-42h0m78-19h0m39-1h0m141 8h0m13-9h0m8-3h0m111-7h0m10 17h0m11-1h0m34-9h0m38 49h0m45-53h0m42 61h0m11 8h0m12 9h0m-1100-208h0m68 9h0m70-2h0m1-1h0m136-4h0m256 1h0m137 5h0m325-2h0m1 3h0m-2 3h0m1 3h0m1 3h0m-2 3h0m1 3h0m2 3h0m-4 2h0m-65-12h0m0 4h0m-1 4h0m-927 1h0m1-6h0m-1 5h0m0-4h0m70-4h0m0-1h0m0 4h0m-1-3h0m71 6h0m0 2h0m-1-1h0m0-4h0m67-3h0m0 8h0m70 2h0m1-1h0m-1-1h0m1-1h0m184-2h0m1 1h0m0 0h0m0-7h0m71 2h0m-1 9h0m1-4h0m-1-6h0m70 5h0m-1 3h0m1-7h0m0 0h0m67 8h0m1-3h0m-1-7h0m0 6h0m259-1h0m-1-3h0m1 7h0m0-7h0m67 3h0m-1-2h0m1 3h0m-1 1h0m-975 3h0m396 1h0m326 0h0m9-2h0m57 2h0m51-1h0m32-1h0m-893 2h0" stroke="#ffa500" stroke-width="4.0" stroke-linecap="round" fill="none"/>
<path d="M181.1 660.9h5.8l-2.9 5.1z" fill="#ffa500"/>
<path d="M1153.1 660.9h5.8l-2.9 5.1z" fill="#ffa500"/>
<path d="M1244.1 660.9h5.8l-2.9 5.1z" fill="#ffa500"/>
<path d="M1260.1 660.9h5.8l-2.9 5.1z" fill="#ffa500"/>
<path d="M1262.1 660.9h5.8l-2.9 5.1z" fill="#ffa500"/>
<path d="M1285.1 660.9h5.8l-2.9 5.1z" fill="#ffa500"/>
<rect x="105.5" y="499.1" width="1256.0" height="48.6" fill="#f00" fill-opacity="0.1"/>
<rect x="162.4" y="499.1" width="1053.4" height="37.6" fill="#ffa500" fill-opacity="0.1"/>
<rect x="1215.8" y="565" width="4.1" height="32" fill="#ffa500" fill-opacity="0.1"/>
<rect x="1219.9" y="566.7" width="71" height="32" fill="#ffa500" fill-opacity="0.1"/>
<rect x="1290.9" y="582.7" width="12.2" height="27.3" fill="#ffa500" fill-opacity="0.1"/>
<path d="M162.4 518.5H1215.8M1215.8 580.5H1219.9M1219.9 583.5H1290.9M1290.9 596.5H1303.1" stroke="#ffa500" stroke-width="3" fill="none"/>
<line x1="105.5" x2="1361.5" y1="523" y2="523" stroke="#f00" stroke-width="2.08"/>
<line x1="162.0" x2="162.0" y1="666.5" y2="380.5" stroke="#800080" stroke-width="2.08" stroke-dasharray="2.08 3.44"/>
<line x1="1216.0" x2="1216.0" y1="666.5" y2="380.5" stroke="#800080" stroke-width="2.08" stroke-dasharray="2.08 3.44"/>
<line x1="1220.0" x2="1220.0" y1="666.5" y2="380.5" stroke="#800080" stroke-width="2.08" stroke-dasharray="2.08 3.44"/>
<line x1="1291.0" x2="1291.0" y1="666.5" y2="380.5" stroke="#800080" stroke-width="2.08" stroke-dasharray="2.08 3.44"/>
<line x1="1303.0" x2="1303.0" y1="666.5" y2="380.5" stroke="#800080" stroke-width="2.08" stroke-dasharray="2.08 3.44"/>
</g>
<rect x="105.5" y="380.5" width="1380.0" height="286.0" fill="none" stroke="#000" stroke-width="1.06"/>
<line x1="162.5" x2="162.5" y1="666.5" y2="671.9" stroke="#000" stroke-width="1"/>
<text x="162.4" y="686.6" text-anchor="middle">0</text>
<line x1="431.5" x2="431.5" y1="666.5" y2="671.9" stroke="#000" stroke-width="1"/>
<text x="430.9" y="686.6" text-anchor="middle">2000</text>
<line x1="699.5" x2="699.5" y1="666.5" y2="671.9" stroke="#000" stroke-width="1"/>
<text x="699.4" y="686.6" text-anchor="middle">4000</text>
<line x1="968.5" x2="968.5" y1="666.5" y2="671.9" stroke="#000" stroke-width="1"/>
<text x="967.8" y="686.6" text-anchor="middle">6000</text>
<line x1="1236.5" x2="1236.5" y1="666.5" y2="671.9" stroke="#000" stroke-width="1"/>
<text x="1236.3" y="686.6" text-anchor="middle">8000</text>
<line x1="105.5" x2="100.1" y1="641.5" y2="641.5" stroke="#000" stroke-width="1"/>
<text x="95.8" y="647.1" text-anchor="end">8.48</text>
<line x1="105.5" x2="100.1" y1="601.5" y2="601.5" stroke="#000" stroke-width="1"/>
<text x="95.8" y="606.4" text-anchor="end">8.50</text>
<line x1="105.5" x2="100.1" y1="560.5" y2="560.5" stroke="#000" stroke-width="1"/>
<text x="95.8" y="565.7" text-anchor="end">8.52</text>
<line x1="105.5" x2="100.1" y1="519.5" y2="519.5" stroke="#000" stroke-width="1"/>
<text x="95.8" y="525.1" text-anchor="end">8.54</text>
<line x1="105.5" x2="100.1" y1="479.5" y2="479.5" stroke="#000" stroke-width="1"/>
<text x="95.8" y="484.4" text-anchor="end">8.56</text>
<line x1="105.5" x2="100.1" y1="438.5" y2="438.5" stroke="#000" stroke-width="1"/>
<text x="95.8" y="443.7" text-anchor="end">8.58</text>
<line x1="105.5" x2="100.1" y1="397.5" y2="397.5" stroke="#000" stroke-width="1"/>
<text x="95.8" y="403.0" text-anchor="end">8.60</text>
<text x="795.5" y="372.2" text-anchor="middle" font-size="16.67px">Magnitude Estimates</text>
<text x="668.5" y="657.0">10273</text>
<text x="1196" y="637.0">56791</text>
<text x="1233" y="617.0">54902</text>
<text x="1275" y="657.0">54883</text>
<rect x="1365.4" y="387.5" width="113.2" height="48.0" rx="2.8" ry="2.8" fill="#fff" fill-opacity="0.8" stroke="#ccc" stroke-opacity="0.8" stroke-width="1.39"/>
<line x1="1370.6" x2="1398.4" y1="399.5" y2="399.5" stroke="#ffa500" stroke-width="2.78" stroke-linecap="square"/>
<text x="1409.9" y="403.8">mag<tspan font-style="italic" font-size="9.9px" x="1440.2" dy="2.2">OBSID</tspan></text>
<line x1="1370.6" x2="1398.4" y1="421.9" y2="421.9" stroke="#f00" stroke-width="2.08" stroke-linecap="square"/>
<text x="1409.0" y="426.7">mag</text>
<rect x="1348.5" y="613.3" width="130.1" height="46.0" rx="2.8" ry="2.8" fill="#fff" fill-opacity="0.8" stroke="#ccc" stroke-opacity="0.8" stroke-width="1.39"/>
<path transform="translate(.5 .5)" d="M1367 626h0" stroke="#ffa500" stroke-width="4.0" stroke-linecap="round" fill="none"/>
<text x="1393.0" y="629.8">Highlighted</text>
<path transform="translate(.5 .5)" d="M1367 647h0" stroke="#000" stroke-width="4.0" stroke-linecap="round" fill="none"/>
<text x="1393.0" y="650.8">OK</text>
<g clip-path="url(#c3)">
<line x1="105.5" x2="1485.5" y1="921.5" y2="921.5" stroke="#b0b0b0" stroke-width="1.11" stroke-dasharray="1.11 1.83"/>
<line x1="105.5" x2="1485.5" y1="889.5" y2="889.5" stroke="#b0b0b0" stroke-width="1.11" stroke-dasharray="1.11 1.83"/>
<line x1="105.5" x2="1485.5" y1="856.5" y2="856.5" stroke="#b0b0b0" stroke-width="1.11" stroke-dasharray="1.11 1.83"/>
<line x1="105.5" x2="1485.5" y1="823.5" y2="823.5" stroke="#b0b0b0" stroke-width="1.11" stroke-dasharray="1.11 1.83"/>
<line x1="105.5" x2="1485.5" y1="791.5" y2="791.5" stroke="#b0b0b0" stroke-width="1.11" stroke-dasharray="1.11 1.83"/>
<line x1="105.5" x2="1485.5" y1="758.5" y2="758.5" stroke="#b0b0b0" stroke-width="1.11" stroke-dasharray="1.11 1.83"/>
<line x1="105.5" x2="1485.5" y1="1009.5" y2="1009.5" stroke="#b0b0b0" stroke-width="1.11" stroke-dasharray="1.11 1.83"/>
<line x1="105.5" x2="1485.5" y1="983.5" y2="983.5" stroke="#b0b0b0" stroke-width="1.11" stroke-dasharray="1.11 1.83"/>
<line x1="105.5" x2="1485.5" y1="957.5" y2="957.5" stroke="#b0b0b0" stroke-width="1.11" stroke-dasharray="1.11 1.83"/>
<path transform="translate(.5 .5)" d="M162 1008h0m0-2h0m0 1h0m1 1h0m0 0h0m0-1h0m1 1h0m0-1h0m0 0h0m0 1h0m1-1h0m0 0h0m0 1h0m1-1h0m0 1h0m0-1h0m0 0h0m1 1h0m0-1h0m0 1h0m1-1h0m0 0h0m0 0h0m0 1h0m1-1h0m0 1h0m0-1h0m0 0h0m1 0h0m0 1h0m0-1h0m1 1h0m0-1h0m0 0h0m0 0h0m1 0h0m0 1h0m0-1h0m1 0h0m0 1h0m0-1h0m0 0h0m1 0h0m0 0h0m0-1h0m0 1h0m1 2h0m0-2h0m0 0h0m1 0h0m0 0h0m0 0h0m1 0h0m0 0h0m0 0h0m0 0h0m1 0h0m0 0h0m0 1h0m1-1h0m0 1h0m0 0h0m0-1h0m1 1h0m0-1h0m0 0h0m0 0h0m1 0h0m0 1h0m0-1h0m1 0h0m0 1h0m0-1h0m0 0h0m1 0h0m0 1h0m0-1h0m1 0h0m0 0h0m0-1h0m0 1h0m1 0h0m0 0h0m0 0h0m1 1h0m0 0h0m0-1h0m0 0h0m1-1h0m0 0h0m0 1h0m0 0h0m1 0h0m0 0h0m0 0h0m1 1h0m0-2h0m0 1h0m0 0h0m1 1h0m0-1h0m0 1h0m1 0h0m0-1h0m0 1h0m0-1h0m1 0h0m0 1h0m0 0h0m1-1h0m0 0h0m0 0h0m0-1h0m1 1h0m0 0h0m0 0h0m1 0h0m0 0h0m0 1h0m0 0h0m1-1h0m0 0h0m0 2h0m0-2h0m1 0h0m0-1h0m0 2h0m1-1h0m0 0h0m0 0h0m0 1h0m1-1h0m0 1h0m0-1h0m1 1h0m0-1h0m0 0h0m0 0h0m1 1h0m0 0h0m0-1h0m1 0h0m0 1h0m0-1h0m0 1h0m1-1h0m0 0h0m0 0h0m0 0h0m1 1h0m0-1h0m0-1h0m1 1h0m0 1h0m0-1h0m0 0h0m1 1h0m0-2h0m0 1h0m1 1h0m0-1h0m0 1h0m0-1h0m1 0h0m0 0h0m0 1h0m1-2h0m0 2h0m0 0h0m0-1h0m1 0h0m0 0h0m0 0h0m0 0h0m1 2h0m0-2h0m0 1h0m1 0h0m0-1h0m0 0h0m0 0h0m1 0h0m0 0h0m0 2h0m1-2h0m0 0h0m0 0h0m0 1h0m1 0h0m0-1h0m0 0h0m1 1h0m0-1h0m0 0h0m0 0h0m1 1h0m0 1h0m0-2h0m1 0h0m0 1h0m0 0h0m0-1h0m1 0h0m0 1h0m0-1h0m0 1h0m1-1h0m0 0h0m0 0h0m1 1h0m0-1h0m0 0h0m0 0h0m1 0h0m0 1h0m0-1h0m1 0h0m0 1h0m0-1h0m0 0h0m1 0h0m0 0h0m0 0h0m1 1h0m0 0h0m0 0h0m0-1h0m1 1h0m0-1h0m0 1h0m1-1h0m0 0h0m0 0h0m0 0h0m1 0h0m0 1h0m0 0h0m0-1h0m1-1h0m0 2h0m0-1h0m1 1h0m0-1h0m0 0h0m1 0h0m0 0h0m0 1h0m0-1h0m1 0h0m0 0h0m0 0h0m0 1h0m1-1h0m0 1h0m0-1h0m1 1h0m0 0h0m0-1h0m0 1h0m1 0h0m0-1h0m0 1h0m1-1h0m0 0h0m0 1h0m0-1h0m1 0h0m0 0h0m0 0h0m0 1h0m1-1h0m0 1h0m0 0h0m1-1h0m0 0h0m0 0h0m0 0h0m1 1h0m0 0h0m0 0h0m1 0h0m0-1h0m0 0h0m0-1h0m1 2h0m0-1h0m0 0h0m1 1h0m0 0h0m0 0h0m0-1h0m1 1h0m0-1h0m0 1h0m1-1h0m0 0h0m0 0h0m0 0h0m1 1h0m0-1h0m0 1h0m0 0h0m1-1h0m0 0h0m0 1h0m1-1h0m0 0h0m0 1h0m0-1h0m1 0h0m0 1h0m0-1h0m1 1h0m0-1h0m0 0h0m0 0h0m1 0h0m0 0h0m0 0h0m1 0h0m0 1h0m0-2h0m0 2h0m1-1h0m0 1h0m0 0h0m1-1h0m0 0h0m0 0h0m0 0h0m1 1h0m0 0h0m0-1h0m0 1h0m1-1h0m0 0h0m0 0h0m1 1h0m0-1h0m0 0h0m0 1h0m1 0h0m0 0h0m0-1h0m1 0h0m0 0h0m0 1h0m0-1h0m1 1h0m0-1h0m0 0h0m1 2h0m0-2h0m0 0h0m0 0h0m1 1h0m0-1h0m0 0h0m1 2h0m0-2h0m0 0h0m0 1h0m1-1h0m0 1h0m0 0h0m0 0h0m1 0h0m0-1h0m0 0h0m1 0h0m0 1h0m0-1h0m0 0h0m1 0h0m0 0h0m0 0h0m1 0h0m0 1h0m0 0h0m0 0h0m1-1h0m0 0h0m0 0h0m1 0h0m0 1h0m0 0h0m0 0h0m1 0h0m0-1h0m0 0h0m1 1h0m0-1h0m0 0h0m0 1h0m1-1h0m0 0h0m0 1h0m0-1h0m1 0h0m0 0h0m0 0h0m1 0h0m0 0h0m0 0h0m0 0h0m1 1h0m0-1h0m0 0h0m1 0h0m0 0h0m0 0h0m0 0h0m1 1h0m0 1h0m0-2h0m0 0h0m1 1h0m0 0h0m0-1h0m1 0h0m0 0h0m0 0h0m0 1h0m1-1h0m0 0h0m0 0h0m1 1h0m0-1h0m0 1h0m0 0h0m1 0h0m0-1h0m0 0h0m1 0h0m0 0h0m0 0h0m0 1h0m1 0h0m0-1h0m0 0h0m1 1h0m0-1h0m0 0h0m0 0h0m1 0h0m0 0h0m0 0h0m1 0h0m0 1h0m0-1h0m0 0h0m1 1h0m0-1h0m0 1h0m0 0h0m1-1h0m0 1h0m0-1h0m1 1h0m0-1h0m0 0h0m0 0h0m1 1h0m0 0h0m0 0h0m1-1h0m0 0h0m0 0h0m0 0h0m1 0h0m0 0h0m0 1h0m0-2h0m1 1h0m0 0h0m0 0h0m1-1h0m0 2h0m0 0h0m1 0h0m0 0h0m0 0h0m0-1h0m1 0h0m0 0h0m0 0h0m1 0h0m0 0h0m0 0h0m0 0h0m1 0h0m0 1h0m0-1h0m0 0h0m1 0h0m0 0h0m0 0h0m1 1h0m0 0h0m0 0h0m0-1h0m1 2h0m0-1h0m0-1h0m1 0h0m0 0h0m0 1h0m0-1h0m1 0h0m0 0h0m0 0h0m1 1h0m0 0h0m0-1h0m0 1h0m1-2h0m0 1h0m0 1h0m0-1h0m1 1h0m0 0h0m0-1h0m1 0h0m0 0h0m0 0h0m0-1h0m1 2h0m0-1h0m0 0h0m1 0h0m0 0h0m0 0h0m0 0h0m1 0h0m0 0h0m0 0h0m1 0h0m0 1h0m0-1h0m0 1h0m1-1h0m0 0h0m0 0h0m1 0h0m0 1h0m0-1h0m0 1h0m1-1h0m0 0h0m0 0h0m0 1h0m1 0h0m0 0h0m0-2h0m1 1h0m0-1h0m0 2h0m0-1h0m1 0h0m0 1h0m0 0h0m1 0h0m0 0h0m0-1h0m0 0h0m1 0h0m0 0h0m0 0h0m0 0h0m1 0h0m0 1h0m0 0h0m1 0h0m0 0h0m0-1h0m0 1h0m1-1h0m0 0h0m0-1h0m1 1h0m0 1h0m0 0h0m0-1h0m1 0h0m0 0h0m0 0h0m1 0h0m0 0h0m0 0h0m0 0h0m1-1h0m0 1h0m0 1h0m1-1h0m0 0h0m0 1h0m0 0h0m1-1h0m0 0h0m0-1h0m1 1h0m0-1h0m0 2h0m0-1h0m1 0h0m0 0h0m0 0h0m0 1h0m1-1h0m0 1h0m0-1h0m1 0h0m0-1h0m0 1h0m0 1h0m1 0h0m0-1h0m0 0h0m1 1h0m0 0h0m0-1h0m0 0h0m1 0h0m0 0h0m0 1h0m1-1h0m0 0h0m0 0h0m0 0h0m1 1h0m0-1h0m0 1h0m0-1h0m1 0h0m0-1h0m0 1h0m1 0h0m0 1h0m0 0h0m1-1h0m0 0h0m0 0h0m0 1h0m1-1h0m0 0h0m0 0h0m0 0h0m1 0h0m0 0h0m0 0h0m1 1h0m0 0h0m0-1h0m0 0h0m1 1h0m0 0h0m0-1h0m1 0h0m0 1h0m0-1h0m0-1h0m1 1h0m0 1h0m0 0h0m1-1h0m0 1h0m0-1h0m0 1h0m1-1h0m0-1h0m0 1h0m0 1h0m1-1h0m0 1h0m0-2h0m1 1h0m0 0h0m0-1h0m0 2h0m1-1h0m0 1h0m0-1h0m1-1h0m0 1h0m0 0h0m0 1h0m1 0h0m0-1h0m0 0h0m1 0h0m0 0h0m0 0h0m0-1h0m1 2h0m0 0h0m0-2h0m1 1h0m0 0h0m0 0h0m0 1h0m1-1h0m0 1h0m0-1h0m0 0h0m1 1h0m0 0h0m0-1h0m1 0h0m0 1h0m0 0h0m0-1h0m1 0h0m0 0h0m0 0h0m1 0h0m0 0h0m0 0h0m0 1h0m1 0h0m0-1h0m0 0h0m1 0h0m0 0h0m0 0h0m0 0h0m1 0h0m0 1h0m0 0h0m0-1h0m1 0h0m0 1h0m0-1h0m1 0h0m0 0h0m0 1h0m0-1h0m1 1h0m0-1h0m0 0h0m1 0h0m0 0h0m0 0h0m0 0h0m1 0h0m0 0h0m0 1h0m1 0h0m0 0h0m0-1h0m0 0h0m1 1h0m0 0h0m0-1h0m1 1h0m0-1h0m0 0h0m0 0h0m1 1h0m0 0h0m0-1h0m0 0h0m1 1h0m0-1h0m0 0h0m1 1h0m0-1h0m0 1h0m0-1h0m1 1h0m0-1h0m0 0h0m1 0h0m0 1h0m0-1h0m0 0h0m1 1h0m0-2h0m0 1h0m0 1h0m1 0h0m0-1h0m0 1h0m1-1h0m0 0h0m0 0h0m1 0h0m0 0h0m0 1h0m0-1h0m1 1h0m0 0h0m0-1h0m0 1h0m1-1h0m0 0h0m0 1h0m1-1h0m0-1h0m0 0h0m0 1h0m1 0h0m0 0h0m0-1h0m1 1h0m0 0h0m0 1h0m0-1h0m1 0h0m0 1h0m0-1h0m1 0h0m0 0h0m0 0h0m0 1h0m1 0h0m0-2h0m0 1h0m1 0h0m0 1h0m0-1h0m0 0h0m1 1h0m0-1h0m0 0h0m0 0h0m1 0h0m0 0h0m0 0h0m1 0h0m0 1h0m0-1h0m0 0h0m1 0h0m0 1h0m0-1h0m1-1h0m0 1h0m0 0h0m0 1h0m1-1h0m0 0h0m0 1h0m1-2h0m0 1h0m0 2h0m0-3h0m1 1h0m0 1h0m0-2h0m0 1h0m1 0h0m0 0h0m0-1h0m1 1h0m0 0h0m0-1h0m0 1h0m1 1h0m0-1h0m0 0h0m1 0h0m0 0h0m0 0h0m0 0h0m1 0h0m0 0h0m0 0h0m1 1h0m0 0h0m0 0h0m0-1h0m1 1h0m0-1h0m0 1h0m0 0h0m1-2h0m0 0h0m0 1h0m1 1h0m0-1h0m0 0h0m0 0h0m1 1h0m0 0h0m0 0h0m1 0h0m0-1h0m0 0h0m0 1h0m1-1h0m0 1h0m0 0h0m1-1h0m0 0h0m0 1h0m0-1h0m1 0h0m0 0h0m0 1h0m1-1h0m0 2h0m0-2h0m0 0h0m1 0h0m0 0h0m0 0h0m0 0h0m1 0h0m0 0h0m0 0h0m1 0h0m0 0h0m0 1h0m1-1h0m0 0h0m0-1h0m0 2h0m1-1h0m0 0h0m0 0h0m0 0h0m1 0h0m0 0h0m0 0h0m1 0h0m0 0h0m0 0h0m0 0h0m1 1h0m0-1h0m0 0h0m0 0h0m1 1h0m0-1h0m0 1h0m1 1h0m0-2h0m0 0h0m0 0h0m1-1h0m0 2h0m0 0h0m1 0h0m0-1h0m0 0h0m0 0h0m1 0h0m0 0h0m0 1h0m1-1h0m0 0h0m0 0h0m0 0h0m1 0h0m0 0h0m0 1h0m1 0h0m0-2h0m0 1h0m0 1h0m1-1h0m0 1h0m0-1h0m1 0h0m0 1h0m0 0h0m0-1h0m1 1h0m0-1h0m0 0h0m1 0h0m0 1h0m0 0h0m0 0h0m1 0h0m0 0h0m0-2h0m0 1h0m1 1h0m0-1h0m0 1h0m1-2h0m0 2h0m0-1h0m0 0h0m1 0h0m0 0h0m0 1h0m1 0h0m0-1h0m0 0h0m0 1h0m1-1h0m0 0h0m0 0h0m0 0h0m1 1h0m0-1h0m0 0h0m1 0h0m0 1h0m0 0h0m0-1h0m1 0h0m0 0h0m0 0h0m1 1h0m0-1h0m0 1h0m0 0h0m1-1h0m0 0h0m0 0h0m1 0h0m0 1h0m0 0h0m0-1h0m1 1h0m0 0h0m0 0h0m1-1h0m0 1h0m0 0h0m0-1h0m1 1h0m0-1h0m0 1h0m0 0h0m1-1h0m0 0h0m0 0h0m1 0h0m0-1h0m0 1h0m0 0h0m1 1h0m0-2h0m0 2h0m1-1h0m0 1h0m0 0h0m0-1h0m1 0h0m0 1h0m0 0h0m1 0h0m0 1h0m0-1h0m0 0h0m1-1h0m0 0h0m0 1h0m1 0h0m0-1h0m0 0h0m0 1h0m1 0h0m0-1h0m0 1h0m1-1h0m0 0h0m0 0h0m0 0h0m1 1h0m0-1h0m0 2h0m0-2h0m1 0h0m0 0h0m0 0h0m1 0h0m0 0h0m0 1h0m0 0h0m1 0h0m0-1h0m0 0h0m1 1h0m0 0h0m0-1h0m0 1h0m1 0h0m0-2h0m0 1h0m1 1h0m0-1h0m0 0h0m0 0h0m1 1h0m0 0h0m0-1h0m1 1h0m0-1h0m0 1h0m0-1h0m1 1h0m0-1h0m0 0h0m0-1h0m1 2h0m0 0h0m0 0h0m1-1h0m0 0h0m0 0h0m0 0h0m1 1h0m0 0h0m0-1h0m0 0h0m1 1h0m0 0h0m0-2h0m1 2h0m0-1h0m0 0h0m0 0h0m1-1h0m0 1h0m0 0h0m1 0h0m0 0h0m0 1h0m0-1h0m1 0h0m0 0h0m0 0h0m1 0h0m0 0h0m0 1h0m0-1h0m1 1h0m0-1h0m0 0h0m1 1h0m0 0h0m0-1h0m0 0h0m1 0h0m0 0h0m0 0h0m0 0h0m1 0h0m0 0h0m0 0h0m1 0h0m0-1h0m0 1h0m0 0h0m1 1h0m0 0h0m0-1h0m1 1h0m0 0h0m0 0h0m1 1h0m0-1h0m0-1h0m0 0h0m1-1h0m0 2h0m0 0h0m0-2h0m1 1h0m0 0h0m0 0h0m1 2h0m0-1h0m0-1h0m0 0h0m1 0h0m0 0h0m0 1h0m1-1h0m0 1h0m0-1h0m0 1h0m1-2h0m0 1h0m0-1h0m0 1h0m1 0h0m0 0h0m0 1h0m1-1h0m0 0h0m0 0h0m0 1h0m1 0h0m0-1h0m0 0h0m1 1h0m0-1h0m0 0h0m0 0h0m1 1h0m0-1h0m0 0h0m1 0h0m0 1h0m0 0h0m0-2h0m1 0h0m0 2h0m0 0h0m0 0h0m1-1h0m0 1h0m0-1h0m1 1h0m0 0h0m0-1h0m1 1h0m0-2h0m0 1h0m0 0h0m1 0h0m0 0h0m0 0h0m0 0h0m1 1h0m0 0h0m0-1h0m1 0h0m0 1h0m0-1h0m0 0h0m1 0h0m0 0h0m0 1h0m1-1h0m0 1h0m0-1h0m0 0h0m1 1h0m0 0h0m0-1h0m1 0h0m0 1h0m0-1h0m0 0h0m1 2h0m0 0h0m0-1h0m1-1h0m0-1h0m0 1h0m0 1h0m1-1h0m0-1h0m0 1h0m0 1h0m1 0h0m0 0h0m0-1h0m1 0h0m0 0h0m0 0h0m0 1h0m1 0h0m0-1h0m0 0h0m1 1h0m0-1h0m0 0h0m0 0h0m1 1h0m0-2h0m0 0h0m0 0h0m1 2h0m0-1h0m0 1h0m1 0h0m0-1h0m0 1h0m0-1h0m1 1h0m0-1h0m0 1h0m1-1h0m0 0h0m0 1h0m0-1h0m1 0h0m0 0h0m0 1h0m1 0h0m0 0h0m0 0h0m0 1h0m1-1h0m0-1h0m0 1h0m0-1h0m1 1h0m0-1h0m0 1h0m1 0h0m0 0h0m0-1h0m1 0h0m0 1h0m0 0h0m0 0h0m1-2h0m0 2h0m0-1h0m0 0h0m1 0h0m0 1h0m0 0h0m1 0h0m0-1h0m0 1h0m0-2h0m1 2h0m0-1h0m0 1h0m1-1h0m0 1h0m0-1h0m0 0h0m1 0h0m0 1h0m0-2h0m1 1h0m0 0h0m0 2h0m0-2h0m1 0h0m0 0h0m0 0h0m1 0h0m0-1h0m0 1h0m0 0h0m1 0h0m0 0h0m0 1h0m1-1h0m0 0h0m0 1h0m0-1h0m1 1h0m0 0h0m0 0h0m0-2h0m1 2h0m0-1h0m0 0h0m1 0h0m0 0h0m0 0h0m0 0h0m1 1h0m0 0h0m0-1h0m1 0h0m0 0h0m0 1h0m0-1h0m1 1h0m0-2h0m0 1h0m1 0h0m0 1h0m0-1h0m0 0h0m1 1h0m0-1h0m0 1h0m0-1h0m1 1h0m0-1h0m0 0h0m1 0h0m0 0h0m0 1h0m0-1h0m1 0h0m0 1h0m0-1h0m1 1h0m0 0h0m0-1h0m0 1h0m1-1h0m0 0h0m0 0h0m1 1h0m0-1h0m0 0h0m0 1h0m1-1h0m0 1h0m0 0h0m1-1h0m0 1h0m0-1h0m0 0h0m1 0h0m0-1h0m0 1h0m0 0h0m1 2h0m0-2h0m0 0h0m1 0h0m0 1h0m0 0h0m0 0h0m1 0h0m0 0h0m0-1h0m1 1h0m0 1h0m0-2h0m0 0h0m1 0h0m0 0h0m0 0h0m0 0h0m1 1h0m0 0h0m0-2h0m1 2h0m0-1h0m0 0h0m0 0h0m1 0h0m0 1h0m0-1h0m1 1h0m0-1h0m0 0h0m0 1h0m1 0h0m0-1h0m0 0h0m1 0h0m0 0h0m0 0h0m0 0h0m1 0h0m0 0h0m0 0h0m0 0h0m1 1h0m0-1h0m0 1h0m1 0h0m0-1h0m0 1h0m1-1h0m0 0h0m0 0h0m0 0h0m1 1h0m0-1h0m0 0h0m0 0h0m1 1h0m0-1h0m0 0h0m1 0h0m0 0h0m0 0h0m0 0h0m1 1h0m0 0h0m0 0h0m1-1h0m0 1h0m0-1h0m0 0h0m1 0h0m0-1h0m0 2h0m1 0h0m0-1h0m0 1h0m0 0h0m1-1h0m0 0h0m0 0h0m0 0h0m1 0h0m0 1h0m0-1h0m1 0h0m0 0h0m0-1h0m0 2h0m1-1h0m0-1h0m0 2h0m1-2h0m0 2h0m0-1h0m0-1h0m1 2h0m0-1h0m0 0h0m1 0h0m0 0h0m0 0h0m0 1h0m1 0h0m0-1h0m0 0h0m1 0h0m0 1h0m0-1h0m0 0h0m1 2h0m0-2h0m0 1h0m1 0h0m0 0h0m0 0h0m0-1h0m1 1h0m0-2h0m0 2h0m0-1h0m1 1h0m0-1h0m0 1h0m1-1h0m0 0h0m0 1h0m0-1h0m1 0h0m0 1h0m0-1h0m1 0h0m0 0h0m0 0h0m0 1h0m1 0h0m0-1h0m0 0h0m0 1h0m1 0h0m0-1h0m0 1h0m1 0h0m0-2h0m0 1h0m1 0h0m0 0h0m0 0h0m0 0h0m1 0h0m0 0h0m0 0h0m0 0h0m1 0h0m0 0h0m0-1h0m1 1h0m0 0h0m0 0h0m0 0h0m1 0h0m0 0h0m0 1h0m0-1h0m1 0h0m0 1h0m0-1h0m1 1h0m0-1h0m0 1h0m0-2h0m1 1h0m0 0h0m0 1h0m1 0h0m0 0h0m0-1h0m0 0h0m1 0h0m0 0h0m0 1h0m1 0h0m0-2h0m0 1h0m0 0h0m1 0h0m0 0h0m0 1h0m1 0h0m0-1h0m0 0h0m0 0h0m1 0h0m0 1h0m0-1h0m1 0h0m0 1h0m0-1h0m0 0h0m1 0h0m0 0h0m0 0h0m0 0h0m1 0h0m0 0h0m0 0h0m1 1h0m0-1h0m0 0h0m0 0h0m1 2h0m0-2h0m0 0h0m1 1h0m0-1h0m0 0h0m0 1h0m1-1h0m0 0h0m0 0h0m1 0h0m0 0h0m0-1h0m0 2h0m1-1h0m0-1h0m0 2h0m1 0h0m0-1h0m0 1h0m0 0h0m1 0h0m0 0h0m0-1h0m0 1h0m1-1h0m0 0h0m0 1h0m1-2h0m0 1h0m0-1h0m0 0h0m1 2h0m0-1h0m0-1h0m1 3h0m0-2h0m0 0h0m0 0h0m1 0h0m0-1h0m0 2h0m1-1h0m0-1h0m0 2h0m0-1h0m1 1h0m0 0h0m0-1h0m0-1h0m1 1h0m0 0h0m0 0h0m1 0h0m0 0h0m0 1h0m0-1h0m1 0h0m0 0h0m0 0h0m1 0h0m0 1h0m0-1h0m0-1h0m1 2h0m0-2h0m0 1h0m1 1h0m0-2h0m0 2h0m0-1h0m1 0h0m0 0h0m0 0h0m1 0h0m0 0h0m0 0h0m0 1h0m1-1h0m0 1h0m0-1h0m1 0h0m0 0h0m0-1h0m0 1h0m1 0h0m0 1h0m0 0h0m0-1h0m1 1h0m0-1h0m0 0h0m1 0h0m0 1h0m0-1h0m0 1h0m1 0h0m0 0h0m0-1h0m1 1h0m0 0h0m0-1h0m0 1h0m1-1h0m0 0h0m0 1h0m1-2h0m0 1h0m0 0h0m0 2h0m1-2h0m0 1h0m0 0h0m1 0h0m0 1h0m0-2h0m0 0h0m1 0h0m0 1h0m0 0h0m0 0h0m1-2h0m0 2h0m0-1h0m1-1h0m0 1h0m0 1h0m0-1h0m1 0h0m0 0h0m0 1h0m1 0h0m0 0h0m0 0h0m0-1h0m1 0h0m0 0h0m0 1h0m1 0h0m0-1h0m0 0h0m0 1h0m1-1h0m0 0h0m0 1h0m0-1h0m1 1h0m0 0h0m0-1h0m1 1h0m0-2h0m0 1h0m0-1h0m1 1h0m0-1h0m0 2h0m1 0h0m0-1h0m0 0h0m0 0h0m1 1h0m0-1h0m0 1h0m1-1h0m0 1h0m0-2h0m0 0h0m1 1h0m0 1h0m0-2h0m1 2h0m0-1h0m0 0h0m0 0h0m1 0h0m0 1h0m0-1h0m1 0h0m0 0h0m0 0h0m0 0h0m1 0h0m0 0h0m0 0h0m0 1h0m1-1h0m0 0h0m0 1h0m1 0h0m0-1h0m0 0h0m0 1h0m1-1h0m0 1h0m0-1h0m1 0h0m0 0h0m0 1h0m0-1h0m1 1h0m0-1h0m0 1h0m1-1h0m0 0h0m0 0h0m0 0h0m1-1h0m0 1h0m0 0h0m0 0h0m1 1h0m0 0h0m0-1h0m1 1h0m0-1h0m0 0h0m0 0h0m1 1h0m0-2h0m0 1h0m1 1h0m0 0h0m0-1h0m0 1h0m1-1h0m0 0h0m0 1h0m1-1h0m0 0h0m0 0h0m0 1h0m1 1h0m0-2h0m0 0h0m0 0h0m1-1h0m0 1h0m0-1h0m1 2h0m0-1h0m0 0h0m0 0h0m1 1h0m0-1h0m0-1h0m1 1h0m0 0h0m0 0h0m0 1h0m1 0h0m0 0h0m0-1h0m1 0h0m0 0h0m0 1h0m0-2h0m1 2h0m0 0h0m0-1h0m0 0h0m1 1h0m0-1h0m0 1h0m1-1h0m0 1h0m0-1h0m1 1h0m0-1h0m0 1h0m0-2h0m1 1h0m0 1h0m0-1h0m0 1h0m1-1h0m0 0h0m0 0h0m1 1h0m0-1h0m0 0h0m0 0h0m1 1h0m0-1h0m0 0h0m1 1h0m0-1h0m0 0h0m0 0h0m1 0h0m0 0h0m0 1h0m0-2h0m1 2h0m0 0h0m0-1h0m1 1h0m0 0h0m0 0h0m1-1h0m0 1h0m0-1h0m0 1h0m1-1h0m0 0h0m0 0h0m0 0h0m1 0h0m0 0h0m0 1h0m1-1h0m0-1h0m0 1h0m0 0h0m1 1h0m0-1h0m0 0h0m1 0h0m0 0h0m0 0h0m0 1h0m1-1h0m0 0h0m0 1h0m1-1h0m0 0h0m0 0h0m0 1h0m1-1h0m0-1h0m0 1h0m0 0h0m1 1h0m0-1h0m0 0h0m1 0h0m0 0h0m0 1h0m0-2h0m1 1h0m0 1h0m0-1h0m1 0h0m0 1h0m0-1h0m0 0h0m1 1h0m0-2h0m0 1h0m1 1h0m0 0h0m0-1h0m0 0h0m1 1h0m0 0h0m0-1h0m0 1h0m1-1h0m0-1h0m0 0h0m1 1h0m0 0h0m0 1h0m0 0h0m1-1h0m0 0h0m0 1h0m1 0h0m0 0h0m0-1h0m0 1h0m1-1h0m0 0h0m0 0h0m1 1h0m0 0h0m0-1h0m0 0h0m1 0h0m0 1h0m0-2h0m0 2h0m1-1h0m0 1h0m0-1h0m1 0h0m0 1h0m0 0h0m1-1h0m0 1h0m0 0h0m0-1h0m1 0h0m0 0h0m0 0h0m0-1h0m1 2h0m0-1h0m0 0h0m1-1h0m0 1h0m0 0h0m0 1h0m1-1h0m0 0h0m0 1h0m0 0h0m1 1h0m0-2h0m0 0h0m1 0h0m0-1h0m0 2h0m0 0h0m1-1h0m0 0h0m0 1h0m1 0h0m0 0h0m0 0h0m0-3h0m1 2h0m0 1h0m0 0h0m1-1h0m0 0h0m0 0h0m0 0h0m1-1h0m0 1h0m0 0h0m1 0h0m0 0h0m0 0h0m0 0h0m1-1h0m0 3h0m0-2h0m1-1h0m0 2h0m0-1h0m0 1h0m1-1h0m0 0h0m0 0h0m0 0h0m1 1h0m0 0h0m0-1h0m1-1h0m0 1h0m0 0h0m1 1h0m0-1h0m0 0h0m0 1h0m1 0h0m0-1h0m0 0h0m0 0h0m1 0h0m0 1h0m0-1h0m1 0h0m0 0h0m0 1h0m0-1h0m1 1h0m0-1h0m0-1h0m1 1h0m0 0h0m0 0h0m0 0h0m1-1h0m0 2h0m0-1h0m0 0h0m1 0h0m0 0h0m0-1h0m1 1h0m0 0h0m0 1h0m0-1h0m1 0h0m0 0h0m0 0h0m1 0h0m0 0h0m0 0h0m0 0h0m1 1h0m0-1h0m0 1h0m1-1h0m0 2h0m0-1h0m0-2h0m1 1h0m0 1h0m0-1h0m0 0h0m1 0h0m0 0h0m0 0h0m1 0h0m0 0h0m0 0h0m0 1h0m1 0h0m0-1h0m0 0h0m1 0h0m0 0h0m0 0h0m0 1h0m1 0h0m0-1h0m0 0h0m1 0h0m0 1h0m0-1h0m0 0h0m1 0h0m0 0h0m0 0h0m0 0h0m1 0h0m0 1h0m0-1h0m1 0h0m0 1h0m0-1h0m1 1h0m0 0h0m0 0h0m0 0h0m1-1h0m0 1h0m0-1h0m0 1h0m1-1h0m0 0h0m0 0h0m1 0h0m0 1h0m0-1h0m0 0h0m1 1h0m0-1h0m0 0h0m1 0h0m0-1h0m0 1h0m0 0h0m1 0h0m0 0h0m0 0h0m1 0h0m0 1h0m0-1h0m0 0h0m1 1h0m0 0h0m0-1h0m0 0h0m1 0h0m0 1h0m0-1h0m1 0h0m0 0h0m0 0h0m1 0h0m0 0h0m0 0h0m0 0h0m1 0h0m0 0h0m0 0h0m0 0h0m1 1h0m0-1h0m0 0h0m1 1h0m0-1h0m0 1h0m0 0h0m1-1h0m0 1h0m0-1h0m1-1h0m0 1h0m0-1h0m0 1h0m1 0h0m0 0h0m0 1h0m1-1h0m0 1h0m0-1h0m0 1h0m1 0h0m0-1h0m0 0h0m0 0h0m1 1h0m0-1h0m0 1h0m1-1h0m0-1h0m0 1h0m0 1h0m1-2h0m0 1h0m0 1h0m1 0h0m0 1h0m0-2h0m0 0h0m1 1h0m0 0h0m0 0h0m0-1h0m1 1h0m0-1h0m0-1h0m1 1h0m0 1h0m0 0h0m1-1h0m0 0h0m0 0h0m0 0h0m1 0h0m0 0h0m0 1h0m0 0h0m1-1h0m0 0h0m0 1h0m1 0h0m0 0h0m0 0h0m0-1h0m1 0h0m0 1h0m0 0h0m1-1h0m0 0h0m0 0h0m0 0h0m1 1h0m0-1h0m0 0h0m0 0h0m1 0h0m0 0h0m0 0h0m1 1h0m0 0h0m0 0h0m0-1h0m1 1h0m0-1h0m0 1h0m1-1h0m0 0h0m0 1h0m0-1h0m1 1h0m0-1h0m0 0h0m1 1h0m0-1h0m0 1h0m0-1h0m1 0h0m0 1h0m0 0h0m1-1h0m0 0h0m0 0h0m0 0h0m1 1h0m0 0h0m0-1h0m1 0h0m0 0h0m0 1h0m0-1h0m1 1h0m0-1h0m0 1h0m1-1h0m0-1h0m0 1h0m0 0h0m1 0h0m0 0h0m0 0h0m0 1h0m1 0h0m0-1h0m0 0h0m1 0h0m0 0h0m0 0h0m0 2h0m1-1h0m0-1h0m0 1h0m1-1h0m0 0h0m0-1h0m0 2h0m1 0h0m0 0h0m0-1h0m1 0h0m0 1h0m0 0h0m0-1h0m1 0h0m0 1h0m0-1h0m0 0h0m1 0h0m0 0h0m0 0h0m1 0h0m0 0h0m0 0h0m0 0h0m1 1h0m0-1h0m0 0h0m1 1h0m0-1h0m0-1h0m0 2h0m1-1h0m0 0h0m0 0h0m1 1h0m0-1h0m0 1h0m0-1h0m1 0h0m0 0h0m0 0h0m1 1h0m0-1h0m0 1h0m0-1h0m1 1h0m0-1h0m0 1h0m0-1h0m1 0h0m0 0h0m0 0h0m1 1h0m0-1h0m0 0h0m0 1h0m1-1h0m0 0h0m0 1h0m1 0h0m0-1h0m0 0h0m0 0h0m1 0h0m0 0h0m0 0h0m1 1h0m0-1h0m0 0h0m0 0h0m1 0h0m0 1h0m0-1h0m0 1h0m1-1h0m0 1h0m0 0h0m1-1h0m0 0h0m0 0h0m0-1h0m1 1h0m0 0h0m0 0h0m1 0h0m0 1h0m0 0h0m0 0h0m1-1h0m0 1h0m0 0h0m0 0h0m1 0h0m0-1h0m0 0h0m1 1h0m0-1h0m0 0h0m0 0h0m1 1h0m0-1h0m0-1h0m1 1h0m0 1h0m0-1h0m0-1h0m1 2h0m0-1h0m0-1h0m1 2h0m0-1h0m0 0h0m0 0h0m1 0h0m0 1h0m0-1h0m1 0h0m0 1h0m0-1h0m0 0h0m1 0h0m0 0h0m0 1h0m1-1h0m0 0h0m0 0h0m0 1h0m1-1h0m0 0h0m0 0h0m1 1h0m0 0h0m0 0h0m0-1h0m1 0h0m0 1h0m0 0h0m0-1h0m1 1h0m0-1h0m0 1h0m1 0h0m0-1h0m0 0h0m0 0h0m1 0h0m0 1h0m0-1h0m1 0h0m0 0h0m0 1h0m0 0h0m1-1h0m0 0h0m0 0h0m1 1h0m0-1h0m0 0h0m0 0h0m1 0h0m0 1h0m0-1h0m1 1h0m0-1h0m0 1h0m0-1h0m1-1h0m0 2h0m0-2h0m0 1h0m1 0h0m0 0h0m0 0h0m1 1h0m0 0h0m0-1h0m0 0h0m1 1h0m0-1h0m0 0h0m0 0h0m1-1h0m0 1h0m0 1h0m1-1h0m0 0h0m0 0h0m1-1h0m0 1h0m0 1h0m0-1h0m1 0h0m0 1h0m0-2h0m1 1h0m0 1h0m0-1h0m0 0h0m1 0h0m0 2h0m0-2h0m0 1h0m1-1h0m0 0h0m0-1h0m1 3h0m0-2h0m0 1h0m0-1h0m1 0h0m0 1h0m0-1h0m1 0h0m0 1h0m0 0h0m0-1h0m1 1h0m0 0h0m0-2h0m0 2h0m1-1h0m0 1h0m0 0h0m1-1h0m0 0h0m0 1h0m0 0h0m1-1h0m0 1h0m0-1h0m1 0h0m0 1h0m0 0h0m0 0h0m1 0h0m0 0h0m0-1h0m1 2h0m0-2h0m0 0h0m0 0h0m1 1h0m0 0h0m0-1h0m1 0h0m0 1h0m0 0h0m0 1h0m1-2h0m0 0h0m0 0h0m1 1h0m0-1h0m0 1h0m0-1h0m1 0h0m0-1h0m0 2h0m0-1h0m1-1h0m0 2h0m0-1h0m1 1h0m0 0h0m0-1h0m0 0h0m1 0h0m0 0h0m0 0h0m1 0h0m0 1h0m0-1h0m0 0h0m1 0h0m0 0h0m0 1h0m1-1h0m0 1h0m0 0h0m0-1h0m1 0h0m0 1h0m0-1h0m0 0h0m1 0h0m0 1h0m0-1h0m1 1h0m0 0h0m0-2h0m1 2h0m0-1h0m0 0h0m0 0h0m1 1h0m0-1h0m0 1h0m0 0h0m1-1h0m0 1h0m0-1h0m1 0h0m0 0h0m0 0h0m0 0h0m1 0h0m0 1h0m0 0h0m0-1h0m1 1h0m0-1h0m0 1h0m1 0h0m0-1h0m0 0h0m0 0h0m1 1h0m0 0h0m0 0h0m1-1h0m0 0h0m0 1h0m0-2h0m1 2h0m0-1h0m0 0h0m1 0h0m0 0h0m0 1h0m0-1h0m1 1h0m0 0h0m0-1h0m0 0h0m1 1h0m0-1h0m0 1h0m1 0h0m0 0h0m0-1h0m0 0h0m1 0h0m0 1h0m0-1h0m1 0h0m0 0h0m0 0h0m0 1h0m1-1h0m0 0h0m0 0h0m1 0h0m0 0h0m0 0h0m0 0h0m1 0h0m0-1h0m0 1h0m1 0h0m0 1h0m0 0h0m0 0h0m1 1h0m0-2h0m0 1h0m1 0h0m0-1h0m0 1h0m0-1h0m1 0h0m0 0h0m0 1h0m1-1h0m0-1h0m0 1h0m0 0h0m1 1h0m0 0h0m0-1h0m1 0h0m0 0h0m0 0h0m0 0h0m1-1h0m0 1h0m0 0h0m0 1h0m1 0h0m0 0h0m0-1h0m1-1h0m0 1h0m0 1h0m0-1h0m1 0h0m0 1h0m0-1h0m1 0h0m0 0h0m0 0h0m0 0h0m1 0h0m0-1h0m0 2h0m1 0h0m0-1h0m0 0h0m0 0h0m1 0h0m0 1h0m0 0h0m0-1h0m1 0h0m0 0h0m0 0h0m1 0h0m0 0h0m0 1h0m0 0h0m1 0h0m0-2h0m0 2h0m1 0h0m0-1h0m0 0h0m0 1h0m1 0h0m0-1h0m0 0h0m1 1h0m0-1h0m0 1h0m0 0h0m1 0h0m0-1h0m0 0h0m1 1h0m0-1h0m0 1h0m0 0h0m1-1h0m0 0h0m0 1h0m0-1h0m1 1h0m0-1h0m0 0h0m1 1h0m0 0h0m0 0h0m0 0h0m1-1h0m0 0h0m0 0h0m1 1h0m0-1h0m0 1h0m0-1h0m1 0h0m0 1h0m0 0h0m0-1h0m1 0h0m0 0h0m0 1h0m1 0h0m0-1h0m0 0h0m1 1h0m0 0h0m0-1h0m0 1h0m1-2h0m0 2h0m0-1h0m0 0h0m1 0h0m0 0h0m0 0h0m1 0h0m0 0h0m0 1h0m0-1h0m1 0h0m0 1h0m0-1h0m1 0h0m0 0h0m0 0h0m0 0h0m1 1h0m0-1h0m0 1h0m1-1h0m0 0h0m0 1h0m0-2h0m1 1h0m0 0h0m0 0h0m0 0h0m1 1h0m0 0h0m0-1h0m1 0h0m0 0h0m0 0h0m0 1h0m1-1h0m0 0h0m0 0h0m1 1h0m0-1h0m0 0h0m0 0h0m1 1h0m0-1h0m0 1h0m0-1h0m1 0h0m0-1h0m0 1h0m1 1h0m0 0h0m0-1h0m0-1h0m1 1h0m0 0h0m0 0h0m1 1h0m0-1h0m0 0h0m0 0h0m1 0h0m0 0h0m0 1h0m1 0h0m0-1h0m0 0h0m0 0h0m1 0h0m0 0h0m0 0h0m1 0h0m0 1h0m0 1h0m0-1h0m1-1h0m0 1h0m0 0h0m1 0h0m0-1h0m0 1h0m0-1h0m1 0h0m0 0h0m0 0h0m1 0h0m0 0h0m0 0h0m0 1h0m1-1h0m0 0h0m0-1h0m0 1h0m1 0h0m0 1h0m0 0h0m1-1h0m0 2h0m0-2h0m0 0h0m1 1h0m0-1h0m0 1h0m1-1h0m0-1h0m0 1h0m0 0h0m1 1h0m0 0h0m0-1h0m1 0h0m0 1h0m0 0h0m0 0h0m1-1h0m0 1h0m0 0h0m0-1h0m1 0h0m0 0h0m0 1h0m1-1h0m0 0h0m0 0h0m0 0h0m1 1h0m0-1h0m0 1h0m1-1h0m0 0h0m0 0h0m0 1h0m1 0h0m0-1h0m0 1h0m1 1h0m0-2h0m0 1h0m0-2h0m1 0h0m0 2h0m0-2h0m1 1h0m0 0h0m0 0h0m0 1h0m1-1h0m0 0h0m0 0h0m1 0h0m0 1h0m0 0h0m0 0h0m1-1h0m0 0h0m0 0h0m0 1h0m1-1h0m0 0h0m0 1h0m1-1h0m0 0h0m0 1h0m0-1h0m1 0h0m0 0h0m0 0h0m1 1h0m0 0h0m0-1h0m0 0h0m1 0h0m0 0h0m0 0h0m1 0h0m0 1h0m0 0h0m0 0h0m1-1h0m0 0h0m0 0h0m0 0h0m1 0h0m0 0h0m0 0h0m1 1h0m0-1h0m0 1h0m0-1h0m1 0h0m0 0h0m0 1h0m1-1h0m0 1h0m0-1h0m0 0h0m1-1h0m0 2h0m0 0h0m0 0h0m1 0h0m0 0h0m0-2h0m1 2h0m0-1h0m0 0h0m0 0h0m1 0h0m0 0h0m0 0h0m1 0h0m0-1h0m0 1h0m0-1h0m1 1h0m0 0h0m0 1h0m1-1h0m0 0h0m0 0h0m0 1h0m1-1h0m0 0h0m0 1h0m1 0h0m0-1h0m0 0h0m0 0h0m1 1h0m0-1h0m0 1h0m1-1h0m0 1h0m0-1h0m0 1h0m1-1h0m0 0h0m0 0h0m1-1h0m0 1h0m0 1h0m0-1h0m1 0h0m0 0h0m0 0h0m0 0h0m1 1h0m0-1h0m0-1h0m1 2h0m0 0h0m0-1h0m0 1h0m1-1h0m0 1h0m0-1h0m1 0h0m0 1h0m0-1h0m0 1h0m1-1h0m0 0h0m0 1h0m1-1h0m0 1h0m0-2h0m0 1h0m1 1h0m0 0h0m0 0h0m0-1h0m1 0h0m0 0h0m0 1h0m1 0h0m0-1h0m0 1h0m0 0h0m1-2h0m0 1h0m0 0h0m1 0h0m0 1h0m0-1h0m0 1h0m1 0h0m0 0h0m0 0h0m1-1h0m0 0h0m0 0h0m0 1h0m1-1h0m0 1h0m0 0h0m1 0h0m0-1h0m0 0h0m0 1h0m1-1h0m0 0h0m0 1h0m0-1h0m1 1h0m0-1h0m0 1h0m1-1h0m0 0h0m0 0h0m0 0h0m1 1h0m0-1h0m0 0h0m1-1h0m0 1h0m0 0h0m0 0h0m1 0h0m0 0h0m0 0h0m1 1h0m0 0h0m0-1h0m0 1h0m1-1h0m0 0h0m0 1h0m0-1h0m1-1h0m0 1h0m0 0h0m1 1h0m0 0h0m0-1h0m0 0h0m1 0h0m0-1h0m0 2h0m1-1h0m0 0h0m0 0h0m0 1h0m1-1h0m0 0h0m0 0h0m1 1h0m0-1h0m0 1h0m0-1h0m1 0h0m0 0h0m0 0h0m1 0h0m0 0h0m0 1h0m0 0h0m1 0h0m0-1h0m0 0h0m0 1h0m1-2h0m0 2h0m0-2h0m1 1h0m0 0h0m0 0h0m0 0h0m1 0h0m0 0h0m0 0h0m1 0h0m0 0h0m0 1h0m0-1h0m1 0h0m0 0h0m0 0h0m1 0h0m0 1h0m0-1h0m0-1h0m1 1h0m0-1h0m0 1h0m1 0h0m0 0h0m0 0h0m0 0h0m1 0h0m0 1h0m0 0h0m0-1h0m1 0h0m0 0h0m0 0h0m1 0h0m0 0h0m0 0h0m0 0h0m1 0h0m0-1h0m0 1h0m1 0h0m0 1h0m0 0h0m0-1h0m1 0h0m0 1h0m0-1h0m1 0h0m0 0h0m0 0h0m0 0h0m1 0h0m0 0h0m0 0h0m1 1h0m0-1h0m0 0h0m0 0h0m1 0h0m0 1h0m0-1h0m0 0h0m1 1h0m0-1h0m0 0h0m1 1h0m0-1h0m0 1h0m0 0h0m1 0h0m0-1h0m0 1h0m1-1h0m0 0h0m0 0h0m0 0h0m1 0h0m0 1h0m0 0h0m1-1h0m0 1h0m0 0h0m0 0h0m1-2h0m0 1h0m0 1h0m0 0h0m1-1h0m0 0h0m0-1h0m1 1h0m0 0h0m0 1h0m1-1h0m0 0h0m0 0h0m0 0h0m1 0h0m0-1h0m0 2h0m0 0h0m1-1h0m0 0h0m0 0h0m1 0h0m0 1h0m0-1h0m0 0h0m1-1h0m0 1h0m0 1h0m1 0h0m0-1h0m0 1h0m0-1h0m1 0h0m0 1h0m0-1h0m0 1h0m1-1h0m0 0h0m0 1h0m1 0h0m0-1h0m0 0h0m0 1h0m1 0h0m0-1h0m0 1h0m1-1h0m0 0h0m0 1h0m0-1h0m1 0h0m0 0h0m0 0h0m1 0h0m0 1h0m0 0h0m0-1h0m1 1h0m0 0h0m0-1h0m0 1h0m1-1h0m0 0h0m0 0h0m1 0h0m0 0h0m0 1h0m0-1h0m1 0h0m0 1h0m0-2h0m1 2h0m0-1h0m0 1h0m0 0h0m1-1h0m0 0h0m0 1h0m1-1h0m0 0h0m0 0h0m0 0h0m1 1h0m0-1h0m0 0h0m1 0h0m0 1h0m0-1h0m0 1h0m1-1h0m0 0h0m0 0h0m1 0h0m0 0h0m0 0h0m0 0h0m1 0h0m0 1h0m0 0h0m0-1h0m1 0h0m0 0h0m0 1h0m1-1h0m0 0h0m0 1h0m0-1h0m1 0h0m0 0h0m0-1h0m1 1h0m0 1h0m0-1h0m0 1h0m1-1h0m0 1h0m0 0h0m0-1h0m1-1h0m0 2h0m0-1h0m1-1h0m0 2h0m0 0h0m1 0h0m0-1h0m0 0h0m0 0h0m1 0h0m0 0h0m0 1h0m0-1h0m1 1h0m0-2h0m0 2h0m1 0h0m0 0h0m0 0h0m0-1h0m1 1h0m0-1h0m0 0h0m1 0h0m0 0h0m0 1h0m0-1h0m1 0h0m0 1h0m0-2h0m1 0h0m0 2h0m0 0h0m0-1h0m1 0h0m0 0h0m0 0h0m0 0h0m1-1h0m0 2h0m0-1h0m1 1h0m0-1h0m0 0h0m0 0h0m1 0h0m0 0h0m0 1h0m1-1h0m0 0h0m0 1h0m0 0h0m1-1h0m0 1h0m0-1h0m1-1h0m0 1h0m0 1h0m0-2h0m1 1h0m0 0h0m0 0h0m1 0h0m0 0h0m0 1h0m0-2h0m1 2h0m0 0h0m0-1h0m1 1h0m0-1h0m0 0h0m0 0h0m1 0h0m0 1h0m0 0h0m0-1h0m1 0h0m0 0h0m0 0h0m1 0h0m0 0h0m0 0h0m0 0h0m1 1h0m0 0h0m0 0h0m1 0h0m0-1h0m0 1h0m0-1h0m1 0h0m0 0h0m0 1h0m1-1h0m0 0h0m0 0h0m0 0h0m1 0h0m0 1h0m0-1h0m0 1h0m1-1h0m0 1h0m0-2h0m1 2h0m0-1h0m0-1h0m0 1h0m1 1h0m0-1h0m0 1h0m1 0h0m0-2h0m0 2h0m0-1h0m1-1h0m0 2h0m0-1h0m1 1h0m0-1h0m0 0h0m0 0h0m1 0h0m0 0h0m0 0h0m1 0h0m0 0h0m0 0h0m0 0h0m1 1h0m0-1h0m0 0h0m0 1h0m1 0h0m0-1h0m0 0h0m1 0h0m0 1h0m0 0h0m0 0h0m1 0h0m0-2h0m0 1h0m1 0h0m0 1h0m0 0h0m0-1h0m1 0h0m0 0h0m0 0h0m1 0h0m0 0h0m0 1h0m0 0h0m1-2h0m0 2h0m0-1h0m1 0h0m0 0h0m0-1h0m0 2h0m1 0h0m0-1h0m0 0h0m1 0h0m0 0h0m0 1h0m0-1h0m1-1h0m0 2h0m0-2h0m0 2h0m1-1h0m0 0h0m0 1h0m1 0h0m0 0h0m0-1h0m0 0h0m1 0h0m0 1h0m0-1h0m1 0h0m0 1h0m0 0h0m0 0h0m1 0h0m0-1h0m0 0h0m1 0h0m0 1h0m0-1h0m0 0h0m1 1h0m0-1h0m0 0h0m0 1h0m1 0h0m0-1h0m0 0h0m1 0h0m0 0h0m0 0h0m0 0h0m1 1h0m0-1h0m0 1h0m1-1h0m0-1h0m0 1h0m0 0h0m1 0h0m0 0h0m0-1h0m0 1h0m1 1h0m0 0h0m0-1h0m1 1h0m0-1h0m0 1h0m0 0h0m1 0h0m0 1h0m0-2h0m1 1h0m0-1h0m0 0h0m0 1h0m1-1h0m0-1h0m0 2h0m1 0h0m0 0h0m0 0h0m0-2h0m1 1h0m0 0h0m0 0h0m1 0h0m0-1h0m0 1h0m0 0h0m1 0h0m0 1h0m0-1h0m0 0h0m1 0h0m0 1h0m0 0h0m1-1h0m0 0h0m0 1h0m0 0h0m1 0h0m0-2h0m0 1h0m1 1h0m0 0h0m0 0h0m0-1h0m1 1h0m0-1h0m0 0h0m1 0h0m0 1h0m0 0h0m0-1h0m1 0h0m0 0h0m0 1h0m1 0h0m0 0h0m0-1h0m0 0h0m1 0h0m0 0h0m0 0h0m1 0h0m0 0h0m0 0h0m0 0h0m1 0h0m0 0h0m0 0h0m0 1h0m1-1h0m0 1h0m0-1h0m1 0h0m0 1h0m0 0h0m0-1h0m1 0h0m0 0h0m0 1h0m1-1h0m0 1h0m0-2h0m0 1h0m1 0h0m0 0h0m0 1h0m1 0h0m0 0h0m0 0h0m0-1h0m1 0h0m0 0h0m0 1h0m0-1h0m1 0h0m0 0h0m0-1h0m1 0h0m0 2h0m0-1h0m0 0h0m1 1h0m0 0h0m0-1h0m1 1h0m0-1h0m0 0h0m0 0h0m1 1h0m0-1h0m0 1h0m1-1h0m0-1h0m0 2h0m0 0h0m1-1h0m0 1h0m0-1h0m0 0h0m1 0h0m0 0h0m0 0h0m1 0h0m0 0h0m0 0h0m0 0h0m1 0h0m0 0h0m0 0h0m1 1h0m0-1h0m0 0h0m0 1h0m1 0h0m0-1h0m0 0h0m1 0h0m0 0h0m0 0h0m0-1h0m1 1h0m0 1h0m0-1h0m0 0h0m1-1h0m0 2h0m0-1h0m1 1h0m0-1h0m0 0h0m0 1h0m1 0h0m0 0h0m0 1h0m1-1h0m0 0h0m0 0h0m0 0h0m1 0h0m0-1h0m0 0h0m1 0h0m0 0h0m0 0h0m0 1h0m1-1h0m0 0h0m0 2h0m1-2h0m0 0h0m0 1h0m0-1h0m1 0h0m0 0h0m0 0h0m1 0h0m0 1h0m0 1h0m1-2h0m0 1h0m0 0h0m1-1h0m0 1h0m0 0h0m0 0h0m1 0h0m0-2h0m0-1h0m1 1h0m0-1h0m0 0h0m1 0h0m0 0h0m0 0h0m0 1h0m1 0h0m0-1h0m0 0h0m1 1h0m0 1h0m0-2h0m1 1h0m0-1h0m0 1h0m1 0h0m0 0h0m0 0h0m0 0h0m1 0h0m0 0h0m0 0h0m1 0h0m0 0h0m0 0h0m1 0h0m0-1h0m0 1h0m1 0h0m0 0h0m0 0h0m1-1h0m0 1h0m0 0h0m0 0h0m1 0h0m0 0h0m0 0h0m1 0h0m0 1h0m0-1h0m1 0h0m0 1h0m0 0h0m0-1h0m1 0h0m0 0h0m0 1h0m1 0h0m0-1h0m0 1h0m1-1h0m0 1h0m0-1h0m1 2h0m0-1h0m0-1h0m1 2h0m0-1h0m0-1h0m0 1h0m1 0h0m0-1h0m0 2h0m1-1h0m0-1h0m0 0h0m1 0h0m0 1h0m0 1h0m0-1h0m1 0h0m0 0h0m0 0h0m1 0h0m0 0h0m0 0h0m1-1h0m0 2h0m0-2h0m1 1h0m0 0h0m0 1h0m1-3h0m0 2h0m0-1h0m1 0h0m0 0h0m0 1h0m0-2h0m1 1h0m0 1h0m0 0h0m1 0h0m0 0h0m0 0h0m1-1h0m0 2h0m0-1h0m0 0h0m1 0h0m0 0h0m0 0h0m1 1h0m0-1h0m0 0h0m1-1h0m0 2h0m0-1h0m1 0h0m0 0h0m0 0h0m1 0h0m0 1h0m0-1h0m0 1h0m1-1h0m0 0h0m0 0h0m1 0h0m0 0h0m0 0h0m1 0h0m0 1h0m0-1h0m0-1h0m1 1h0m0 1h0m1-1h0m0-1h0m0 1h0m0 0h0m1 0h0m0 0h0m0 1h0m1-1h0m0-1h0m6 1h0m0 0h0m0 0h0m1 0h0m0 1h0m0-1h0m1 1h0m0-1h0m0 1h0m0-1h0m1 0h0m0 0h0m1 0h0m0 0h0m0 0h0m0 2h0m1-2h0m0 1h0m0-2h0m1 0h0m0 1h0m0 1h0m1-1h0m0 0h0m0 0h0m0 0h0m1 0h0m0 0h0m0 0h0m1 0h0m0-1h0m0 1h0m1 0h0m0 0h0m0 0h0m1-1h0m0 1h0m0 0h0m0 1h0m1-1h0m0 0h0m0 0h0m1 0h0m0 0h0m0 0h0m1 0h0m0 1h0m0 0h0m1-2h0m0 0h0m0 1h0m1 0h0m0 0h0m0 0h0m0 0h0m1 0h0m0 0h0m0 0h0m1 0h0m0 0h0m0 0h0m1 0h0m0 0h0m0 0h0m0 1h0m1 0h0m0-1h0m0 0h0m1 1h0m0-1h0m0 1h0m1 0h0m0-1h0m0 0h0m1 0h0m0 0h0m0 0h0m1 0h0m0 0h0m0 0h0m1 0h0m0 1h0m0-1h0m0-1h0m1 2h0m0-1h0m0 0h0m1-1h0m0 3h0m0-2h0m1 0h0m0 0h0m0 0h0m1 1h0m0-1h0m0 1h0m1 0h0m0 0h0m0 0h0m0 0h0m1-1h0m0 0h0m0 0h0m1 0h0m0 0h0m0-1h0m1 2h0m0-1h0m0 0h0m0 1h0" stroke="#000" stroke-width="3.0" stroke-linecap="round" fill="none"/>
<path transform="translate(.5 .5)" d="M184 1004h0m246 0h0m791-2h0m1 1h0m2 0h0" stroke="#000" stroke-width="3.0" stroke-linecap="round" fill="none"/>
<circle cx="1216.5" cy="758.5" r="0.95" fill="#333" stroke="#000" stroke-width="0.9"/>
<circle cx="499.5" cy="791.5" r="0.95" fill="#333" stroke="#000" stroke-width="0.9"/>
<circle cx="941.5" cy="791.5" r="0.95" fill="#333" stroke="#000" stroke-width="0.9"/>
<circle cx="1264.5" cy="791.5" r="0.95" fill="#333" stroke="#000" stroke-width="0.9"/>
<circle cx="1265.5" cy="791.5" r="0.95" fill="#333" stroke="#000" stroke-width="0.9"/>
<circle cx="1267.5" cy="791.5" r="0.95" fill="#333" stroke="#000" stroke-width="0.9"/>
<circle cx="1268.5" cy="791.5" r="0.95" fill="#333" stroke="#000" stroke-width="0.9"/>
<circle cx="1269.5" cy="791.5" r="0.95" fill="#333" stroke="#000" stroke-width="0.9"/>
<circle cx="1265.5" cy="823.5" r="0.95" fill="#333" stroke="#000" stroke-width="0.9"/>
<circle cx="184.5" cy="856.5" r="0.95" fill="#333" stroke="#000" stroke-width="0.9"/>
<circle cx="576.5" cy="856.5" r="0.95" fill="#333" stroke="#000" stroke-width="0.9"/>
<circle cx="1156.5" cy="856.5" r="0.95" fill="#333" stroke="#000" stroke-width="0.9"/>
<circle cx="1225.5" cy="856.5" r="0.95" fill="#333" stroke="#000" stroke-width="0.9"/>
<circle cx="1228.5" cy="856.5" r="0.95" fill="#333" stroke="#000" stroke-width="0.9"/>
<circle cx="1245.5" cy="856.5" r="0.95" fill="#333" stroke="#000" stroke-width="0.9"/>
<circle cx="1263.5" cy="856.5" r="0.95" fill="#333" stroke="#000" stroke-width="0.9"/>
<circle cx="1265.5" cy="856.5" r="0.95" fill="#333" stroke="#000" stroke-width="0.9"/>
<circle cx="184.5" cy="889.5" r="0.95" fill="#333" stroke="#000" stroke-width="0.9"/>
<circle cx="576.5" cy="889.5" r="0.95" fill="#333" stroke="#000" stroke-width="0.9"/>
<circle cx="1156.5" cy="889.5" r="0.95" fill="#333" stroke="#000" stroke-width="0.9"/>
<circle cx="1225.5" cy="889.5" r="0.95" fill="#333" stroke="#000" stroke-width="0.9"/>
<circle cx="1228.5" cy="889.5" r="0.95" fill="#333" stroke="#000" stroke-width="0.9"/>
<circle cx="1245.5" cy="889.5" r="0.95" fill="#333" stroke="#000" stroke-width="0.9"/>
<circle cx="1263.5" cy="889.5" r="0.95" fill="#333" stroke="#000" stroke-width="0.9"/>
<circle cx="1265.5" cy="889.5" r="0.95" fill="#333" stroke="#000" stroke-width="0.9"/>
<path d="M183.0 958.8h3l-1.5 -2.8z" fill="#f44" stroke="#f00" stroke-width="0.9" stroke-linejoin="miter"/>
<path d="M498.0 958.8h3l-1.5 -2.8z" fill="#f44" stroke="#f00" stroke-width="0.9" stroke-linejoin="miter"/>
<path d="M499.0 958.8h3l-1.5 -2.8z" fill="#f44" stroke="#f00" stroke-width="0.9" stroke-linejoin="miter"/>
<path d="M575.0 958.8h3l-1.5 -2.8z" fill="#f44" stroke="#f00" stroke-width="0.9" stroke-linejoin="miter"/>
<path d="M940.0 958.8h3l-1.5 -2.8z" fill="#f44" stroke="#f00" stroke-width="0.9" stroke-linejoin="miter"/>
<path d="M941.0 958.8h3l-1.5 -2.8z" fill="#f44" stroke="#f00" stroke-width="0.9" stroke-linejoin="miter"/>
<path d="M1155.0 958.8h3l-1.5 -2.8z" fill="#f44" stroke="#f00" stroke-width="0.9" stroke-linejoin="miter"/>
<path d="M1215.0 958.8h3l-1.5 -2.8z" fill="#f44" stroke="#f00" stroke-width="0.9" stroke-linejoin="miter"/>
<path d="M1224.0 958.8h3l-1.5 -2.8z" fill="#f44" stroke="#f00" stroke-width="0.9" stroke-linejoin="miter"/>
<path d="M1227.0 958.8h3l-1.5 -2.8z" fill="#f44" stroke="#f00" stroke-width="0.9" stroke-linejoin="miter"/>
<path d="M1244.0 958.8h3l-1.5 -2.8z" fill="#f44" stroke="#f00" stroke-width="0.9" stroke-linejoin="miter"/>
<path d="M1262.0 958.8h3l-1.5 -2.8z" fill="#f44" stroke="#f00" stroke-width="0.9" stroke-linejoin="miter"/>
<path d="M1264.0 958.8h3l-1.5 -2.8z" fill="#f44" stroke="#f00" stroke-width="0.9" stroke-linejoin="miter"/>
<path d="M1265.0 958.8h3l-1.5 -2.8z" fill="#f44" stroke="#f00" stroke-width="0.9" stroke-linejoin="miter"/>
<path d="M1267.0 958.8h3l-1.5 -2.8z" fill="#f44" stroke="#f00" stroke-width="0.9" stroke-linejoin="miter"/>
<path d="M1268.0 958.8h3l-1.5 -2.8z" fill="#f44" stroke="#f00" stroke-width="0.9" stroke-linejoin="miter"/>
<path transform="translate(.5 .5)" d="M576 980h0" stroke="#f00" stroke-width="2.2" stroke-linecap="round" fill="none"/>
<line x1="162.0" x2="162.0" y1="954.5" y2="725.5" stroke="#800080" stroke-width="2.08" stroke-dasharray="2.08 3.44"/>
<line x1="1216.0" x2="1216.0" y1="954.5" y2="725.5" stroke="#800080" stroke-width="2.08" stroke-dasharray="2.08 3.44"/>
<line x1="1220.0" x2="1220.0" y1="954.5" y2="725.5" stroke="#800080" stroke-width="2.08" stroke-dasharray="2.08 3.44"/>
<line x1="1291.0" x2="1291.0" y1="954.5" y2="725.5" stroke="#800080" stroke-width="2.08" stroke-dasharray="2.08 3.44"/>
<line x1="1303.0" x2="1303.0" y1="954.5" y2="725.5" stroke="#800080" stroke-width="2.08" stroke-dasharray="2.08 3.44"/>
<line x1="162.0" x2="162.0" y1="1011.5" y2="954.5" stroke="#800080" stroke-width="2.08" stroke-dasharray="2.08 3.44"/>
<line x1="1216.0" x2="1216.0" y1="1011.5" y2="954.5" stroke="#800080" stroke-width="2.08" stroke-dasharray="2.08 3.44"/>
<line x1="1220.0" x2="1220.0" y1="1011.5" y2="954.5" stroke="#800080" stroke-width="2.08" stroke-dasharray="2.08 3.44"/>
<line x1="1291.0" x2="1291.0" y1="1011.5" y2="954.5" stroke="#800080" stroke-width="2.08" stroke-dasharray="2.08 3.44"/>
<line x1="1303.0" x2="1303.0" y1="1011.5" y2="954.5" stroke="#800080" stroke-width="2.08" stroke-dasharray="2.08 3.44"/>
</g>
<rect x="105.5" y="725.5" width="1380.0" height="286.0" fill="none" stroke="#000" stroke-width="1.06"/>
<line x1="105.5" x2="1485.5" y1="954.5" y2="954.5" stroke="#000" stroke-width="1.06"/>
<line x1="162.5" x2="162.5" y1="1011.5" y2="1016.9" stroke="#000" stroke-width="1"/>
<text x="162.4" y="1031.6" text-anchor="middle">0</text>
<line x1="431.5" x2="431.5" y1="1011.5" y2="1016.9" stroke="#000" stroke-width="1"/>
<text x="430.9" y="1031.6" text-anchor="middle">2000</text>
<line x1="699.5" x2="699.5" y1="1011.5" y2="1016.9" stroke="#000" stroke-width="1"/>
<text x="699.4" y="1031.6" text-anchor="middle">4000</text>
<line x1="968.5" x2="968.5" y1="1011.5" y2="1016.9" stroke="#000" stroke-width="1"/>
<text x="967.8" y="1031.6" text-anchor="middle">6000</text>
<line x1="1236.5" x2="1236.5" y1="1011.5" y2="1016.9" stroke="#000" stroke-width="1"/>
<text x="1236.3" y="1031.6" text-anchor="middle">8000</text>
<line x1="105.5" x2="100.1" y1="921.5" y2="921.5" stroke="#000" stroke-width="1"/>
<text x="95.8" y="926.8" text-anchor="end">OBS not OK</text>
<line x1="105.5" x2="100.1" y1="889.5" y2="889.5" stroke="#000" stroke-width="1"/>
<text x="95.8" y="894.2" text-anchor="end">dr &gt; 5</text>
<line x1="105.5" x2="100.1" y1="856.5" y2="856.5" stroke="#000" stroke-width="1"/>
<text x="95.8" y="861.7" text-anchor="end">Ion. rad.</text>
<line x1="105.5" x2="100.1" y1="823.5" y2="823.5" stroke="#000" stroke-width="1"/>
<text x="95.8" y="829.1" text-anchor="end">Sat. pixel.</text>
<line x1="105.5" x2="100.1" y1="791.5" y2="791.5" stroke="#000" stroke-width="1"/>
<text x="95.8" y="796.6" text-anchor="end">not track</text>
<line x1="105.5" x2="100.1" y1="758.5" y2="758.5" stroke="#000" stroke-width="1"/>
<text x="95.8" y="764.0" text-anchor="end">not Kalman</text>
<line x1="105.5" x2="100.1" y1="1009.5" y2="1009.5" stroke="#000" stroke-width="1"/>
<text x="95.8" y="1013.8" text-anchor="end">0</text>
<line x1="105.5" x2="100.1" y1="983.5" y2="983.5" stroke="#000" stroke-width="1"/>
<text x="95.8" y="987.8" text-anchor="end">5</text>
<line x1="105.5" x2="100.1" y1="957.5" y2="957.5" stroke="#000" stroke-width="1"/>
<text x="95.8" y="961.9" text-anchor="end">10</text>
<line x1="105.5" x2="102.2" y1="996.5" y2="996.5" stroke="#000" stroke-width="1"/>
<line x1="105.5" x2="102.2" y1="970.5" y2="970.5" stroke="#000" stroke-width="1"/>
<text transform="translate(70,983) rotate(-90)" text-anchor="middle">dr</text>
</svg>
</body></html>
